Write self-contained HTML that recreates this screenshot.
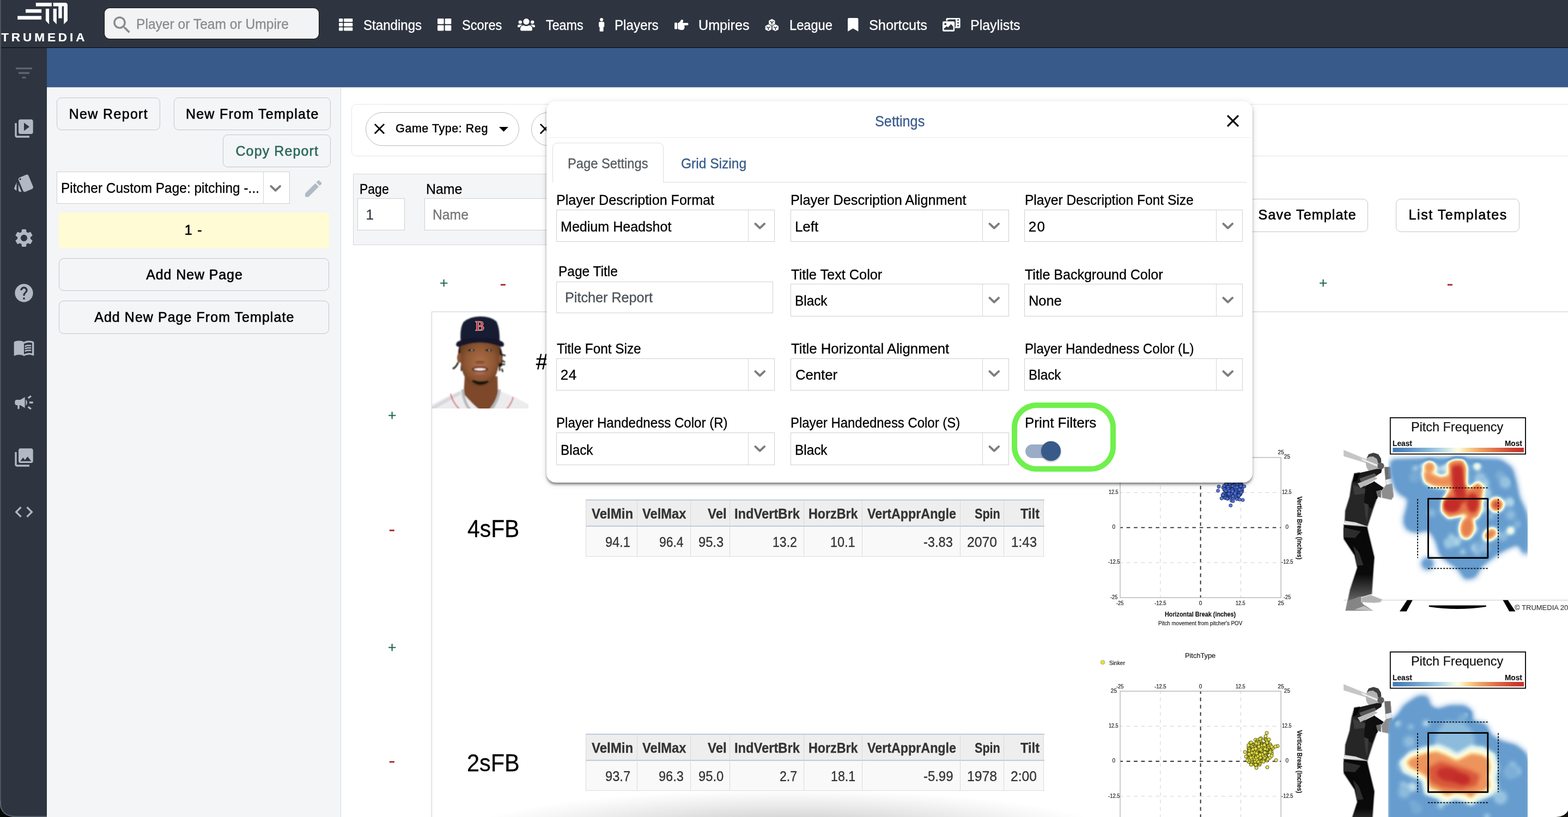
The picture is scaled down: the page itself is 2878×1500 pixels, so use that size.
<!DOCTYPE html>
<html lang="en"><head><meta charset="utf-8"><title>TruMedia - Custom Page Settings</title>
<style>
html,body{margin:0;padding:0;}
body{width:2878px;height:1500px;overflow:hidden;background:#fff;position:relative;font-family:"Liberation Sans",sans-serif;}
div,svg.a,span.t{position:absolute;}
#root{left:0;top:0;width:2878px;height:1500px;overflow:hidden;will-change:transform;width:2879px;height:1501px;}
span.t{white-space:nowrap;transform-origin:0 50%;display:block;-webkit-text-stroke:0.32px currentColor;}
svg{overflow:visible;}
</style></head>
<body>
<div id="root">
<div style="left:0px;top:0px;width:2878px;height:87px;background:#2e3440;"></div>
<div style="left:0px;top:87px;width:2878px;height:1.5px;background:#050608;"></div>
<div style="left:0px;top:88px;width:86px;height:1412px;background:#2e3440;"></div>
<div style="left:86px;top:88px;width:2792px;height:72px;background:#375a8a;"></div>
<div style="left:86px;top:160px;width:539px;height:1340px;background:#f4f5f7;"></div>
<div style="left:625px;top:160px;width:1.2px;height:1340px;background:#d6d9df;"></div>
<div style="left:86px;top:160px;width:2792px;height:1px;background:#c9ccd1;"></div>
<div style="left:0px;top:0px;width:1.6px;height:1500px;background:#4f535c;"></div>
<svg class="a" style="left:0;top:0" width="170" height="87" viewBox="0 0 170 87">
<g fill="#fff">
<rect x="65.8" y="5" width="29.1" height="6.6"/>
<rect x="47" y="16.9" width="29.1" height="6.5"/>
<rect x="32.2" y="29.3" width="43.9" height="6.6"/>
<polygon points="83.9,16.1 90.1,16.1 90.1,44.6 83.9,38"/>
<path d="M97.7 5 H119.5 Q124 5 124 9.5 V38 L117.2 44.6 V11.6 H113.7 V33.4 H107.3 V11.6 H97.7 Z"/>
<polygon points="97.7,16.1 103.9,16.1 103.9,44.6 97.7,38"/>
</g></svg>
<span class="t" style="left:2.17px;top:57.67px;font-size:22.6px;line-height:22.6px;color:#fff;font-weight:bold;letter-spacing:4.871px;-webkit-text-stroke-width:0.15px;">TRUMEDIA</span>
<div style="left:192px;top:14.5px;width:393px;height:56.5px;background:#f2f3f5;border-radius:9px;box-shadow:0 0 0 1px #111;"></div>
<svg class="a" style="left:202.8px;top:24.6px" width="41.8" height="41.8" viewBox="0 0 24 24"><path fill="#8a8a8a" d="M15.5 14h-.79l-.28-.27C15.410 12.590 16 11.110 16 9.500 16 5.910 13.090 3 9.500 3S3 5.910 3 9.500 5.910 16 9.500 16c1.610 0 3.090-.590 4.230-1.570l.27.280v.790l5 4.990L20.490 19l-4.990-5zm-6 0C7.010 14 5 11.990 5 9.500S7.010 5 9.500 5 14 7.010 14 9.500 11.990 14 9.500 14z"/></svg>
<span class="t" style="left:250.23px;top:30.99px;font-size:26px;line-height:26px;color:#8b8b8b;transform:scaleX(0.9463);">Player or Team or Umpire</span>
<span class="t" style="left:666.92px;top:33.19px;font-size:26px;line-height:26px;color:#fff;transform:scaleX(0.9267);-webkit-text-stroke-width:0.3px;">Standings</span>
<span class="t" style="left:847.74px;top:33.19px;font-size:26px;line-height:26px;color:#fff;transform:scaleX(0.9051);-webkit-text-stroke-width:0.3px;">Scores</span>
<span class="t" style="left:1001.73px;top:33.19px;font-size:26px;line-height:26px;color:#fff;transform:scaleX(0.8957);-webkit-text-stroke-width:0.3px;">Teams</span>
<span class="t" style="left:1128.27px;top:33.19px;font-size:26px;line-height:26px;color:#fff;transform:scaleX(0.9293);-webkit-text-stroke-width:0.3px;">Players</span>
<span class="t" style="left:1282.32px;top:33.19px;font-size:26px;line-height:26px;color:#fff;transform:scaleX(0.9660);-webkit-text-stroke-width:0.3px;">Umpires</span>
<span class="t" style="left:1449.31px;top:33.19px;font-size:26px;line-height:26px;color:#fff;transform:scaleX(0.9082);-webkit-text-stroke-width:0.3px;">League</span>
<span class="t" style="left:1595.06px;top:33.19px;font-size:26px;line-height:26px;color:#fff;transform:scaleX(0.9725);-webkit-text-stroke-width:0.3px;">Shortcuts</span>
<span class="t" style="left:1781.20px;top:33.19px;font-size:26px;line-height:26px;color:#fff;transform:scaleX(0.9607);-webkit-text-stroke-width:0.3px;">Playlists</span>
<svg class="a" style="left:622px;top:34.3px" width="25.3" height="22.5" viewBox="0 0 25.3 22.5"><g fill="#fff"><rect x="0" y="0.00" width="7.4" height="6.3" rx="1.3"/><rect x="9.2" y="0.00" width="16.1" height="6.3" rx="1.3"/><rect x="0" y="8.10" width="7.4" height="6.3" rx="1.3"/><rect x="9.2" y="8.10" width="16.1" height="6.3" rx="1.3"/><rect x="0" y="16.20" width="7.4" height="6.3" rx="1.3"/><rect x="9.2" y="16.20" width="16.1" height="6.3" rx="1.3"/></g></svg>
<svg class="a" style="left:802.9px;top:34.3px" width="25.3" height="22.5" viewBox="0 0 25.3 22.5"><g fill="#fff"><rect x="0.00" y="0.00" width="11.6" height="10.3" rx="1.4"/><rect x="0.00" y="12.20" width="11.6" height="10.3" rx="1.4"/><rect x="13.70" y="0.00" width="11.6" height="10.3" rx="1.4"/><rect x="13.70" y="12.20" width="11.6" height="10.3" rx="1.4"/></g></svg>
<svg class="a" style="left:949.6px;top:34.3px" width="32" height="22.5" viewBox="0 0 32 22.5"><g fill="#fff"><circle cx="16" cy="5.6" r="5.6"/><path d="M7.2 22.5 Q5 22.5 5 20 Q5 12.8 11 12.6 Q13.5 14 16 14 Q18.500 14 21 12.6 Q27 12.800 27 20 Q27 22.500 24.800 22.500 Z"/><circle cx="4.8" cy="6.6" r="3.2"/><circle cx="27.2" cy="6.6" r="3.200"/><path d="M0 14.2 Q0 11.200 3.200 11.200 H6.400 Q7.600 11.200 8.400 11.800 Q4.600 13.600 4 16 H1 Q0 16 0 15 Z"/><path d="M32 14.200 Q32 11.200 28.800 11.200 H25.600 Q24.400 11.200 23.600 11.800 Q27.400 13.600 28 16 H31 Q32 16 32 15 Z"/></g></svg>
<svg class="a" style="left:1098.6px;top:33.2px" width="10.2" height="24.8" viewBox="0 0 10.2 24.8"><g fill="#fff"><circle cx="5.1" cy="3.1" r="3.1"/><path d="M2.3 7 H7.900 Q10.200 7 10.200 9.300 V15.500 Q10.200 16.400 9.300 16.400 H8.600 V23.800 Q8.600 24.800 7.600 24.800 H2.600 Q1.600 24.800 1.600 23.800 V16.400 H0.900 Q0 16.400 0 15.500 V9.300 Q0 7 2.300 7 Z"/></g></svg>
<svg class="a" style="left:1237.6px;top:35.5px" width="25.6" height="19" viewBox="0 0 25.6 19"><g fill="#fff"><rect x="0" y="5.5" width="5" height="12" rx="1"/><path d="M6.2 6.400 Q9 5.600 11 2.400 Q12 0 13.800 0 Q16.200 0 16 2.800 Q15.800 4.600 15 6 H23.200 Q25.600 6 25.600 8.200 Q25.600 10.400 23.200 10.400 H17.600 Q19 11.400 18.400 13 Q19.200 14.400 18 15.600 Q18.200 17.600 16.400 18.400 Q15.400 19 13.600 19 H11.600 Q9.200 19 6.200 17 Z"/></g></svg>
<svg class="a" style="left:1403.8px;top:34.6px" width="25.6" height="22.2" viewBox="0 0 25.6 22.2"><polygon points="12.80,0.30 17.95,3.10 17.95,8.98 12.80,11.50 7.65,8.98 7.65,3.10" fill="#fff" stroke="#fff" stroke-width="1" stroke-linejoin="round"/><path d="M9.33 4.22 L12.80 6.18 L16.27 4.22 M12.80 6.18 V9.93" fill="none" stroke="#2e3440" stroke-width="1.500"/><polygon points="6.30,10.30 11.45,13.10 11.45,18.98 6.30,21.50 1.15,18.98 1.15,13.10" fill="#fff" stroke="#fff" stroke-width="1" stroke-linejoin="round"/><path d="M2.83 14.22 L6.30 16.18 L9.77 14.22 M6.30 16.18 V19.93" fill="none" stroke="#2e3440" stroke-width="1.500"/><polygon points="19.30,10.30 24.45,13.10 24.45,18.98 19.30,21.50 14.15,18.98 14.15,13.10" fill="#fff" stroke="#fff" stroke-width="1" stroke-linejoin="round"/><path d="M15.83 14.22 L19.30 16.18 L22.77 14.22 M19.30 16.18 V19.93" fill="none" stroke="#2e3440" stroke-width="1.500"/></svg>
<svg class="a" style="left:1555.9px;top:33.2px" width="19.4" height="24.8" viewBox="0 0 19.4 24.8"><path fill="#fff" d="M2.300 0 H17.100 Q19.400 0 19.400 2.300 V24.800 L9.700 19.200 L0 24.800 V2.300 Q0 0 2.300 0 Z"/></svg>
<svg class="a" style="left:1729.8px;top:33.2px" width="32.6" height="24.8" viewBox="0 0 32.6 24.8"><rect x="6.5" y="0" width="26.1" height="18.6" rx="2.200" fill="#fff"/><rect x="9" y="2.6" width="15" height="13.500" fill="#2e3440"/><rect x="27.300" y="2.400" width="2.600" height="2.600" fill="#2e3440"/><rect x="27.300" y="7.600" width="2.600" height="2.600" fill="#2e3440"/><rect x="27.300" y="12.800" width="2.600" height="2.600" fill="#2e3440"/><rect x="9.3" y="1.6" width="2.400" height="1.600" fill="#fff"/><rect x="-0.8" y="5.400" width="23.800" height="20.200" rx="3" fill="#2e3440"/><rect x="0" y="6.200" width="22.200" height="18.600" rx="2.200" fill="#fff"/><path d="M2.600 21.800 V19.500 L7.800 15.200 L10.200 17.200 L15.400 11.200 L19.600 16 V21.800 Z" fill="#2e3440"/><circle cx="5.200" cy="11.200" r="1.900" fill="#2e3440"/></svg>
<svg class="a" style="left:24px;top:114px" width="40" height="40" viewBox="0 0 24 24"><path fill="#5d6570" d="M10 18h4v-2h-4v2zM3 6v2h18V6H3zm3 7h12v-2H6v2z"/></svg>
<svg class="a" style="left:24px;top:215.5px" width="40" height="40" viewBox="0 0 24 24"><path fill="#b1bac4" d="M4 6H2v14c0 1.1.9 2 2 2h14v-2H4V6zm16-4H8c-1.1 0-2 .9-2 2v12c0 1.1.9 2 2 2h12c1.1 0 2-.9 2-2V4c0-1.1-.9-2-2-2zm-8 12.5v-9l6 4.5-6 4.5z"/></svg>
<svg class="a" style="left:24px;top:316.2px" width="40" height="40" viewBox="0 0 24 24"><path fill="#b1bac4" d="M2.53 19.65l1.34.56v-9.03l-2.43 5.86c-.41 1.02.08 2.19 1.09 2.61zm19.5-3.7L17.07 3.98c-.31-.75-1.04-1.21-1.81-1.23-.26 0-.53.04-.79.15L7.1 5.95c-.75.31-1.21 1.03-1.23 1.8-.01.27.04.54.15.8l4.96 11.97c.31.76 1.05 1.22 1.83 1.23.26 0 .52-.05.77-.15l7.36-3.05c1.02-.42 1.51-1.59 1.09-2.6zM7.88 8.75c-.55 0-1-.45-1-1s.45-1 1-1 1 .45 1 1-.45 1-1 1zm-2 11c0 1.1.9 2 2 2h1.45l-3.45-8.34v6.34z"/></svg>
<svg class="a" style="left:24px;top:416.9px" width="40" height="40" viewBox="0 0 24 24"><path fill="#b1bac4" d="M19.14 12.94c.04-.3.06-.61.06-.94 0-.32-.02-.64-.07-.94l2.030-1.580c.18-.14.23-.41.12-.61l-1.920-3.320c-.12-.22-.37-.29-.59-.22l-2.390.960c-.5-.38-1.030-.7-1.620-.94l-.36-2.540c-.04-.24-.24-.41-.48-.41h-3.840c-.24 0-.43.17-.47.41l-.36 2.540c-.59.24-1.130.57-1.620.94l-2.390-.960c-.22-.08-.47 0-.59.22L2.740 8.870c-.12.21-.08.47.12.61l2.030 1.580c-.05.3-.09.63-.09.94s.02.64.07.94l-2.030 1.580c-.18.14-.23.41-.12.61l1.920 3.320c.12.22.37.29.59.22l2.390-.960c.5.38 1.030.7 1.620.94l.36 2.540c.05.24.24.41.48.41h3.840c.24 0 .44-.17.47-.41l.36-2.540c.59-.24 1.130-.56 1.620-.94l2.390.960c.22.08.47 0 .59-.22l1.920-3.320c.12-.22.07-.47-.12-.61l-2.010-1.580zM12 15.600c-1.980 0-3.600-1.620-3.600-3.600s1.620-3.600 3.600-3.600 3.600 1.620 3.600 3.600-1.620 3.600-3.600 3.600z"/></svg>
<svg class="a" style="left:24px;top:517.6px" width="40" height="40" viewBox="0 0 24 24"><path fill="#b1bac4" d="M12 2C6.48 2 2 6.48 2 12s4.48 10 10 10 10-4.48 10-10S17.52 2 12 2zm1 17h-2v-2h2v2zm2.07-7.75l-.9.92C13.45 12.9 13 13.5 13 15h-2v-.5c0-1.1.45-2.1 1.17-2.83l1.24-1.26c.37-.36.59-.86.59-1.41 0-1.1-.9-2-2-2s-2 .9-2 2H8c0-2.21 1.79-4 4-4s4 1.79 4 4c0 .88-.36 1.68-.93 2.25z"/></svg>
<svg class="a" style="left:24px;top:618.3px" width="40" height="40" viewBox="0 0 24 24"><path fill="#b1bac4" d="M21 5c-1.11-.35-2.33-.5-3.5-.5-1.95 0-4.05.4-5.5 1.5-1.45-1.1-3.55-1.5-5.5-1.5S2.45 4.9 1 6v14.65c0 .25.25.5.5.5.1 0 .15-.05.25-.05C3.1 20.45 5.05 20 6.5 20c1.95 0 4.05.4 5.5 1.500 1.350-.850 3.800-1.500 5.500-1.500 1.650 0 3.350.300 4.750 1.050.100.050.150.050.250.050.250 0 .500-.250.500-.500V6c-.600-.450-1.250-.750-2-1zm0 13.500c-1.100-.350-2.300-.500-3.500-.500-1.700 0-4.150.650-5.500 1.500V8c1.350-.850 3.800-1.500 5.500-1.500 1.200 0 2.400.150 3.500.500v11.500z M17.5 10.500c.880 0 1.730.090 2.500.260V9.240c-.790-.150-1.640-.240-2.500-.240-1.700 0-3.240.290-4.500.830v1.660c1.130-.640 2.700-.990 4.500-.990zM13 12.490v1.660c1.130-.640 2.700-.990 4.500-.990.880 0 1.730.090 2.500.260V11.900c-.790-.150-1.640-.240-2.500-.240-1.700 0-3.240.300-4.500.830zM17.500 14.330c-1.700 0-3.240.290-4.500.830v1.660c1.130-.640 2.700-.990 4.500-.990.880 0 1.730.090 2.500.260v-1.520c-.790-.160-1.640-.240-2.500-.240z"/></svg>
<svg class="a" style="left:24px;top:719.0px" width="40" height="40" viewBox="0 0 24 24"><path fill="#b1bac4" d="M18 11v2h4v-2h-4zm-2 6.610c.96.71 2.210 1.650 3.200 2.390.4-.53.8-1.070 1.200-1.600-.990-.740-2.240-1.680-3.200-2.400-.4.540-.8 1.080-1.200 1.610zM20.400 5.600c-.4-.53-.8-1.070-1.200-1.600-.990.740-2.240 1.680-3.200 2.400.4.530.8 1.070 1.200 1.600.960-.720 2.210-1.650 3.200-2.400zM4 9c-1.100 0-2 .900-2 2v2c0 1.100.900 2 2 2h1v4h2v-4h1l5 3V6L8 9H4zm11.500 3c0-1.330-.580-2.530-1.500-3.350v6.690c.920-.810 1.500-2.010 1.500-3.340z"/></svg>
<svg class="a" style="left:24px;top:819.7px" width="40" height="40" viewBox="0 0 24 24"><path fill="#b1bac4" d="M22 16V4c0-1.100-.900-2-2-2H8c-1.100 0-2 .900-2 2v12c0 1.100.900 2 2 2h12c1.100 0 2-.900 2-2zm-11-4l2.030 2.710L16 11l4 5H8l3-4zM2 6v14c0 1.100.900 2 2 2h14v-2H4V6H2z"/></svg>
<svg class="a" style="left:24px;top:920.4px" width="40" height="40" viewBox="0 0 24 24"><path fill="#b1bac4" d="M9.4 16.6L4.8 12l4.600-4.600L8 6l-6 6 6 6 1.400-1.400zm5.200 0l4.600-4.600-4.600-4.600L16 6l6 6-6 6-1.400-1.400z"/></svg>
<div style="left:104px;top:179px;width:189.5px;height:59.5px;border:1.5px solid #c4c6ca;border-radius:9px;box-sizing:border-box;background:transparent;"></div><span class="t" style="left:126.70px;top:197.04px;font-size:25px;line-height:25px;color:#000;letter-spacing:1.339px;-webkit-text-stroke-width:0.6px;">New Report</span>
<div style="left:319px;top:179px;width:287.5px;height:59.5px;border:1.5px solid #c4c6ca;border-radius:9px;box-sizing:border-box;background:transparent;"></div><span class="t" style="left:340.90px;top:197.04px;font-size:25px;line-height:25px;color:#000;letter-spacing:1.261px;-webkit-text-stroke-width:0.6px;">New From Template</span>
<div style="left:409px;top:247px;width:197.5px;height:59.5px;border:1.5px solid #c4c6ca;border-radius:9px;box-sizing:border-box;background:transparent;"></div><span class="t" style="left:432.45px;top:265.04px;font-size:25px;line-height:25px;color:#2b6a5a;letter-spacing:1.121px;-webkit-text-stroke-width:0.6px;">Copy Report</span>
<div style="left:104px;top:314.5px;width:427.5px;height:59px;background:#fff;border:1px solid #cfcfcf;box-sizing:border-box;"></div>
<div style="left:483px;top:315.5px;width:1px;height:57px;background:#d4d4d4;"></div>
<span class="t" style="left:112.25px;top:331.99px;font-size:26px;line-height:26px;color:#000;transform:scaleX(0.9398);">Pitcher Custom Page: pitching -...</span>
<svg class="a" style="left:487.85px;top:326.85px" width="35.5" height="35.5" viewBox="0 0 20 20"><path fill="#7d7d7d" d="M4.516 7.548c0.436-0.446 1.043-0.481 1.576 0l3.908 3.747 3.908-3.747c0.533-0.481 1.141-0.446 1.574 0 0.436 0.445 0.408 1.197 0 1.615-0.406 0.418-4.695 4.502-4.695 4.502-0.217 0.223-0.502 0.335-0.787 0.335s-0.570-0.112-0.789-0.335c0 0-4.287-4.084-4.695-4.502s-0.436-1.170 0-1.615z"/></svg>
<svg class="a" style="left:554.5px;top:325.5px" width="40.5" height="40.5" viewBox="0 0 24 24"><path fill="#b1bac4" d="M3 17.25V21h3.750L17.810 9.940l-3.750-3.750L3 17.250zM20.710 7.040c.390-.390.390-1.020 0-1.410l-2.340-2.340c-.390-.390-1.020-.390-1.410 0l-1.830 1.830 3.750 3.750 1.830-1.830z"/></svg>
<div style="left:108px;top:390px;width:496px;height:66px;background:#fffbd5;"></div>
<span class="t" style="left:338.82px;top:410.24px;font-size:25px;line-height:25px;color:#000;letter-spacing:1.270px;-webkit-text-stroke-width:0.6px;">1 -</span>
<div style="left:108px;top:474px;width:495.5px;height:59.5px;border:1.5px solid #c4c6ca;border-radius:9px;box-sizing:border-box;background:transparent;"></div><span class="t" style="left:268.20px;top:491.54px;font-size:25px;line-height:25px;color:#000;letter-spacing:0.897px;-webkit-text-stroke-width:0.6px;">Add New Page</span>
<div style="left:108px;top:552px;width:495.5px;height:60.5px;border:1.5px solid #c4c6ca;border-radius:9px;box-sizing:border-box;background:transparent;"></div><span class="t" style="left:173.20px;top:569.84px;font-size:25px;line-height:25px;color:#000;letter-spacing:1.045px;-webkit-text-stroke-width:0.6px;">Add New Page From Template</span>
<div style="left:644.5px;top:191px;width:2300px;height:95.5px;border:1px solid #e4e5e7;border-radius:9px;box-sizing:border-box;"></div>
<div style="left:671px;top:206px;width:281.5px;height:62px;border:1.3px solid #b9b9b9;border-radius:31px;box-sizing:border-box;"></div>
<svg class="a" style="left:680.3px;top:220.3px" width="33" height="33" viewBox="0 0 24 24"><path fill="#000" d="M19 6.410L17.590 5 12 10.590 6.410 5 5 6.410 10.590 12 5 17.590 6.410 19 12 13.410 17.590 19 19 17.590 13.410 12z"/></svg>
<span class="t" style="left:726.12px;top:226.40px;font-size:21.5px;line-height:21.5px;color:#000;letter-spacing:0.551px;-webkit-text-stroke-width:0.5px;">Game Type: Reg</span>
<svg class="a" style="left:904px;top:216px" width="41" height="41" viewBox="0 0 24 24"><path fill="#000" d="M7 10l5 5 5-5z"/></svg>
<div style="left:975px;top:206px;width:281.5px;height:62px;border:1.3px solid #b9b9b9;border-radius:31px;box-sizing:border-box;"></div>
<svg class="a" style="left:984.3px;top:220.3px" width="33" height="33" viewBox="0 0 24 24"><path fill="#000" d="M19 6.410L17.590 5 12 10.590 6.410 5 5 6.410 10.590 12 5 17.590 6.410 19 12 13.410 17.590 19 19 17.590 13.410 12z"/></svg>
<div style="left:648px;top:319px;width:1500px;height:130.5px;background:#f4f5f7;border:1px solid #d3d6dc;box-sizing:border-box;"></div>
<span class="t" style="left:660.36px;top:333.99px;font-size:26px;line-height:26px;color:#000;transform:scaleX(0.8839);">Page</span>
<span class="t" style="left:782.21px;top:333.99px;font-size:26px;line-height:26px;color:#000;transform:scaleX(0.9585);">Name</span>
<div style="left:656px;top:364px;width:86.5px;height:59px;background:#fff;border:1px solid #cfcfcf;box-sizing:border-box;"></div>
<div style="left:779px;top:364px;width:400px;height:59px;background:#fff;border:1px solid #cfcfcf;box-sizing:border-box;"></div>
<span class="t" style="left:671.55px;top:380.99px;font-size:26px;line-height:26px;color:#3a3f45;">1</span>
<span class="t" style="left:794.22px;top:380.99px;font-size:26px;line-height:26px;color:#757575;transform:scaleX(0.9509);">Name</span>
<div style="left:2286px;top:365px;width:225px;height:60.5px;border:1.5px solid #c4c6ca;border-radius:9px;box-sizing:border-box;background:transparent;"></div><span class="t" style="left:2309.57px;top:382.34px;font-size:25px;line-height:25px;color:#000;letter-spacing:1.181px;-webkit-text-stroke-width:0.6px;">Save Template</span>
<div style="left:2562px;top:365px;width:226.5px;height:60.5px;border:1.5px solid #c4c6ca;border-radius:9px;box-sizing:border-box;background:transparent;"></div><span class="t" style="left:2585.60px;top:382.34px;font-size:25px;line-height:25px;color:#000;letter-spacing:1.561px;-webkit-text-stroke-width:0.6px;">List Templates</span>
<span class="t" style="left:807.39px;top:505.90px;font-size:26px;line-height:26px;color:#2b6a5a;transform-origin:7.61px 13.30px;transform:scale(1.0151,1.0047);-webkit-text-stroke-width:0.3px;">+</span>
<span class="t" style="left:2421.39px;top:505.90px;font-size:26px;line-height:26px;color:#2b6a5a;transform-origin:7.61px 13.30px;transform:scale(1.0151,1.0047);-webkit-text-stroke-width:0.3px;">+</span>
<span class="t" style="left:919.14px;top:508.08px;font-size:26px;line-height:26px;color:#a3202a;transform-origin:4.36px 15.12px;transform:scale(1.3501,1.1058);-webkit-text-stroke-width:0.3px;">-</span>
<span class="t" style="left:2657.14px;top:508.08px;font-size:26px;line-height:26px;color:#a3202a;transform-origin:4.36px 15.12px;transform:scale(1.3501,1.1058);-webkit-text-stroke-width:0.3px;">-</span>
<span class="t" style="left:711.89px;top:748.70px;font-size:26px;line-height:26px;color:#2b6a5a;transform-origin:7.61px 13.30px;transform:scale(1.0151,1.0047);-webkit-text-stroke-width:0.3px;">+</span>
<span class="t" style="left:711.89px;top:1174.70px;font-size:26px;line-height:26px;color:#2b6a5a;transform-origin:7.61px 13.30px;transform:scale(1.0151,1.0047);-webkit-text-stroke-width:0.3px;">+</span>
<span class="t" style="left:715.14px;top:959.38px;font-size:26px;line-height:26px;color:#a3202a;transform-origin:4.36px 15.12px;transform:scale(1.3501,1.1058);-webkit-text-stroke-width:0.3px;">-</span>
<span class="t" style="left:715.14px;top:1384.38px;font-size:26px;line-height:26px;color:#a3202a;transform-origin:4.36px 15.12px;transform:scale(1.3501,1.1058);-webkit-text-stroke-width:0.3px;">-</span>
<div style="left:792px;top:572px;width:2100px;height:1.3px;background:#c9ccd4;"></div>
<div style="left:791.5px;top:572px;width:1.3px;height:940px;background:#c9ccd4;"></div>
<svg class="a" style="left:792.7px;top:572.7px" width="177" height="177" viewBox="0 0 177 177"><defs><filter id="hb" x="-10%" y="-10%" width="120%" height="120%"><feGaussianBlur stdDeviation="1.3"/></filter><filter id="hb2" x="-10%" y="-10%" width="120%" height="120%"><feGaussianBlur stdDeviation="2.5"/></filter><clipPath id="hc"><rect x="0" y="0" width="177" height="177"/></clipPath><radialGradient id="skin" cx="50%" cy="45%" r="60%"><stop offset="0" stop-color="#ad7048"/><stop offset="0.6" stop-color="#8f5735"/><stop offset="1" stop-color="#633a20"/></radialGradient></defs><g clip-path="url(#hc)"><g filter="url(#hb)"><path d="M-4 180 L-4 172 Q20 158 48 146 Q60 141 66 141 L112 141 Q122 143 132 148 Q158 158 181 172 L181 180 Z" fill="#ececee"/><path d="M0 177 Q30 160 52 148" stroke="#d8d8dc" stroke-width="6" fill="none"/><path d="M34 150 Q38 166 50 178" stroke="#d23a3a" stroke-width="1.8" fill="none"/><path d="M149 156 Q146 168 137 178" stroke="#d23a3a" stroke-width="1.8" fill="none"/><path d="M60 118 L58 150 Q75 170 88 180 L104 180 Q116 166 121 150 L120 118 Z" fill="#7d4a2b"/><path d="M56 142 Q58 166 70 180" stroke="#b9b9b9" stroke-width="5" fill="none"/><path d="M124 142 Q122 162 108 180" stroke="#b9b9b9" stroke-width="5" fill="none"/><path d="M50 62 Q46 78 49 92 L55 92 L56 62 Z" fill="#1a1514"/><path d="M124 62 Q132 76 128 100 L122 100 L121 62 Z" fill="#1a1514"/><path d="M48 92 Q44 102 38 104" stroke="#1a1514" stroke-width="3" fill="none"/><path d="M54 98 L54 108" stroke="#1a1514" stroke-width="2.500" fill="none"/><path d="M128 78 L135 80 M127 88 L134 92 M126 96 L134 96 M124 100 L124 108 M128 104 L130 110" stroke="#1a1514" stroke-width="2.500" fill="none"/><path d="M52 60 Q50 95 58 115 Q68 136 88 137 Q108 136 117 116 Q126 95 124 60 Q88 50 52 60 Z" fill="url(#skin)"/><ellipse cx="50" cy="84" rx="4" ry="9" fill="#8a5232"/><ellipse cx="125" cy="86" rx="3" ry="8" fill="#8a5232"/><ellipse cx="72" cy="70" rx="6.500" ry="2.200" fill="#2a1a12"/><ellipse cx="104" cy="70" rx="6.500" ry="2.200" fill="#2a1a12"/><circle cx="73" cy="70" r="1" fill="#fff"/><circle cx="105" cy="70" r="1" fill="#fff"/><ellipse cx="88" cy="92" rx="9" ry="3" fill="#7a4526" opacity="0.7"/><ellipse cx="88" cy="105" rx="15" ry="5" fill="#6b2f28"/><ellipse cx="88" cy="105" rx="11" ry="2.200" fill="#f3ece6"/><ellipse cx="88" cy="112" rx="10" ry="3" fill="#b06a5a" opacity="0.8"/><path d="M74 126 Q88 138 103 127 Q90 131 74 126 Z" fill="#1d1411" stroke="#1d1411" stroke-width="3"/><path d="M53 58 Q50 30 58 18 Q70 8 88 8 Q108 8 118 17 Q125 30 124 58 Q88 46 53 58 Z" fill="#161a30"/><path d="M44 60 Q44 54 53 52 Q88 42 124 52 Q133 55 132 61 Q130 66 122 62 Q88 50 54 62 Q46 66 44 60 Z" fill="#14172b"/></g></g><text x="87.5" y="34" font-family="Liberation Serif, serif" font-weight="bold" font-size="25" text-anchor="middle" fill="#d5343a" stroke="#f3dede" stroke-width="0.7" filter="url(#hb0)">B</text></svg>
<span class="t" style="left:983.80px;top:643.64px;font-size:40px;line-height:40px;color:#000;">#</span>
<span class="t" style="left:857.88px;top:948.75px;font-size:44px;line-height:44px;color:#000;transform:scaleX(0.9282);">4sFB</span>
<span class="t" style="left:856.63px;top:1378.75px;font-size:44px;line-height:44px;color:#000;transform:scaleX(0.9406);">2sFB</span>
<div style="left:1075.5px;top:918px;width:840.0px;height:48px;background:#eeeeee;"></div>
<div style="left:1075.5px;top:966px;width:840.0px;height:55px;background:#f9f9f9;"></div>
<div style="left:1074.5px;top:917px;width:842.0px;height:2px;background:#bccbe0;"></div>
<div style="left:1074.5px;top:965px;width:842.0px;height:2px;background:#bccbe0;"></div>
<div style="left:1074.5px;top:1020.5px;width:842.0px;height:1.5px;background:#dcdcdc;"></div>
<div style="left:1075.0px;top:918px;width:1px;height:103px;background:#d9d9d9;"></div>
<div style="left:1168.5px;top:918px;width:1px;height:103px;background:#d9d9d9;"></div>
<div style="left:1267.0px;top:918px;width:1px;height:103px;background:#d9d9d9;"></div>
<div style="left:1339.0px;top:918px;width:1px;height:103px;background:#d9d9d9;"></div>
<div style="left:1474.5px;top:918px;width:1px;height:103px;background:#d9d9d9;"></div>
<div style="left:1581.5px;top:918px;width:1px;height:103px;background:#d9d9d9;"></div>
<div style="left:1761.5px;top:918px;width:1px;height:103px;background:#d9d9d9;"></div>
<div style="left:1841.5px;top:918px;width:1px;height:103px;background:#d9d9d9;"></div>
<div style="left:1915.0px;top:918px;width:1px;height:103px;background:#d9d9d9;"></div>
<span class="t" style="left:1086.08px;top:929.79px;font-size:26px;line-height:26px;color:#333;font-weight:bold;transform:scaleX(0.9249);">VelMin</span>
<span class="t" style="left:1178.58px;top:929.79px;font-size:26px;line-height:26px;color:#333;font-weight:bold;transform:scaleX(0.9109);">VelMax</span>
<span class="t" style="left:1298.58px;top:929.79px;font-size:26px;line-height:26px;color:#333;font-weight:bold;transform:scaleX(0.9244);">Vel</span>
<span class="t" style="left:1347.66px;top:929.79px;font-size:26px;line-height:26px;color:#333;font-weight:bold;transform:scaleX(0.9117);">IndVertBrk</span>
<span class="t" style="left:1483.94px;top:929.79px;font-size:26px;line-height:26px;color:#333;font-weight:bold;transform:scaleX(0.8953);">HorzBrk</span>
<span class="t" style="left:1591.58px;top:929.79px;font-size:26px;line-height:26px;color:#333;font-weight:bold;transform:scaleX(0.8955);">VertApprAngle</span>
<span class="t" style="left:1788.80px;top:929.79px;font-size:26px;line-height:26px;color:#333;font-weight:bold;transform:scaleX(0.8302);">Spin</span>
<span class="t" style="left:1872.71px;top:929.79px;font-size:26px;line-height:26px;color:#333;font-weight:bold;transform:scaleX(0.9099);">Tilt</span>
<span class="t" style="left:1111.14px;top:981.79px;font-size:26px;line-height:26px;color:#333;transform:scaleX(0.9029);">94.1</span>
<span class="t" style="left:1210.17px;top:981.79px;font-size:26px;line-height:26px;color:#333;transform:scaleX(0.8802);">96.4</span>
<span class="t" style="left:1281.88px;top:981.79px;font-size:26px;line-height:26px;color:#333;transform:scaleX(0.9108);">95.3</span>
<span class="t" style="left:1418.22px;top:981.79px;font-size:26px;line-height:26px;color:#333;transform:scaleX(0.8885);">13.2</span>
<span class="t" style="left:1524.44px;top:981.79px;font-size:26px;line-height:26px;color:#333;transform:scaleX(0.9019);">10.1</span>
<span class="t" style="left:1695.14px;top:981.79px;font-size:26px;line-height:26px;color:#333;transform:scaleX(0.9076);">-3.83</span>
<span class="t" style="left:1774.97px;top:981.79px;font-size:26px;line-height:26px;color:#333;transform:scaleX(0.9489);">2070</span>
<span class="t" style="left:1856.38px;top:981.79px;font-size:26px;line-height:26px;color:#333;transform:scaleX(0.9310);">1:43</span>
<div style="left:1075.5px;top:1348px;width:840.0px;height:48px;background:#eeeeee;"></div>
<div style="left:1075.5px;top:1396px;width:840.0px;height:55px;background:#f9f9f9;"></div>
<div style="left:1074.5px;top:1347px;width:842.0px;height:2px;background:#bccbe0;"></div>
<div style="left:1074.5px;top:1395px;width:842.0px;height:2px;background:#bccbe0;"></div>
<div style="left:1074.5px;top:1450.5px;width:842.0px;height:1.5px;background:#dcdcdc;"></div>
<div style="left:1075.0px;top:1348px;width:1px;height:103px;background:#d9d9d9;"></div>
<div style="left:1168.5px;top:1348px;width:1px;height:103px;background:#d9d9d9;"></div>
<div style="left:1267.0px;top:1348px;width:1px;height:103px;background:#d9d9d9;"></div>
<div style="left:1339.0px;top:1348px;width:1px;height:103px;background:#d9d9d9;"></div>
<div style="left:1474.5px;top:1348px;width:1px;height:103px;background:#d9d9d9;"></div>
<div style="left:1581.5px;top:1348px;width:1px;height:103px;background:#d9d9d9;"></div>
<div style="left:1761.5px;top:1348px;width:1px;height:103px;background:#d9d9d9;"></div>
<div style="left:1841.5px;top:1348px;width:1px;height:103px;background:#d9d9d9;"></div>
<div style="left:1915.0px;top:1348px;width:1px;height:103px;background:#d9d9d9;"></div>
<span class="t" style="left:1086.08px;top:1359.79px;font-size:26px;line-height:26px;color:#333;font-weight:bold;transform:scaleX(0.9249);">VelMin</span>
<span class="t" style="left:1178.58px;top:1359.79px;font-size:26px;line-height:26px;color:#333;font-weight:bold;transform:scaleX(0.9109);">VelMax</span>
<span class="t" style="left:1298.58px;top:1359.79px;font-size:26px;line-height:26px;color:#333;font-weight:bold;transform:scaleX(0.9244);">Vel</span>
<span class="t" style="left:1347.66px;top:1359.79px;font-size:26px;line-height:26px;color:#333;font-weight:bold;transform:scaleX(0.9117);">IndVertBrk</span>
<span class="t" style="left:1483.94px;top:1359.79px;font-size:26px;line-height:26px;color:#333;font-weight:bold;transform:scaleX(0.8953);">HorzBrk</span>
<span class="t" style="left:1591.58px;top:1359.79px;font-size:26px;line-height:26px;color:#333;font-weight:bold;transform:scaleX(0.8955);">VertApprAngle</span>
<span class="t" style="left:1788.80px;top:1359.79px;font-size:26px;line-height:26px;color:#333;font-weight:bold;transform:scaleX(0.8302);">Spin</span>
<span class="t" style="left:1872.71px;top:1359.79px;font-size:26px;line-height:26px;color:#333;font-weight:bold;transform:scaleX(0.9099);">Tilt</span>
<span class="t" style="left:1110.88px;top:1411.79px;font-size:26px;line-height:26px;color:#333;transform:scaleX(0.9105);">93.7</span>
<span class="t" style="left:1209.14px;top:1411.79px;font-size:26px;line-height:26px;color:#333;transform:scaleX(0.9056);">96.3</span>
<span class="t" style="left:1281.63px;top:1411.79px;font-size:26px;line-height:26px;color:#333;transform:scaleX(0.9135);">95.0</span>
<span class="t" style="left:1431.04px;top:1411.79px;font-size:26px;line-height:26px;color:#333;transform:scaleX(0.8882);">2.7</span>
<span class="t" style="left:1524.96px;top:1411.79px;font-size:26px;line-height:26px;color:#333;transform:scaleX(0.8914);">18.1</span>
<span class="t" style="left:1694.63px;top:1411.79px;font-size:26px;line-height:26px;color:#333;transform:scaleX(0.9185);">-5.99</span>
<span class="t" style="left:1774.84px;top:1411.79px;font-size:26px;line-height:26px;color:#333;transform:scaleX(0.9533);">1978</span>
<span class="t" style="left:1855.47px;top:1411.79px;font-size:26px;line-height:26px;color:#333;transform:scaleX(0.9470);">2:00</span>
<svg class="a" style="left:2015.9px;top:800px" width="375.2" height="337.3" viewBox="-40 -40 375.2 337.3"><line x1="73.8" y1="0" x2="73.8" y2="257.3" stroke="#cfcfcf" stroke-width="1" stroke-dasharray="6.7 6.7" stroke-dashoffset="1.7"/><line x1="0" y1="64.3" x2="295.2" y2="64.3" stroke="#cfcfcf" stroke-width="1" stroke-dasharray="6.7 6.7" stroke-dashoffset="1.7"/><line x1="221.4" y1="0" x2="221.4" y2="257.3" stroke="#cfcfcf" stroke-width="1" stroke-dasharray="6.7 6.7" stroke-dashoffset="1.7"/><line x1="0" y1="193.0" x2="295.2" y2="193.0" stroke="#cfcfcf" stroke-width="1" stroke-dasharray="6.7 6.7" stroke-dashoffset="1.7"/><line x1="147.6" y1="0" x2="147.6" y2="257.3" stroke="#2b2b2b" stroke-width="1.9" stroke-dasharray="6.7 6.7" stroke-dashoffset="1.7"/><line x1="0" y1="128.6" x2="295.2" y2="128.6" stroke="#2b2b2b" stroke-width="1.9" stroke-dasharray="6.7 6.7" stroke-dashoffset="1.7"/><rect x="0" y="0" width="295.2" height="257.3" fill="none" stroke="#adadad" stroke-width="1.25"/><circle cx="204.1" cy="63.9" r="3.05" fill="#4f73d8" fill-opacity="0.92" stroke="#0b1640" stroke-width="0.75"/><circle cx="206.5" cy="56.0" r="3.05" fill="#4f73d8" fill-opacity="0.92" stroke="#0b1640" stroke-width="0.75"/><circle cx="200.2" cy="57.0" r="3.05" fill="#4f73d8" fill-opacity="0.92" stroke="#0b1640" stroke-width="0.75"/><circle cx="216.0" cy="63.0" r="3.05" fill="#4f73d8" fill-opacity="0.92" stroke="#0b1640" stroke-width="0.75"/><circle cx="215.8" cy="61.4" r="3.05" fill="#4f73d8" fill-opacity="0.92" stroke="#0b1640" stroke-width="0.75"/><circle cx="210.5" cy="60.8" r="3.05" fill="#4f73d8" fill-opacity="0.92" stroke="#0b1640" stroke-width="0.75"/><circle cx="191.3" cy="67.1" r="3.05" fill="#4f73d8" fill-opacity="0.92" stroke="#0b1640" stroke-width="0.75"/><circle cx="210.7" cy="63.7" r="3.05" fill="#4f73d8" fill-opacity="0.92" stroke="#0b1640" stroke-width="0.75"/><circle cx="201.2" cy="54.6" r="3.05" fill="#4f73d8" fill-opacity="0.92" stroke="#0b1640" stroke-width="0.75"/><circle cx="210.3" cy="58.6" r="3.05" fill="#4f73d8" fill-opacity="0.92" stroke="#0b1640" stroke-width="0.75"/><circle cx="213.6" cy="52.9" r="3.05" fill="#4f73d8" fill-opacity="0.92" stroke="#0b1640" stroke-width="0.75"/><circle cx="209.2" cy="62.7" r="3.05" fill="#4f73d8" fill-opacity="0.92" stroke="#0b1640" stroke-width="0.75"/><circle cx="197.7" cy="75.3" r="3.05" fill="#4f73d8" fill-opacity="0.92" stroke="#0b1640" stroke-width="0.75"/><circle cx="209.3" cy="70.4" r="3.05" fill="#4f73d8" fill-opacity="0.92" stroke="#0b1640" stroke-width="0.75"/><circle cx="204.2" cy="52.0" r="3.05" fill="#4f73d8" fill-opacity="0.92" stroke="#0b1640" stroke-width="0.75"/><circle cx="204.9" cy="58.0" r="3.05" fill="#4f73d8" fill-opacity="0.92" stroke="#0b1640" stroke-width="0.75"/><circle cx="212.4" cy="61.4" r="3.05" fill="#4f73d8" fill-opacity="0.92" stroke="#0b1640" stroke-width="0.75"/><circle cx="206.2" cy="49.9" r="3.05" fill="#4f73d8" fill-opacity="0.92" stroke="#0b1640" stroke-width="0.75"/><circle cx="200.1" cy="70.6" r="3.05" fill="#4f73d8" fill-opacity="0.92" stroke="#0b1640" stroke-width="0.75"/><circle cx="200.1" cy="61.3" r="3.05" fill="#4f73d8" fill-opacity="0.92" stroke="#0b1640" stroke-width="0.75"/><circle cx="214.9" cy="44.8" r="3.05" fill="#4f73d8" fill-opacity="0.92" stroke="#0b1640" stroke-width="0.75"/><circle cx="204.7" cy="71.4" r="3.05" fill="#4f73d8" fill-opacity="0.92" stroke="#0b1640" stroke-width="0.75"/><circle cx="191.3" cy="55.9" r="3.05" fill="#4f73d8" fill-opacity="0.92" stroke="#0b1640" stroke-width="0.75"/><circle cx="208.7" cy="51.2" r="3.05" fill="#4f73d8" fill-opacity="0.92" stroke="#0b1640" stroke-width="0.75"/><circle cx="212.0" cy="58.4" r="3.05" fill="#4f73d8" fill-opacity="0.92" stroke="#0b1640" stroke-width="0.75"/><circle cx="193.1" cy="66.9" r="3.05" fill="#4f73d8" fill-opacity="0.92" stroke="#0b1640" stroke-width="0.75"/><circle cx="210.9" cy="68.0" r="3.05" fill="#4f73d8" fill-opacity="0.92" stroke="#0b1640" stroke-width="0.75"/><circle cx="218.9" cy="62.4" r="3.05" fill="#4f73d8" fill-opacity="0.92" stroke="#0b1640" stroke-width="0.75"/><circle cx="211.9" cy="46.7" r="3.05" fill="#4f73d8" fill-opacity="0.92" stroke="#0b1640" stroke-width="0.75"/><circle cx="214.4" cy="53.2" r="3.05" fill="#4f73d8" fill-opacity="0.92" stroke="#0b1640" stroke-width="0.75"/><circle cx="206.9" cy="47.0" r="3.05" fill="#4f73d8" fill-opacity="0.92" stroke="#0b1640" stroke-width="0.75"/><circle cx="200.7" cy="54.0" r="3.05" fill="#4f73d8" fill-opacity="0.92" stroke="#0b1640" stroke-width="0.75"/><circle cx="194.6" cy="61.3" r="3.05" fill="#4f73d8" fill-opacity="0.92" stroke="#0b1640" stroke-width="0.75"/><circle cx="218.4" cy="64.5" r="3.05" fill="#4f73d8" fill-opacity="0.92" stroke="#0b1640" stroke-width="0.75"/><circle cx="212.5" cy="52.0" r="3.05" fill="#4f73d8" fill-opacity="0.92" stroke="#0b1640" stroke-width="0.75"/><circle cx="195.6" cy="68.3" r="3.05" fill="#4f73d8" fill-opacity="0.92" stroke="#0b1640" stroke-width="0.75"/><circle cx="216.6" cy="60.5" r="3.05" fill="#4f73d8" fill-opacity="0.92" stroke="#0b1640" stroke-width="0.75"/><circle cx="208.6" cy="63.1" r="3.05" fill="#4f73d8" fill-opacity="0.92" stroke="#0b1640" stroke-width="0.75"/><circle cx="219.6" cy="64.9" r="3.05" fill="#4f73d8" fill-opacity="0.92" stroke="#0b1640" stroke-width="0.75"/><circle cx="210.6" cy="64.2" r="3.05" fill="#4f73d8" fill-opacity="0.92" stroke="#0b1640" stroke-width="0.75"/><circle cx="191.1" cy="71.2" r="3.05" fill="#4f73d8" fill-opacity="0.92" stroke="#0b1640" stroke-width="0.75"/><circle cx="214.4" cy="64.0" r="3.05" fill="#4f73d8" fill-opacity="0.92" stroke="#0b1640" stroke-width="0.75"/><circle cx="192.4" cy="53.0" r="3.05" fill="#4f73d8" fill-opacity="0.92" stroke="#0b1640" stroke-width="0.75"/><circle cx="219.3" cy="41.8" r="3.05" fill="#4f73d8" fill-opacity="0.92" stroke="#0b1640" stroke-width="0.75"/><circle cx="203.5" cy="68.7" r="3.05" fill="#4f73d8" fill-opacity="0.92" stroke="#0b1640" stroke-width="0.75"/><circle cx="192.4" cy="74.3" r="3.05" fill="#4f73d8" fill-opacity="0.92" stroke="#0b1640" stroke-width="0.75"/><circle cx="212.7" cy="57.6" r="3.05" fill="#4f73d8" fill-opacity="0.92" stroke="#0b1640" stroke-width="0.75"/><circle cx="208.7" cy="65.2" r="3.05" fill="#4f73d8" fill-opacity="0.92" stroke="#0b1640" stroke-width="0.75"/><circle cx="205.8" cy="69.9" r="3.05" fill="#4f73d8" fill-opacity="0.92" stroke="#0b1640" stroke-width="0.75"/><circle cx="203.0" cy="55.1" r="3.05" fill="#4f73d8" fill-opacity="0.92" stroke="#0b1640" stroke-width="0.75"/><circle cx="216.4" cy="59.3" r="3.05" fill="#4f73d8" fill-opacity="0.92" stroke="#0b1640" stroke-width="0.75"/><circle cx="197.7" cy="68.0" r="3.05" fill="#4f73d8" fill-opacity="0.92" stroke="#0b1640" stroke-width="0.75"/><circle cx="221.2" cy="54.8" r="3.05" fill="#4f73d8" fill-opacity="0.92" stroke="#0b1640" stroke-width="0.75"/><circle cx="196.2" cy="57.7" r="3.05" fill="#4f73d8" fill-opacity="0.92" stroke="#0b1640" stroke-width="0.75"/><circle cx="207.1" cy="56.2" r="3.05" fill="#4f73d8" fill-opacity="0.92" stroke="#0b1640" stroke-width="0.75"/><circle cx="222.1" cy="49.2" r="3.05" fill="#4f73d8" fill-opacity="0.92" stroke="#0b1640" stroke-width="0.75"/><circle cx="221.5" cy="47.0" r="3.05" fill="#4f73d8" fill-opacity="0.92" stroke="#0b1640" stroke-width="0.75"/><circle cx="199.3" cy="65.0" r="3.05" fill="#4f73d8" fill-opacity="0.92" stroke="#0b1640" stroke-width="0.75"/><circle cx="215.0" cy="67.2" r="3.05" fill="#4f73d8" fill-opacity="0.92" stroke="#0b1640" stroke-width="0.75"/><circle cx="210.2" cy="60.4" r="3.05" fill="#4f73d8" fill-opacity="0.92" stroke="#0b1640" stroke-width="0.75"/><circle cx="207.5" cy="64.5" r="3.05" fill="#4f73d8" fill-opacity="0.92" stroke="#0b1640" stroke-width="0.75"/><circle cx="205.4" cy="61.6" r="3.05" fill="#4f73d8" fill-opacity="0.92" stroke="#0b1640" stroke-width="0.75"/><circle cx="212.5" cy="59.0" r="3.05" fill="#4f73d8" fill-opacity="0.92" stroke="#0b1640" stroke-width="0.75"/><circle cx="212.7" cy="64.4" r="3.05" fill="#4f73d8" fill-opacity="0.92" stroke="#0b1640" stroke-width="0.75"/><circle cx="223.9" cy="62.1" r="3.05" fill="#4f73d8" fill-opacity="0.92" stroke="#0b1640" stroke-width="0.75"/><circle cx="204.9" cy="55.5" r="3.05" fill="#4f73d8" fill-opacity="0.92" stroke="#0b1640" stroke-width="0.75"/><circle cx="205.2" cy="67.8" r="3.05" fill="#4f73d8" fill-opacity="0.92" stroke="#0b1640" stroke-width="0.75"/><circle cx="203.8" cy="62.7" r="3.05" fill="#4f73d8" fill-opacity="0.92" stroke="#0b1640" stroke-width="0.75"/><circle cx="197.4" cy="61.3" r="3.05" fill="#4f73d8" fill-opacity="0.92" stroke="#0b1640" stroke-width="0.75"/><circle cx="210.4" cy="61.3" r="3.05" fill="#4f73d8" fill-opacity="0.92" stroke="#0b1640" stroke-width="0.75"/><circle cx="202.3" cy="65.2" r="3.05" fill="#4f73d8" fill-opacity="0.92" stroke="#0b1640" stroke-width="0.75"/><circle cx="211.3" cy="54.0" r="3.05" fill="#4f73d8" fill-opacity="0.92" stroke="#0b1640" stroke-width="0.75"/><circle cx="203.1" cy="58.1" r="3.05" fill="#4f73d8" fill-opacity="0.92" stroke="#0b1640" stroke-width="0.75"/><circle cx="205.8" cy="58.4" r="3.05" fill="#4f73d8" fill-opacity="0.92" stroke="#0b1640" stroke-width="0.75"/><circle cx="219.1" cy="47.9" r="3.05" fill="#4f73d8" fill-opacity="0.92" stroke="#0b1640" stroke-width="0.75"/><circle cx="204.6" cy="68.1" r="3.05" fill="#4f73d8" fill-opacity="0.92" stroke="#0b1640" stroke-width="0.75"/><circle cx="211.1" cy="73.2" r="3.05" fill="#4f73d8" fill-opacity="0.92" stroke="#0b1640" stroke-width="0.75"/><circle cx="194.0" cy="55.6" r="3.05" fill="#4f73d8" fill-opacity="0.92" stroke="#0b1640" stroke-width="0.75"/><circle cx="203.1" cy="64.9" r="3.05" fill="#4f73d8" fill-opacity="0.92" stroke="#0b1640" stroke-width="0.75"/><circle cx="220.5" cy="45.2" r="3.05" fill="#4f73d8" fill-opacity="0.92" stroke="#0b1640" stroke-width="0.75"/><circle cx="217.1" cy="44.8" r="3.05" fill="#4f73d8" fill-opacity="0.92" stroke="#0b1640" stroke-width="0.75"/><circle cx="206.1" cy="70.3" r="3.05" fill="#4f73d8" fill-opacity="0.92" stroke="#0b1640" stroke-width="0.75"/><circle cx="205.9" cy="60.8" r="3.05" fill="#4f73d8" fill-opacity="0.92" stroke="#0b1640" stroke-width="0.75"/><circle cx="214.0" cy="60.3" r="3.05" fill="#4f73d8" fill-opacity="0.92" stroke="#0b1640" stroke-width="0.75"/><circle cx="203.0" cy="73.6" r="3.05" fill="#4f73d8" fill-opacity="0.92" stroke="#0b1640" stroke-width="0.75"/><circle cx="217.2" cy="56.2" r="3.05" fill="#4f73d8" fill-opacity="0.92" stroke="#0b1640" stroke-width="0.75"/><circle cx="216.0" cy="56.5" r="3.05" fill="#4f73d8" fill-opacity="0.92" stroke="#0b1640" stroke-width="0.75"/><circle cx="207.0" cy="65.7" r="3.05" fill="#4f73d8" fill-opacity="0.92" stroke="#0b1640" stroke-width="0.75"/><circle cx="207.9" cy="65.1" r="3.05" fill="#4f73d8" fill-opacity="0.92" stroke="#0b1640" stroke-width="0.75"/><circle cx="198.4" cy="44.7" r="3.05" fill="#4f73d8" fill-opacity="0.92" stroke="#0b1640" stroke-width="0.75"/><circle cx="215.2" cy="49.8" r="3.05" fill="#4f73d8" fill-opacity="0.92" stroke="#0b1640" stroke-width="0.75"/><circle cx="202.5" cy="45.0" r="3.05" fill="#4f73d8" fill-opacity="0.92" stroke="#0b1640" stroke-width="0.75"/><circle cx="216.5" cy="66.1" r="3.05" fill="#4f73d8" fill-opacity="0.92" stroke="#0b1640" stroke-width="0.75"/><circle cx="222.5" cy="50.1" r="3.05" fill="#4f73d8" fill-opacity="0.92" stroke="#0b1640" stroke-width="0.75"/><circle cx="210.5" cy="48.2" r="3.05" fill="#4f73d8" fill-opacity="0.92" stroke="#0b1640" stroke-width="0.75"/><circle cx="210.1" cy="74.1" r="3.05" fill="#4f73d8" fill-opacity="0.92" stroke="#0b1640" stroke-width="0.75"/><circle cx="196.1" cy="73.8" r="3.05" fill="#4f73d8" fill-opacity="0.92" stroke="#0b1640" stroke-width="0.75"/><circle cx="216.4" cy="57.3" r="3.05" fill="#4f73d8" fill-opacity="0.92" stroke="#0b1640" stroke-width="0.75"/><circle cx="208.3" cy="53.3" r="3.05" fill="#4f73d8" fill-opacity="0.92" stroke="#0b1640" stroke-width="0.75"/><circle cx="210.0" cy="62.9" r="3.05" fill="#4f73d8" fill-opacity="0.92" stroke="#0b1640" stroke-width="0.75"/><circle cx="222.9" cy="49.3" r="3.05" fill="#4f73d8" fill-opacity="0.92" stroke="#0b1640" stroke-width="0.75"/><circle cx="213.5" cy="73.1" r="3.05" fill="#4f73d8" fill-opacity="0.92" stroke="#0b1640" stroke-width="0.75"/><circle cx="220.4" cy="57.3" r="3.05" fill="#4f73d8" fill-opacity="0.92" stroke="#0b1640" stroke-width="0.75"/><circle cx="198.7" cy="68.7" r="3.05" fill="#4f73d8" fill-opacity="0.92" stroke="#0b1640" stroke-width="0.75"/><circle cx="208.3" cy="60.2" r="3.05" fill="#4f73d8" fill-opacity="0.92" stroke="#0b1640" stroke-width="0.75"/><circle cx="220.4" cy="56.5" r="3.05" fill="#4f73d8" fill-opacity="0.92" stroke="#0b1640" stroke-width="0.75"/><circle cx="189.0" cy="55.3" r="3.05" fill="#4f73d8" fill-opacity="0.92" stroke="#0b1640" stroke-width="0.75"/><circle cx="189.8" cy="66.8" r="3.05" fill="#4f73d8" fill-opacity="0.92" stroke="#0b1640" stroke-width="0.75"/><circle cx="211.8" cy="53.2" r="3.05" fill="#4f73d8" fill-opacity="0.92" stroke="#0b1640" stroke-width="0.75"/><circle cx="205.4" cy="66.9" r="3.05" fill="#4f73d8" fill-opacity="0.92" stroke="#0b1640" stroke-width="0.75"/><circle cx="205.0" cy="71.6" r="3.05" fill="#4f73d8" fill-opacity="0.92" stroke="#0b1640" stroke-width="0.75"/><circle cx="204.5" cy="68.9" r="3.05" fill="#4f73d8" fill-opacity="0.92" stroke="#0b1640" stroke-width="0.75"/><circle cx="216.3" cy="74.3" r="3.05" fill="#4f73d8" fill-opacity="0.92" stroke="#0b1640" stroke-width="0.75"/><circle cx="199.7" cy="67.4" r="3.05" fill="#4f73d8" fill-opacity="0.92" stroke="#0b1640" stroke-width="0.75"/><circle cx="194.4" cy="48.7" r="3.05" fill="#4f73d8" fill-opacity="0.92" stroke="#0b1640" stroke-width="0.75"/><circle cx="188.2" cy="69.2" r="3.05" fill="#4f73d8" fill-opacity="0.92" stroke="#0b1640" stroke-width="0.75"/><circle cx="197.2" cy="58.9" r="3.05" fill="#4f73d8" fill-opacity="0.92" stroke="#0b1640" stroke-width="0.75"/><circle cx="206.0" cy="58.7" r="3.05" fill="#4f73d8" fill-opacity="0.92" stroke="#0b1640" stroke-width="0.75"/><circle cx="202.0" cy="61.2" r="3.05" fill="#4f73d8" fill-opacity="0.92" stroke="#0b1640" stroke-width="0.75"/><circle cx="222.7" cy="59.4" r="3.05" fill="#4f73d8" fill-opacity="0.92" stroke="#0b1640" stroke-width="0.75"/><circle cx="209.6" cy="68.5" r="3.05" fill="#4f73d8" fill-opacity="0.92" stroke="#0b1640" stroke-width="0.75"/><circle cx="209.1" cy="47.0" r="3.05" fill="#4f73d8" fill-opacity="0.92" stroke="#0b1640" stroke-width="0.75"/><circle cx="200.2" cy="69.2" r="3.05" fill="#4f73d8" fill-opacity="0.92" stroke="#0b1640" stroke-width="0.75"/><circle cx="195.1" cy="53.3" r="3.05" fill="#4f73d8" fill-opacity="0.92" stroke="#0b1640" stroke-width="0.75"/><circle cx="214.2" cy="66.5" r="3.05" fill="#4f73d8" fill-opacity="0.92" stroke="#0b1640" stroke-width="0.75"/><circle cx="205.7" cy="66.6" r="3.05" fill="#4f73d8" fill-opacity="0.92" stroke="#0b1640" stroke-width="0.75"/><circle cx="212.0" cy="47.8" r="3.05" fill="#4f73d8" fill-opacity="0.92" stroke="#0b1640" stroke-width="0.75"/><circle cx="195.9" cy="52.9" r="3.05" fill="#4f73d8" fill-opacity="0.92" stroke="#0b1640" stroke-width="0.75"/><circle cx="216.9" cy="53.6" r="3.05" fill="#4f73d8" fill-opacity="0.92" stroke="#0b1640" stroke-width="0.75"/><circle cx="201.9" cy="51.7" r="3.05" fill="#4f73d8" fill-opacity="0.92" stroke="#0b1640" stroke-width="0.75"/><circle cx="194.9" cy="57.9" r="3.05" fill="#4f73d8" fill-opacity="0.92" stroke="#0b1640" stroke-width="0.75"/><circle cx="196.7" cy="62.5" r="3.05" fill="#4f73d8" fill-opacity="0.92" stroke="#0b1640" stroke-width="0.75"/><circle cx="207.0" cy="40.5" r="3.05" fill="#4f73d8" fill-opacity="0.92" stroke="#0b1640" stroke-width="0.75"/><circle cx="214.4" cy="56.4" r="3.05" fill="#4f73d8" fill-opacity="0.92" stroke="#0b1640" stroke-width="0.75"/><circle cx="211.2" cy="54.6" r="3.05" fill="#4f73d8" fill-opacity="0.92" stroke="#0b1640" stroke-width="0.75"/><circle cx="212.4" cy="66.1" r="3.05" fill="#4f73d8" fill-opacity="0.92" stroke="#0b1640" stroke-width="0.75"/><circle cx="212.4" cy="62.1" r="3.05" fill="#4f73d8" fill-opacity="0.92" stroke="#0b1640" stroke-width="0.75"/><circle cx="217.3" cy="65.3" r="3.05" fill="#4f73d8" fill-opacity="0.92" stroke="#0b1640" stroke-width="0.75"/><circle cx="216.6" cy="39.2" r="3.05" fill="#4f73d8" fill-opacity="0.92" stroke="#0b1640" stroke-width="0.75"/><circle cx="211.9" cy="71.4" r="3.05" fill="#4f73d8" fill-opacity="0.92" stroke="#0b1640" stroke-width="0.75"/><circle cx="206.3" cy="54.5" r="3.05" fill="#4f73d8" fill-opacity="0.92" stroke="#0b1640" stroke-width="0.75"/><circle cx="198.0" cy="65.6" r="3.05" fill="#4f73d8" fill-opacity="0.92" stroke="#0b1640" stroke-width="0.75"/><circle cx="223.9" cy="57.9" r="3.05" fill="#4f73d8" fill-opacity="0.92" stroke="#0b1640" stroke-width="0.75"/><circle cx="210.1" cy="67.6" r="3.05" fill="#4f73d8" fill-opacity="0.92" stroke="#0b1640" stroke-width="0.75"/><circle cx="200.1" cy="58.2" r="3.05" fill="#4f73d8" fill-opacity="0.92" stroke="#0b1640" stroke-width="0.75"/><circle cx="208.0" cy="66.8" r="3.05" fill="#4f73d8" fill-opacity="0.92" stroke="#0b1640" stroke-width="0.75"/><circle cx="207.8" cy="57.1" r="3.05" fill="#4f73d8" fill-opacity="0.92" stroke="#0b1640" stroke-width="0.75"/><circle cx="199.9" cy="55.6" r="3.05" fill="#4f73d8" fill-opacity="0.92" stroke="#0b1640" stroke-width="0.75"/><circle cx="214.9" cy="60.0" r="3.05" fill="#4f73d8" fill-opacity="0.92" stroke="#0b1640" stroke-width="0.75"/><circle cx="202.5" cy="51.0" r="3.05" fill="#4f73d8" fill-opacity="0.92" stroke="#0b1640" stroke-width="0.75"/><circle cx="211.7" cy="63.6" r="3.05" fill="#4f73d8" fill-opacity="0.92" stroke="#0b1640" stroke-width="0.75"/><circle cx="220.8" cy="63.1" r="3.05" fill="#4f73d8" fill-opacity="0.92" stroke="#0b1640" stroke-width="0.75"/><circle cx="205.7" cy="64.0" r="3.05" fill="#4f73d8" fill-opacity="0.92" stroke="#0b1640" stroke-width="0.75"/><circle cx="188.5" cy="68.8" r="3.05" fill="#4f73d8" fill-opacity="0.92" stroke="#0b1640" stroke-width="0.75"/><circle cx="212.1" cy="52.3" r="3.05" fill="#4f73d8" fill-opacity="0.92" stroke="#0b1640" stroke-width="0.75"/><circle cx="214.3" cy="76.2" r="3.05" fill="#4f73d8" fill-opacity="0.92" stroke="#0b1640" stroke-width="0.75"/><circle cx="197.3" cy="52.7" r="3.05" fill="#4f73d8" fill-opacity="0.92" stroke="#0b1640" stroke-width="0.75"/><circle cx="209.6" cy="60.7" r="3.05" fill="#4f73d8" fill-opacity="0.92" stroke="#0b1640" stroke-width="0.75"/><circle cx="206.6" cy="49.7" r="3.05" fill="#4f73d8" fill-opacity="0.92" stroke="#0b1640" stroke-width="0.75"/><circle cx="200.8" cy="46.2" r="3.05" fill="#4f73d8" fill-opacity="0.92" stroke="#0b1640" stroke-width="0.75"/><circle cx="219.6" cy="68.4" r="3.05" fill="#4f73d8" fill-opacity="0.92" stroke="#0b1640" stroke-width="0.75"/><circle cx="221.1" cy="66.7" r="3.05" fill="#4f73d8" fill-opacity="0.92" stroke="#0b1640" stroke-width="0.75"/><circle cx="199.5" cy="61.5" r="3.05" fill="#4f73d8" fill-opacity="0.92" stroke="#0b1640" stroke-width="0.75"/><circle cx="191.1" cy="51.9" r="3.05" fill="#4f73d8" fill-opacity="0.92" stroke="#0b1640" stroke-width="0.75"/><circle cx="205.8" cy="64.0" r="3.05" fill="#4f73d8" fill-opacity="0.92" stroke="#0b1640" stroke-width="0.75"/><circle cx="201.7" cy="57.8" r="3.05" fill="#4f73d8" fill-opacity="0.92" stroke="#0b1640" stroke-width="0.75"/><circle cx="210.6" cy="62.6" r="3.05" fill="#4f73d8" fill-opacity="0.92" stroke="#0b1640" stroke-width="0.75"/><circle cx="212.5" cy="61.0" r="3.05" fill="#4f73d8" fill-opacity="0.92" stroke="#0b1640" stroke-width="0.75"/><circle cx="202.9" cy="66.5" r="3.05" fill="#4f73d8" fill-opacity="0.92" stroke="#0b1640" stroke-width="0.75"/><circle cx="210.1" cy="51.2" r="3.05" fill="#4f73d8" fill-opacity="0.92" stroke="#0b1640" stroke-width="0.75"/><circle cx="202.3" cy="59.0" r="3.05" fill="#4f73d8" fill-opacity="0.92" stroke="#0b1640" stroke-width="0.75"/><circle cx="206.3" cy="60.5" r="3.05" fill="#4f73d8" fill-opacity="0.92" stroke="#0b1640" stroke-width="0.75"/><circle cx="207.2" cy="60.7" r="3.05" fill="#4f73d8" fill-opacity="0.92" stroke="#0b1640" stroke-width="0.75"/><circle cx="209.6" cy="47.0" r="3.05" fill="#4f73d8" fill-opacity="0.92" stroke="#0b1640" stroke-width="0.75"/><circle cx="208.5" cy="69.0" r="3.05" fill="#4f73d8" fill-opacity="0.92" stroke="#0b1640" stroke-width="0.75"/><circle cx="211.8" cy="57.2" r="3.05" fill="#4f73d8" fill-opacity="0.92" stroke="#0b1640" stroke-width="0.75"/><circle cx="213.8" cy="49.8" r="3.05" fill="#4f73d8" fill-opacity="0.92" stroke="#0b1640" stroke-width="0.75"/><circle cx="191.3" cy="59.6" r="3.05" fill="#4f73d8" fill-opacity="0.92" stroke="#0b1640" stroke-width="0.75"/><circle cx="197.8" cy="66.0" r="3.05" fill="#4f73d8" fill-opacity="0.92" stroke="#0b1640" stroke-width="0.75"/><circle cx="194.8" cy="74.0" r="3.05" fill="#4f73d8" fill-opacity="0.92" stroke="#0b1640" stroke-width="0.75"/><circle cx="207.8" cy="46.0" r="3.05" fill="#4f73d8" fill-opacity="0.92" stroke="#0b1640" stroke-width="0.75"/><circle cx="199.8" cy="63.9" r="3.05" fill="#4f73d8" fill-opacity="0.92" stroke="#0b1640" stroke-width="0.75"/><circle cx="211.4" cy="60.7" r="3.05" fill="#4f73d8" fill-opacity="0.92" stroke="#0b1640" stroke-width="0.75"/><circle cx="218.4" cy="65.7" r="3.05" fill="#4f73d8" fill-opacity="0.92" stroke="#0b1640" stroke-width="0.75"/><circle cx="205.9" cy="64.7" r="3.05" fill="#4f73d8" fill-opacity="0.92" stroke="#0b1640" stroke-width="0.75"/><circle cx="219.2" cy="68.2" r="3.05" fill="#4f73d8" fill-opacity="0.92" stroke="#0b1640" stroke-width="0.75"/><circle cx="219.0" cy="48.7" r="3.05" fill="#4f73d8" fill-opacity="0.92" stroke="#0b1640" stroke-width="0.75"/><circle cx="204.5" cy="65.9" r="3.05" fill="#4f73d8" fill-opacity="0.92" stroke="#0b1640" stroke-width="0.75"/><circle cx="202.4" cy="69.2" r="3.05" fill="#4f73d8" fill-opacity="0.92" stroke="#0b1640" stroke-width="0.75"/><circle cx="210.4" cy="67.6" r="3.05" fill="#4f73d8" fill-opacity="0.92" stroke="#0b1640" stroke-width="0.75"/><circle cx="218.7" cy="57.0" r="3.05" fill="#4f73d8" fill-opacity="0.92" stroke="#0b1640" stroke-width="0.75"/><circle cx="202.5" cy="67.3" r="3.05" fill="#4f73d8" fill-opacity="0.92" stroke="#0b1640" stroke-width="0.75"/><circle cx="215.9" cy="59.1" r="3.05" fill="#4f73d8" fill-opacity="0.92" stroke="#0b1640" stroke-width="0.75"/><circle cx="197.2" cy="60.8" r="3.05" fill="#4f73d8" fill-opacity="0.92" stroke="#0b1640" stroke-width="0.75"/><circle cx="207.8" cy="69.7" r="3.05" fill="#4f73d8" fill-opacity="0.92" stroke="#0b1640" stroke-width="0.75"/><circle cx="214.2" cy="59.2" r="3.05" fill="#4f73d8" fill-opacity="0.92" stroke="#0b1640" stroke-width="0.75"/><circle cx="213.5" cy="64.1" r="3.05" fill="#4f73d8" fill-opacity="0.92" stroke="#0b1640" stroke-width="0.75"/><circle cx="209.2" cy="59.5" r="3.05" fill="#4f73d8" fill-opacity="0.92" stroke="#0b1640" stroke-width="0.75"/><circle cx="203.8" cy="65.5" r="3.05" fill="#4f73d8" fill-opacity="0.92" stroke="#0b1640" stroke-width="0.75"/><circle cx="200.2" cy="53.0" r="3.05" fill="#4f73d8" fill-opacity="0.92" stroke="#0b1640" stroke-width="0.75"/><circle cx="211.3" cy="45.1" r="3.05" fill="#4f73d8" fill-opacity="0.92" stroke="#0b1640" stroke-width="0.75"/><circle cx="208.9" cy="39.9" r="3.05" fill="#4f73d8" fill-opacity="0.92" stroke="#0b1640" stroke-width="0.75"/><circle cx="200.4" cy="64.4" r="3.05" fill="#4f73d8" fill-opacity="0.92" stroke="#0b1640" stroke-width="0.75"/><circle cx="212.6" cy="58.5" r="3.05" fill="#4f73d8" fill-opacity="0.92" stroke="#0b1640" stroke-width="0.75"/><circle cx="209.2" cy="45.5" r="3.05" fill="#4f73d8" fill-opacity="0.92" stroke="#0b1640" stroke-width="0.75"/><circle cx="221.8" cy="63.9" r="3.05" fill="#4f73d8" fill-opacity="0.92" stroke="#0b1640" stroke-width="0.75"/><circle cx="219.1" cy="50.6" r="3.05" fill="#4f73d8" fill-opacity="0.92" stroke="#0b1640" stroke-width="0.75"/><circle cx="210.6" cy="41.7" r="3.05" fill="#4f73d8" fill-opacity="0.92" stroke="#0b1640" stroke-width="0.75"/><circle cx="211.9" cy="67.9" r="3.05" fill="#4f73d8" fill-opacity="0.92" stroke="#0b1640" stroke-width="0.75"/><circle cx="191.6" cy="58.5" r="3.05" fill="#4f73d8" fill-opacity="0.92" stroke="#0b1640" stroke-width="0.75"/><circle cx="217.4" cy="42.3" r="3.05" fill="#4f73d8" fill-opacity="0.92" stroke="#0b1640" stroke-width="0.75"/><circle cx="194.7" cy="48.9" r="3.05" fill="#4f73d8" fill-opacity="0.92" stroke="#0b1640" stroke-width="0.75"/><circle cx="205.8" cy="45.7" r="3.05" fill="#4f73d8" fill-opacity="0.92" stroke="#0b1640" stroke-width="0.75"/><circle cx="207.2" cy="61.4" r="3.05" fill="#4f73d8" fill-opacity="0.92" stroke="#0b1640" stroke-width="0.75"/><circle cx="211.2" cy="65.7" r="3.05" fill="#4f73d8" fill-opacity="0.92" stroke="#0b1640" stroke-width="0.75"/><circle cx="217.5" cy="70.1" r="3.05" fill="#4f73d8" fill-opacity="0.92" stroke="#0b1640" stroke-width="0.75"/><circle cx="197.7" cy="54.2" r="3.05" fill="#4f73d8" fill-opacity="0.92" stroke="#0b1640" stroke-width="0.75"/><circle cx="201.3" cy="48.8" r="3.05" fill="#4f73d8" fill-opacity="0.92" stroke="#0b1640" stroke-width="0.75"/><circle cx="206.9" cy="59.1" r="3.05" fill="#4f73d8" fill-opacity="0.92" stroke="#0b1640" stroke-width="0.75"/><circle cx="215.7" cy="43.9" r="3.05" fill="#4f73d8" fill-opacity="0.92" stroke="#0b1640" stroke-width="0.75"/><circle cx="197.1" cy="58.8" r="3.05" fill="#4f73d8" fill-opacity="0.92" stroke="#0b1640" stroke-width="0.75"/><circle cx="206.7" cy="56.0" r="3.05" fill="#4f73d8" fill-opacity="0.92" stroke="#0b1640" stroke-width="0.75"/><circle cx="209.0" cy="51.8" r="3.05" fill="#4f73d8" fill-opacity="0.92" stroke="#0b1640" stroke-width="0.75"/><circle cx="212.7" cy="62.4" r="3.05" fill="#4f73d8" fill-opacity="0.92" stroke="#0b1640" stroke-width="0.75"/><circle cx="208.5" cy="52.6" r="3.05" fill="#4f73d8" fill-opacity="0.92" stroke="#0b1640" stroke-width="0.75"/><circle cx="199.2" cy="59.4" r="3.05" fill="#4f73d8" fill-opacity="0.92" stroke="#0b1640" stroke-width="0.75"/><circle cx="194.3" cy="60.9" r="3.05" fill="#4f73d8" fill-opacity="0.92" stroke="#0b1640" stroke-width="0.75"/><circle cx="212.3" cy="45.9" r="3.05" fill="#4f73d8" fill-opacity="0.92" stroke="#0b1640" stroke-width="0.75"/><circle cx="206.3" cy="56.0" r="3.05" fill="#4f73d8" fill-opacity="0.92" stroke="#0b1640" stroke-width="0.75"/><circle cx="210.0" cy="64.8" r="3.05" fill="#4f73d8" fill-opacity="0.92" stroke="#0b1640" stroke-width="0.75"/><circle cx="209.4" cy="50.9" r="3.05" fill="#4f73d8" fill-opacity="0.92" stroke="#0b1640" stroke-width="0.75"/><circle cx="206.5" cy="58.4" r="3.05" fill="#4f73d8" fill-opacity="0.92" stroke="#0b1640" stroke-width="0.75"/><circle cx="213.1" cy="61.8" r="3.05" fill="#4f73d8" fill-opacity="0.92" stroke="#0b1640" stroke-width="0.75"/><circle cx="204.8" cy="46.1" r="3.05" fill="#4f73d8" fill-opacity="0.92" stroke="#0b1640" stroke-width="0.75"/><circle cx="206.3" cy="52.0" r="3.05" fill="#4f73d8" fill-opacity="0.92" stroke="#0b1640" stroke-width="0.75"/><circle cx="198.4" cy="57.9" r="3.05" fill="#4f73d8" fill-opacity="0.92" stroke="#0b1640" stroke-width="0.75"/><circle cx="203.2" cy="60.0" r="3.05" fill="#4f73d8" fill-opacity="0.92" stroke="#0b1640" stroke-width="0.75"/><circle cx="213.1" cy="55.1" r="3.05" fill="#4f73d8" fill-opacity="0.92" stroke="#0b1640" stroke-width="0.75"/><circle cx="216.7" cy="60.2" r="3.05" fill="#4f73d8" fill-opacity="0.92" stroke="#0b1640" stroke-width="0.75"/><circle cx="200.6" cy="61.3" r="3.05" fill="#4f73d8" fill-opacity="0.92" stroke="#0b1640" stroke-width="0.75"/><circle cx="207.1" cy="71.2" r="3.05" fill="#4f73d8" fill-opacity="0.92" stroke="#0b1640" stroke-width="0.75"/><circle cx="211.7" cy="68.0" r="3.05" fill="#4f73d8" fill-opacity="0.92" stroke="#0b1640" stroke-width="0.75"/><circle cx="212.3" cy="57.5" r="3.05" fill="#4f73d8" fill-opacity="0.92" stroke="#0b1640" stroke-width="0.75"/><circle cx="214.6" cy="48.8" r="3.05" fill="#4f73d8" fill-opacity="0.92" stroke="#0b1640" stroke-width="0.75"/><circle cx="220.2" cy="49.3" r="3.05" fill="#4f73d8" fill-opacity="0.92" stroke="#0b1640" stroke-width="0.75"/><circle cx="204.4" cy="79.1" r="3.05" fill="#4f73d8" fill-opacity="0.92" stroke="#0b1640" stroke-width="0.75"/><circle cx="205.7" cy="59.2" r="3.05" fill="#4f73d8" fill-opacity="0.92" stroke="#0b1640" stroke-width="0.75"/><circle cx="217.4" cy="59.2" r="3.05" fill="#4f73d8" fill-opacity="0.92" stroke="#0b1640" stroke-width="0.75"/><circle cx="200.1" cy="61.5" r="3.05" fill="#4f73d8" fill-opacity="0.92" stroke="#0b1640" stroke-width="0.75"/><circle cx="210.8" cy="65.7" r="3.05" fill="#4f73d8" fill-opacity="0.92" stroke="#0b1640" stroke-width="0.75"/><circle cx="196.7" cy="75.6" r="3.05" fill="#4f73d8" fill-opacity="0.92" stroke="#0b1640" stroke-width="0.75"/><circle cx="221.7" cy="59.2" r="3.05" fill="#4f73d8" fill-opacity="0.92" stroke="#0b1640" stroke-width="0.75"/><circle cx="211.0" cy="54.9" r="3.05" fill="#4f73d8" fill-opacity="0.92" stroke="#0b1640" stroke-width="0.75"/><circle cx="221.4" cy="52.3" r="3.05" fill="#4f73d8" fill-opacity="0.92" stroke="#0b1640" stroke-width="0.75"/><circle cx="214.5" cy="54.4" r="3.05" fill="#4f73d8" fill-opacity="0.92" stroke="#0b1640" stroke-width="0.75"/><circle cx="199.9" cy="65.8" r="3.05" fill="#4f73d8" fill-opacity="0.92" stroke="#0b1640" stroke-width="0.75"/><circle cx="219.0" cy="58.9" r="3.05" fill="#4f73d8" fill-opacity="0.92" stroke="#0b1640" stroke-width="0.75"/><circle cx="199.8" cy="66.7" r="3.05" fill="#4f73d8" fill-opacity="0.92" stroke="#0b1640" stroke-width="0.75"/><circle cx="206.4" cy="62.0" r="3.05" fill="#4f73d8" fill-opacity="0.92" stroke="#0b1640" stroke-width="0.75"/><circle cx="217.7" cy="69.8" r="3.05" fill="#4f73d8" fill-opacity="0.92" stroke="#0b1640" stroke-width="0.75"/><circle cx="186.1" cy="75.0" r="3.05" fill="#4f73d8" fill-opacity="0.92" stroke="#0b1640" stroke-width="0.75"/><circle cx="202.8" cy="88.0" r="3.05" fill="#4f73d8" fill-opacity="0.92" stroke="#0b1640" stroke-width="0.75"/><circle cx="179.6" cy="61.0" r="3.05" fill="#4f73d8" fill-opacity="0.92" stroke="#0b1640" stroke-width="0.75"/><circle cx="227.8" cy="53.0" r="3.05" fill="#4f73d8" fill-opacity="0.92" stroke="#0b1640" stroke-width="0.75"/><circle cx="181.1" cy="53.5" r="3.05" fill="#4f73d8" fill-opacity="0.92" stroke="#0b1640" stroke-width="0.75"/><circle cx="207.1" cy="80.0" r="3.05" fill="#4f73d8" fill-opacity="0.92" stroke="#0b1640" stroke-width="0.75"/><circle cx="219.1" cy="77.0" r="3.05" fill="#4f73d8" fill-opacity="0.92" stroke="#0b1640" stroke-width="0.75"/><circle cx="225.1" cy="78.0" r="3.05" fill="#4f73d8" fill-opacity="0.92" stroke="#0b1640" stroke-width="0.75"/></svg>
<span class="t" style="left:2049.24px;top:1102.54px;font-size:10px;line-height:10px;color:#1c1c1c;transform:scaleX(0.9192);-webkit-text-stroke-width:0.2px;">-25</span>
<span class="t" style="left:2049.24px;top:826.24px;font-size:10px;line-height:10px;color:#1c1c1c;transform:scaleX(0.9192);-webkit-text-stroke-width:0.2px;">-25</span>
<span class="t" style="left:2118.93px;top:1102.54px;font-size:10px;line-height:10px;color:#1c1c1c;transform:scaleX(0.9429);-webkit-text-stroke-width:0.2px;">-12.5</span>
<span class="t" style="left:2118.93px;top:826.24px;font-size:10px;line-height:10px;color:#1c1c1c;transform:scaleX(0.9429);-webkit-text-stroke-width:0.2px;">-12.5</span>
<span class="t" style="left:2200.70px;top:1102.54px;font-size:10px;line-height:10px;color:#1c1c1c;-webkit-text-stroke-width:0.2px;">0</span>
<span class="t" style="left:2200.70px;top:826.24px;font-size:10px;line-height:10px;color:#1c1c1c;-webkit-text-stroke-width:0.2px;">0</span>
<span class="t" style="left:2268.37px;top:1102.54px;font-size:10px;line-height:10px;color:#1c1c1c;transform:scaleX(0.9014);-webkit-text-stroke-width:0.2px;">12.5</span>
<span class="t" style="left:2268.37px;top:826.24px;font-size:10px;line-height:10px;color:#1c1c1c;transform:scaleX(0.9014);-webkit-text-stroke-width:0.2px;">12.5</span>
<span class="t" style="left:2345.40px;top:1102.54px;font-size:10px;line-height:10px;color:#1c1c1c;letter-spacing:0.199px;-webkit-text-stroke-width:0.2px;">25</span>
<span class="t" style="left:2345.40px;top:826.24px;font-size:10px;line-height:10px;color:#1c1c1c;letter-spacing:0.199px;-webkit-text-stroke-width:0.2px;">25</span>
<span class="t" style="left:2038.70px;top:834.43px;font-size:10px;line-height:10px;color:#1c1c1c;letter-spacing:0.199px;-webkit-text-stroke-width:0.2px;">25</span>
<span class="t" style="left:2356.70px;top:834.43px;font-size:10px;line-height:10px;color:#1c1c1c;letter-spacing:0.199px;-webkit-text-stroke-width:0.2px;">25</span>
<span class="t" style="left:2035.47px;top:898.76px;font-size:10px;line-height:10px;color:#1c1c1c;transform:scaleX(0.9014);-webkit-text-stroke-width:0.2px;">12.5</span>
<span class="t" style="left:2353.47px;top:898.76px;font-size:10px;line-height:10px;color:#1c1c1c;transform:scaleX(0.9014);-webkit-text-stroke-width:0.2px;">12.5</span>
<span class="t" style="left:2041.60px;top:963.08px;font-size:10px;line-height:10px;color:#1c1c1c;-webkit-text-stroke-width:0.2px;">0</span>
<span class="t" style="left:2359.60px;top:963.08px;font-size:10px;line-height:10px;color:#1c1c1c;-webkit-text-stroke-width:0.2px;">0</span>
<span class="t" style="left:2033.63px;top:1027.41px;font-size:10px;line-height:10px;color:#1c1c1c;transform:scaleX(0.9429);-webkit-text-stroke-width:0.2px;">-12.5</span>
<span class="t" style="left:2351.63px;top:1027.41px;font-size:10px;line-height:10px;color:#1c1c1c;transform:scaleX(0.9429);-webkit-text-stroke-width:0.2px;">-12.5</span>
<span class="t" style="left:2037.74px;top:1091.74px;font-size:10px;line-height:10px;color:#1c1c1c;transform:scaleX(0.9192);-webkit-text-stroke-width:0.2px;">-25</span>
<span class="t" style="left:2355.74px;top:1091.74px;font-size:10px;line-height:10px;color:#1c1c1c;transform:scaleX(0.9192);-webkit-text-stroke-width:0.2px;">-25</span>
<span class="t" style="left:2138.30px;top:1122.14px;font-size:12px;line-height:12px;color:#111;font-weight:bold;transform:scaleX(0.8999);-webkit-text-stroke-width:0.15px;">Horizontal Break (inches)</span>
<span class="t" style="left:2126.07px;top:1140.47px;font-size:10.2px;line-height:10.2px;color:#1c1c1c;transform:scaleX(0.9572);-webkit-text-stroke-width:0.2px;">Pitch movement from pitcher&#x27;s POV</span>
<span class="t" style="left:2380.6px;top:968.6px;font-size:12px;line-height:12px;font-weight:bold;color:#111;-webkit-text-stroke-width:0.15px;transform-origin:0 0;transform:rotate(90deg) translate(-57.5px,-10.2px) scaleX(0.8977);">Vertical Break (inches)</span>
<svg class="a" style="left:2015.9px;top:1229.3px" width="375.2" height="337.3" viewBox="-40 -40 375.2 337.3"><line x1="73.8" y1="0" x2="73.8" y2="257.3" stroke="#cfcfcf" stroke-width="1" stroke-dasharray="6.7 6.7" stroke-dashoffset="1.7"/><line x1="0" y1="64.3" x2="295.2" y2="64.3" stroke="#cfcfcf" stroke-width="1" stroke-dasharray="6.7 6.7" stroke-dashoffset="1.7"/><line x1="221.4" y1="0" x2="221.4" y2="257.3" stroke="#cfcfcf" stroke-width="1" stroke-dasharray="6.7 6.7" stroke-dashoffset="1.7"/><line x1="0" y1="193.0" x2="295.2" y2="193.0" stroke="#cfcfcf" stroke-width="1" stroke-dasharray="6.7 6.7" stroke-dashoffset="1.7"/><line x1="147.6" y1="0" x2="147.6" y2="257.3" stroke="#2b2b2b" stroke-width="1.9" stroke-dasharray="6.7 6.7" stroke-dashoffset="1.7"/><line x1="0" y1="128.7" x2="295.2" y2="128.7" stroke="#2b2b2b" stroke-width="1.9" stroke-dasharray="6.7 6.7" stroke-dashoffset="1.7"/><rect x="0" y="0" width="295.2" height="257.3" fill="none" stroke="#adadad" stroke-width="1.25"/><circle cx="240.1" cy="115.9" r="3.05" fill="#e4e044" fill-opacity="0.92" stroke="#2e2d08" stroke-width="0.75"/><circle cx="266.8" cy="106.0" r="3.05" fill="#e4e044" fill-opacity="0.92" stroke="#2e2d08" stroke-width="0.75"/><circle cx="239.8" cy="111.0" r="3.05" fill="#e4e044" fill-opacity="0.92" stroke="#2e2d08" stroke-width="0.75"/><circle cx="257.8" cy="124.0" r="3.05" fill="#e4e044" fill-opacity="0.92" stroke="#2e2d08" stroke-width="0.75"/><circle cx="243.6" cy="97.2" r="3.05" fill="#e4e044" fill-opacity="0.92" stroke="#2e2d08" stroke-width="0.75"/><circle cx="261.6" cy="117.0" r="3.05" fill="#e4e044" fill-opacity="0.92" stroke="#2e2d08" stroke-width="0.75"/><circle cx="269.8" cy="122.7" r="3.05" fill="#e4e044" fill-opacity="0.92" stroke="#2e2d08" stroke-width="0.75"/><circle cx="254.0" cy="108.6" r="3.05" fill="#e4e044" fill-opacity="0.92" stroke="#2e2d08" stroke-width="0.75"/><circle cx="248.1" cy="99.0" r="3.05" fill="#e4e044" fill-opacity="0.92" stroke="#2e2d08" stroke-width="0.75"/><circle cx="255.4" cy="113.3" r="3.05" fill="#e4e044" fill-opacity="0.92" stroke="#2e2d08" stroke-width="0.75"/><circle cx="250.9" cy="111.0" r="3.05" fill="#e4e044" fill-opacity="0.92" stroke="#2e2d08" stroke-width="0.75"/><circle cx="256.3" cy="119.5" r="3.05" fill="#e4e044" fill-opacity="0.92" stroke="#2e2d08" stroke-width="0.75"/><circle cx="266.5" cy="114.0" r="3.05" fill="#e4e044" fill-opacity="0.92" stroke="#2e2d08" stroke-width="0.75"/><circle cx="233.2" cy="119.6" r="3.05" fill="#e4e044" fill-opacity="0.92" stroke="#2e2d08" stroke-width="0.75"/><circle cx="239.0" cy="109.8" r="3.05" fill="#e4e044" fill-opacity="0.92" stroke="#2e2d08" stroke-width="0.75"/><circle cx="238.1" cy="111.7" r="3.05" fill="#e4e044" fill-opacity="0.92" stroke="#2e2d08" stroke-width="0.75"/><circle cx="245.5" cy="114.1" r="3.05" fill="#e4e044" fill-opacity="0.92" stroke="#2e2d08" stroke-width="0.75"/><circle cx="266.7" cy="96.9" r="3.05" fill="#e4e044" fill-opacity="0.92" stroke="#2e2d08" stroke-width="0.75"/><circle cx="250.0" cy="119.1" r="3.05" fill="#e4e044" fill-opacity="0.92" stroke="#2e2d08" stroke-width="0.75"/><circle cx="252.8" cy="115.8" r="3.05" fill="#e4e044" fill-opacity="0.92" stroke="#2e2d08" stroke-width="0.75"/><circle cx="257.8" cy="100.4" r="3.05" fill="#e4e044" fill-opacity="0.92" stroke="#2e2d08" stroke-width="0.75"/><circle cx="262.5" cy="102.6" r="3.05" fill="#e4e044" fill-opacity="0.92" stroke="#2e2d08" stroke-width="0.75"/><circle cx="276.6" cy="106.0" r="3.05" fill="#e4e044" fill-opacity="0.92" stroke="#2e2d08" stroke-width="0.75"/><circle cx="262.3" cy="111.7" r="3.05" fill="#e4e044" fill-opacity="0.92" stroke="#2e2d08" stroke-width="0.75"/><circle cx="266.5" cy="105.0" r="3.05" fill="#e4e044" fill-opacity="0.92" stroke="#2e2d08" stroke-width="0.75"/><circle cx="266.0" cy="110.3" r="3.05" fill="#e4e044" fill-opacity="0.92" stroke="#2e2d08" stroke-width="0.75"/><circle cx="267.5" cy="118.7" r="3.05" fill="#e4e044" fill-opacity="0.92" stroke="#2e2d08" stroke-width="0.75"/><circle cx="257.7" cy="103.0" r="3.05" fill="#e4e044" fill-opacity="0.92" stroke="#2e2d08" stroke-width="0.75"/><circle cx="262.3" cy="116.9" r="3.05" fill="#e4e044" fill-opacity="0.92" stroke="#2e2d08" stroke-width="0.75"/><circle cx="273.7" cy="107.5" r="3.05" fill="#e4e044" fill-opacity="0.92" stroke="#2e2d08" stroke-width="0.75"/><circle cx="259.8" cy="117.4" r="3.05" fill="#e4e044" fill-opacity="0.92" stroke="#2e2d08" stroke-width="0.75"/><circle cx="257.4" cy="114.0" r="3.05" fill="#e4e044" fill-opacity="0.92" stroke="#2e2d08" stroke-width="0.75"/><circle cx="257.8" cy="105.0" r="3.05" fill="#e4e044" fill-opacity="0.92" stroke="#2e2d08" stroke-width="0.75"/><circle cx="244.0" cy="107.3" r="3.05" fill="#e4e044" fill-opacity="0.92" stroke="#2e2d08" stroke-width="0.75"/><circle cx="258.2" cy="128.6" r="3.05" fill="#e4e044" fill-opacity="0.92" stroke="#2e2d08" stroke-width="0.75"/><circle cx="263.4" cy="123.5" r="3.05" fill="#e4e044" fill-opacity="0.92" stroke="#2e2d08" stroke-width="0.75"/><circle cx="261.9" cy="119.5" r="3.05" fill="#e4e044" fill-opacity="0.92" stroke="#2e2d08" stroke-width="0.75"/><circle cx="255.1" cy="120.3" r="3.05" fill="#e4e044" fill-opacity="0.92" stroke="#2e2d08" stroke-width="0.75"/><circle cx="275.1" cy="108.0" r="3.05" fill="#e4e044" fill-opacity="0.92" stroke="#2e2d08" stroke-width="0.75"/><circle cx="242.9" cy="133.7" r="3.05" fill="#e4e044" fill-opacity="0.92" stroke="#2e2d08" stroke-width="0.75"/><circle cx="255.4" cy="122.6" r="3.05" fill="#e4e044" fill-opacity="0.92" stroke="#2e2d08" stroke-width="0.75"/><circle cx="266.7" cy="99.0" r="3.05" fill="#e4e044" fill-opacity="0.92" stroke="#2e2d08" stroke-width="0.75"/><circle cx="255.1" cy="120.1" r="3.05" fill="#e4e044" fill-opacity="0.92" stroke="#2e2d08" stroke-width="0.75"/><circle cx="257.8" cy="101.8" r="3.05" fill="#e4e044" fill-opacity="0.92" stroke="#2e2d08" stroke-width="0.75"/><circle cx="252.6" cy="115.9" r="3.05" fill="#e4e044" fill-opacity="0.92" stroke="#2e2d08" stroke-width="0.75"/><circle cx="265.7" cy="119.6" r="3.05" fill="#e4e044" fill-opacity="0.92" stroke="#2e2d08" stroke-width="0.75"/><circle cx="252.6" cy="126.9" r="3.05" fill="#e4e044" fill-opacity="0.92" stroke="#2e2d08" stroke-width="0.75"/><circle cx="244.5" cy="120.6" r="3.05" fill="#e4e044" fill-opacity="0.92" stroke="#2e2d08" stroke-width="0.75"/><circle cx="267.6" cy="108.4" r="3.05" fill="#e4e044" fill-opacity="0.92" stroke="#2e2d08" stroke-width="0.75"/><circle cx="236.4" cy="101.5" r="3.05" fill="#e4e044" fill-opacity="0.92" stroke="#2e2d08" stroke-width="0.75"/><circle cx="256.2" cy="117.6" r="3.05" fill="#e4e044" fill-opacity="0.92" stroke="#2e2d08" stroke-width="0.75"/><circle cx="273.9" cy="100.5" r="3.05" fill="#e4e044" fill-opacity="0.92" stroke="#2e2d08" stroke-width="0.75"/><circle cx="253.3" cy="119.0" r="3.05" fill="#e4e044" fill-opacity="0.92" stroke="#2e2d08" stroke-width="0.75"/><circle cx="267.7" cy="101.4" r="3.05" fill="#e4e044" fill-opacity="0.92" stroke="#2e2d08" stroke-width="0.75"/><circle cx="249.5" cy="114.2" r="3.05" fill="#e4e044" fill-opacity="0.92" stroke="#2e2d08" stroke-width="0.75"/><circle cx="252.8" cy="129.1" r="3.05" fill="#e4e044" fill-opacity="0.92" stroke="#2e2d08" stroke-width="0.75"/><circle cx="250.0" cy="132.5" r="3.05" fill="#e4e044" fill-opacity="0.92" stroke="#2e2d08" stroke-width="0.75"/><circle cx="247.9" cy="106.4" r="3.05" fill="#e4e044" fill-opacity="0.92" stroke="#2e2d08" stroke-width="0.75"/><circle cx="259.8" cy="127.7" r="3.05" fill="#e4e044" fill-opacity="0.92" stroke="#2e2d08" stroke-width="0.75"/><circle cx="261.3" cy="115.1" r="3.05" fill="#e4e044" fill-opacity="0.92" stroke="#2e2d08" stroke-width="0.75"/><circle cx="235.6" cy="103.7" r="3.05" fill="#e4e044" fill-opacity="0.92" stroke="#2e2d08" stroke-width="0.75"/><circle cx="248.8" cy="105.7" r="3.05" fill="#e4e044" fill-opacity="0.92" stroke="#2e2d08" stroke-width="0.75"/><circle cx="261.8" cy="107.9" r="3.05" fill="#e4e044" fill-opacity="0.92" stroke="#2e2d08" stroke-width="0.75"/><circle cx="263.3" cy="112.6" r="3.05" fill="#e4e044" fill-opacity="0.92" stroke="#2e2d08" stroke-width="0.75"/><circle cx="250.6" cy="113.0" r="3.05" fill="#e4e044" fill-opacity="0.92" stroke="#2e2d08" stroke-width="0.75"/><circle cx="257.7" cy="121.3" r="3.05" fill="#e4e044" fill-opacity="0.92" stroke="#2e2d08" stroke-width="0.75"/><circle cx="249.7" cy="109.1" r="3.05" fill="#e4e044" fill-opacity="0.92" stroke="#2e2d08" stroke-width="0.75"/><circle cx="236.1" cy="129.7" r="3.05" fill="#e4e044" fill-opacity="0.92" stroke="#2e2d08" stroke-width="0.75"/><circle cx="271.2" cy="109.7" r="3.05" fill="#e4e044" fill-opacity="0.92" stroke="#2e2d08" stroke-width="0.75"/><circle cx="251.7" cy="97.9" r="3.05" fill="#e4e044" fill-opacity="0.92" stroke="#2e2d08" stroke-width="0.75"/><circle cx="256.1" cy="114.0" r="3.05" fill="#e4e044" fill-opacity="0.92" stroke="#2e2d08" stroke-width="0.75"/><circle cx="278.5" cy="114.5" r="3.05" fill="#e4e044" fill-opacity="0.92" stroke="#2e2d08" stroke-width="0.75"/><circle cx="270.0" cy="113.8" r="3.05" fill="#e4e044" fill-opacity="0.92" stroke="#2e2d08" stroke-width="0.75"/><circle cx="236.2" cy="113.7" r="3.05" fill="#e4e044" fill-opacity="0.92" stroke="#2e2d08" stroke-width="0.75"/><circle cx="266.0" cy="118.1" r="3.05" fill="#e4e044" fill-opacity="0.92" stroke="#2e2d08" stroke-width="0.75"/><circle cx="256.9" cy="87.7" r="3.05" fill="#e4e044" fill-opacity="0.92" stroke="#2e2d08" stroke-width="0.75"/><circle cx="256.3" cy="94.3" r="3.05" fill="#e4e044" fill-opacity="0.92" stroke="#2e2d08" stroke-width="0.75"/><circle cx="265.6" cy="87.7" r="3.05" fill="#e4e044" fill-opacity="0.92" stroke="#2e2d08" stroke-width="0.75"/><circle cx="242.0" cy="125.4" r="3.05" fill="#e4e044" fill-opacity="0.92" stroke="#2e2d08" stroke-width="0.75"/><circle cx="275.4" cy="98.5" r="3.05" fill="#e4e044" fill-opacity="0.92" stroke="#2e2d08" stroke-width="0.75"/><circle cx="235.7" cy="121.5" r="3.05" fill="#e4e044" fill-opacity="0.92" stroke="#2e2d08" stroke-width="0.75"/><circle cx="266.1" cy="100.7" r="3.05" fill="#e4e044" fill-opacity="0.92" stroke="#2e2d08" stroke-width="0.75"/><circle cx="248.2" cy="103.9" r="3.05" fill="#e4e044" fill-opacity="0.92" stroke="#2e2d08" stroke-width="0.75"/><circle cx="242.6" cy="104.1" r="3.05" fill="#e4e044" fill-opacity="0.92" stroke="#2e2d08" stroke-width="0.75"/><circle cx="267.2" cy="119.4" r="3.05" fill="#e4e044" fill-opacity="0.92" stroke="#2e2d08" stroke-width="0.75"/><circle cx="277.8" cy="110.7" r="3.05" fill="#e4e044" fill-opacity="0.92" stroke="#2e2d08" stroke-width="0.75"/><circle cx="255.0" cy="100.7" r="3.05" fill="#e4e044" fill-opacity="0.92" stroke="#2e2d08" stroke-width="0.75"/><circle cx="255.8" cy="97.0" r="3.05" fill="#e4e044" fill-opacity="0.92" stroke="#2e2d08" stroke-width="0.75"/><circle cx="233.3" cy="119.5" r="3.05" fill="#e4e044" fill-opacity="0.92" stroke="#2e2d08" stroke-width="0.75"/><circle cx="269.1" cy="121.1" r="3.05" fill="#e4e044" fill-opacity="0.92" stroke="#2e2d08" stroke-width="0.75"/><circle cx="269.0" cy="114.5" r="3.05" fill="#e4e044" fill-opacity="0.92" stroke="#2e2d08" stroke-width="0.75"/><circle cx="246.4" cy="112.7" r="3.05" fill="#e4e044" fill-opacity="0.92" stroke="#2e2d08" stroke-width="0.75"/><circle cx="252.6" cy="99.3" r="3.05" fill="#e4e044" fill-opacity="0.92" stroke="#2e2d08" stroke-width="0.75"/><circle cx="238.6" cy="95.1" r="3.05" fill="#e4e044" fill-opacity="0.92" stroke="#2e2d08" stroke-width="0.75"/><circle cx="254.2" cy="113.4" r="3.05" fill="#e4e044" fill-opacity="0.92" stroke="#2e2d08" stroke-width="0.75"/><circle cx="246.4" cy="127.7" r="3.05" fill="#e4e044" fill-opacity="0.92" stroke="#2e2d08" stroke-width="0.75"/><circle cx="255.4" cy="118.2" r="3.05" fill="#e4e044" fill-opacity="0.92" stroke="#2e2d08" stroke-width="0.75"/><circle cx="269.9" cy="102.5" r="3.05" fill="#e4e044" fill-opacity="0.92" stroke="#2e2d08" stroke-width="0.75"/><circle cx="231.0" cy="120.1" r="3.05" fill="#e4e044" fill-opacity="0.92" stroke="#2e2d08" stroke-width="0.75"/><circle cx="244.3" cy="126.4" r="3.05" fill="#e4e044" fill-opacity="0.92" stroke="#2e2d08" stroke-width="0.75"/><circle cx="256.4" cy="123.0" r="3.05" fill="#e4e044" fill-opacity="0.92" stroke="#2e2d08" stroke-width="0.75"/><circle cx="267.3" cy="88.4" r="3.05" fill="#e4e044" fill-opacity="0.92" stroke="#2e2d08" stroke-width="0.75"/><circle cx="264.0" cy="104.2" r="3.05" fill="#e4e044" fill-opacity="0.92" stroke="#2e2d08" stroke-width="0.75"/><circle cx="247.0" cy="106.8" r="3.05" fill="#e4e044" fill-opacity="0.92" stroke="#2e2d08" stroke-width="0.75"/><circle cx="261.4" cy="121.6" r="3.05" fill="#e4e044" fill-opacity="0.92" stroke="#2e2d08" stroke-width="0.75"/><circle cx="269.2" cy="93.1" r="3.05" fill="#e4e044" fill-opacity="0.92" stroke="#2e2d08" stroke-width="0.75"/><circle cx="252.3" cy="118.4" r="3.05" fill="#e4e044" fill-opacity="0.92" stroke="#2e2d08" stroke-width="0.75"/><circle cx="245.6" cy="114.4" r="3.05" fill="#e4e044" fill-opacity="0.92" stroke="#2e2d08" stroke-width="0.75"/><circle cx="255.2" cy="123.0" r="3.05" fill="#e4e044" fill-opacity="0.92" stroke="#2e2d08" stroke-width="0.75"/><circle cx="247.1" cy="102.4" r="3.05" fill="#e4e044" fill-opacity="0.92" stroke="#2e2d08" stroke-width="0.75"/><circle cx="242.5" cy="131.3" r="3.05" fill="#e4e044" fill-opacity="0.92" stroke="#2e2d08" stroke-width="0.75"/><circle cx="267.1" cy="110.3" r="3.05" fill="#e4e044" fill-opacity="0.92" stroke="#2e2d08" stroke-width="0.75"/><circle cx="256.9" cy="113.0" r="3.05" fill="#e4e044" fill-opacity="0.92" stroke="#2e2d08" stroke-width="0.75"/><circle cx="257.3" cy="109.4" r="3.05" fill="#e4e044" fill-opacity="0.92" stroke="#2e2d08" stroke-width="0.75"/><circle cx="253.4" cy="97.6" r="3.05" fill="#e4e044" fill-opacity="0.92" stroke="#2e2d08" stroke-width="0.75"/><circle cx="244.1" cy="130.2" r="3.05" fill="#e4e044" fill-opacity="0.92" stroke="#2e2d08" stroke-width="0.75"/><circle cx="260.5" cy="112.4" r="3.05" fill="#e4e044" fill-opacity="0.92" stroke="#2e2d08" stroke-width="0.75"/><circle cx="252.1" cy="112.4" r="3.05" fill="#e4e044" fill-opacity="0.92" stroke="#2e2d08" stroke-width="0.75"/><circle cx="259.8" cy="104.5" r="3.05" fill="#e4e044" fill-opacity="0.92" stroke="#2e2d08" stroke-width="0.75"/><circle cx="256.3" cy="114.4" r="3.05" fill="#e4e044" fill-opacity="0.92" stroke="#2e2d08" stroke-width="0.75"/><circle cx="247.8" cy="102.9" r="3.05" fill="#e4e044" fill-opacity="0.92" stroke="#2e2d08" stroke-width="0.75"/><circle cx="245.5" cy="99.8" r="3.05" fill="#e4e044" fill-opacity="0.92" stroke="#2e2d08" stroke-width="0.75"/><circle cx="252.8" cy="104.9" r="3.05" fill="#e4e044" fill-opacity="0.92" stroke="#2e2d08" stroke-width="0.75"/><circle cx="247.5" cy="112.8" r="3.05" fill="#e4e044" fill-opacity="0.92" stroke="#2e2d08" stroke-width="0.75"/><circle cx="267.1" cy="112.6" r="3.05" fill="#e4e044" fill-opacity="0.92" stroke="#2e2d08" stroke-width="0.75"/><circle cx="254.3" cy="104.8" r="3.05" fill="#e4e044" fill-opacity="0.92" stroke="#2e2d08" stroke-width="0.75"/><circle cx="251.3" cy="121.9" r="3.05" fill="#e4e044" fill-opacity="0.92" stroke="#2e2d08" stroke-width="0.75"/><circle cx="252.5" cy="98.9" r="3.05" fill="#e4e044" fill-opacity="0.92" stroke="#2e2d08" stroke-width="0.75"/><circle cx="242.7" cy="99.3" r="3.05" fill="#e4e044" fill-opacity="0.92" stroke="#2e2d08" stroke-width="0.75"/><circle cx="236.8" cy="124.0" r="3.05" fill="#e4e044" fill-opacity="0.92" stroke="#2e2d08" stroke-width="0.75"/><circle cx="259.1" cy="109.0" r="3.05" fill="#e4e044" fill-opacity="0.92" stroke="#2e2d08" stroke-width="0.75"/><circle cx="272.3" cy="104.3" r="3.05" fill="#e4e044" fill-opacity="0.92" stroke="#2e2d08" stroke-width="0.75"/><circle cx="261.4" cy="120.7" r="3.05" fill="#e4e044" fill-opacity="0.92" stroke="#2e2d08" stroke-width="0.75"/><circle cx="240.4" cy="94.3" r="3.05" fill="#e4e044" fill-opacity="0.92" stroke="#2e2d08" stroke-width="0.75"/><circle cx="242.4" cy="121.9" r="3.05" fill="#e4e044" fill-opacity="0.92" stroke="#2e2d08" stroke-width="0.75"/><circle cx="271.6" cy="98.0" r="3.05" fill="#e4e044" fill-opacity="0.92" stroke="#2e2d08" stroke-width="0.75"/><circle cx="267.1" cy="107.4" r="3.05" fill="#e4e044" fill-opacity="0.92" stroke="#2e2d08" stroke-width="0.75"/><circle cx="251.3" cy="105.5" r="3.05" fill="#e4e044" fill-opacity="0.92" stroke="#2e2d08" stroke-width="0.75"/><circle cx="254.6" cy="91.3" r="3.05" fill="#e4e044" fill-opacity="0.92" stroke="#2e2d08" stroke-width="0.75"/><circle cx="245.9" cy="97.9" r="3.05" fill="#e4e044" fill-opacity="0.92" stroke="#2e2d08" stroke-width="0.75"/><circle cx="255.9" cy="135.1" r="3.05" fill="#e4e044" fill-opacity="0.92" stroke="#2e2d08" stroke-width="0.75"/><circle cx="236.1" cy="107.1" r="3.05" fill="#e4e044" fill-opacity="0.92" stroke="#2e2d08" stroke-width="0.75"/><circle cx="240.1" cy="133.9" r="3.05" fill="#e4e044" fill-opacity="0.92" stroke="#2e2d08" stroke-width="0.75"/><circle cx="262.5" cy="103.5" r="3.05" fill="#e4e044" fill-opacity="0.92" stroke="#2e2d08" stroke-width="0.75"/><circle cx="264.0" cy="117.7" r="3.05" fill="#e4e044" fill-opacity="0.92" stroke="#2e2d08" stroke-width="0.75"/><circle cx="237.5" cy="105.7" r="3.05" fill="#e4e044" fill-opacity="0.92" stroke="#2e2d08" stroke-width="0.75"/><circle cx="251.9" cy="111.9" r="3.05" fill="#e4e044" fill-opacity="0.92" stroke="#2e2d08" stroke-width="0.75"/><circle cx="256.8" cy="107.9" r="3.05" fill="#e4e044" fill-opacity="0.92" stroke="#2e2d08" stroke-width="0.75"/><circle cx="257.9" cy="105.1" r="3.05" fill="#e4e044" fill-opacity="0.92" stroke="#2e2d08" stroke-width="0.75"/><circle cx="241.5" cy="128.7" r="3.05" fill="#e4e044" fill-opacity="0.92" stroke="#2e2d08" stroke-width="0.75"/><circle cx="257.8" cy="116.6" r="3.05" fill="#e4e044" fill-opacity="0.92" stroke="#2e2d08" stroke-width="0.75"/><circle cx="237.1" cy="109.8" r="3.05" fill="#e4e044" fill-opacity="0.92" stroke="#2e2d08" stroke-width="0.75"/><circle cx="266.4" cy="97.2" r="3.05" fill="#e4e044" fill-opacity="0.92" stroke="#2e2d08" stroke-width="0.75"/><circle cx="267.7" cy="107.3" r="3.05" fill="#e4e044" fill-opacity="0.92" stroke="#2e2d08" stroke-width="0.75"/><circle cx="259.4" cy="110.2" r="3.05" fill="#e4e044" fill-opacity="0.92" stroke="#2e2d08" stroke-width="0.75"/><circle cx="254.6" cy="125.2" r="3.05" fill="#e4e044" fill-opacity="0.92" stroke="#2e2d08" stroke-width="0.75"/><circle cx="247.0" cy="129.2" r="3.05" fill="#e4e044" fill-opacity="0.92" stroke="#2e2d08" stroke-width="0.75"/><circle cx="247.7" cy="101.3" r="3.05" fill="#e4e044" fill-opacity="0.92" stroke="#2e2d08" stroke-width="0.75"/><circle cx="264.7" cy="99.8" r="3.05" fill="#e4e044" fill-opacity="0.92" stroke="#2e2d08" stroke-width="0.75"/><circle cx="248.6" cy="121.9" r="3.05" fill="#e4e044" fill-opacity="0.92" stroke="#2e2d08" stroke-width="0.75"/><circle cx="271.7" cy="91.8" r="3.05" fill="#e4e044" fill-opacity="0.92" stroke="#2e2d08" stroke-width="0.75"/><circle cx="256.5" cy="132.8" r="3.05" fill="#e4e044" fill-opacity="0.92" stroke="#2e2d08" stroke-width="0.75"/><circle cx="268.5" cy="109.0" r="3.05" fill="#e4e044" fill-opacity="0.92" stroke="#2e2d08" stroke-width="0.75"/><circle cx="248.5" cy="108.4" r="3.05" fill="#e4e044" fill-opacity="0.92" stroke="#2e2d08" stroke-width="0.75"/><circle cx="242.2" cy="108.7" r="3.05" fill="#e4e044" fill-opacity="0.92" stroke="#2e2d08" stroke-width="0.75"/><circle cx="252.8" cy="110.1" r="3.05" fill="#e4e044" fill-opacity="0.92" stroke="#2e2d08" stroke-width="0.75"/><circle cx="268.3" cy="109.1" r="3.05" fill="#e4e044" fill-opacity="0.92" stroke="#2e2d08" stroke-width="0.75"/><circle cx="236.2" cy="123.5" r="3.05" fill="#e4e044" fill-opacity="0.92" stroke="#2e2d08" stroke-width="0.75"/><circle cx="243.5" cy="106.7" r="3.05" fill="#e4e044" fill-opacity="0.92" stroke="#2e2d08" stroke-width="0.75"/><circle cx="253.8" cy="107.8" r="3.05" fill="#e4e044" fill-opacity="0.92" stroke="#2e2d08" stroke-width="0.75"/><circle cx="243.9" cy="108.9" r="3.05" fill="#e4e044" fill-opacity="0.92" stroke="#2e2d08" stroke-width="0.75"/><circle cx="280.3" cy="104.9" r="3.05" fill="#e4e044" fill-opacity="0.92" stroke="#2e2d08" stroke-width="0.75"/><circle cx="250.8" cy="124.3" r="3.05" fill="#e4e044" fill-opacity="0.92" stroke="#2e2d08" stroke-width="0.75"/><circle cx="261.4" cy="120.2" r="3.05" fill="#e4e044" fill-opacity="0.92" stroke="#2e2d08" stroke-width="0.75"/><circle cx="268.2" cy="89.7" r="3.05" fill="#e4e044" fill-opacity="0.92" stroke="#2e2d08" stroke-width="0.75"/><circle cx="244.7" cy="113.1" r="3.05" fill="#e4e044" fill-opacity="0.92" stroke="#2e2d08" stroke-width="0.75"/><circle cx="257.6" cy="126.2" r="3.05" fill="#e4e044" fill-opacity="0.92" stroke="#2e2d08" stroke-width="0.75"/><circle cx="260.3" cy="109.0" r="3.05" fill="#e4e044" fill-opacity="0.92" stroke="#2e2d08" stroke-width="0.75"/><circle cx="255.5" cy="109.3" r="3.05" fill="#e4e044" fill-opacity="0.92" stroke="#2e2d08" stroke-width="0.75"/><circle cx="256.0" cy="119.3" r="3.05" fill="#e4e044" fill-opacity="0.92" stroke="#2e2d08" stroke-width="0.75"/><circle cx="252.4" cy="102.6" r="3.05" fill="#e4e044" fill-opacity="0.92" stroke="#2e2d08" stroke-width="0.75"/><circle cx="242.8" cy="124.0" r="3.05" fill="#e4e044" fill-opacity="0.92" stroke="#2e2d08" stroke-width="0.75"/><circle cx="267.0" cy="122.8" r="3.05" fill="#e4e044" fill-opacity="0.92" stroke="#2e2d08" stroke-width="0.75"/><circle cx="262.5" cy="121.0" r="3.05" fill="#e4e044" fill-opacity="0.92" stroke="#2e2d08" stroke-width="0.75"/><circle cx="253.2" cy="119.1" r="3.05" fill="#e4e044" fill-opacity="0.92" stroke="#2e2d08" stroke-width="0.75"/><circle cx="243.2" cy="109.4" r="3.05" fill="#e4e044" fill-opacity="0.92" stroke="#2e2d08" stroke-width="0.75"/><circle cx="244.9" cy="119.8" r="3.05" fill="#e4e044" fill-opacity="0.92" stroke="#2e2d08" stroke-width="0.75"/><circle cx="248.3" cy="110.5" r="3.05" fill="#e4e044" fill-opacity="0.92" stroke="#2e2d08" stroke-width="0.75"/><circle cx="256.4" cy="126.9" r="3.05" fill="#e4e044" fill-opacity="0.92" stroke="#2e2d08" stroke-width="0.75"/><circle cx="247.6" cy="101.2" r="3.05" fill="#e4e044" fill-opacity="0.92" stroke="#2e2d08" stroke-width="0.75"/><circle cx="266.0" cy="99.3" r="3.05" fill="#e4e044" fill-opacity="0.92" stroke="#2e2d08" stroke-width="0.75"/><circle cx="260.8" cy="105.3" r="3.05" fill="#e4e044" fill-opacity="0.92" stroke="#2e2d08" stroke-width="0.75"/><circle cx="257.1" cy="91.3" r="3.05" fill="#e4e044" fill-opacity="0.92" stroke="#2e2d08" stroke-width="0.75"/><circle cx="263.6" cy="106.1" r="3.05" fill="#e4e044" fill-opacity="0.92" stroke="#2e2d08" stroke-width="0.75"/><circle cx="240.4" cy="135.0" r="3.05" fill="#e4e044" fill-opacity="0.92" stroke="#2e2d08" stroke-width="0.75"/><circle cx="259.9" cy="107.8" r="3.05" fill="#e4e044" fill-opacity="0.92" stroke="#2e2d08" stroke-width="0.75"/><circle cx="252.6" cy="129.7" r="3.05" fill="#e4e044" fill-opacity="0.92" stroke="#2e2d08" stroke-width="0.75"/><circle cx="253.4" cy="116.8" r="3.05" fill="#e4e044" fill-opacity="0.92" stroke="#2e2d08" stroke-width="0.75"/><circle cx="262.2" cy="101.5" r="3.05" fill="#e4e044" fill-opacity="0.92" stroke="#2e2d08" stroke-width="0.75"/><circle cx="257.0" cy="106.1" r="3.05" fill="#e4e044" fill-opacity="0.92" stroke="#2e2d08" stroke-width="0.75"/><circle cx="238.9" cy="121.5" r="3.05" fill="#e4e044" fill-opacity="0.92" stroke="#2e2d08" stroke-width="0.75"/><circle cx="261.9" cy="112.5" r="3.05" fill="#e4e044" fill-opacity="0.92" stroke="#2e2d08" stroke-width="0.75"/><circle cx="248.4" cy="89.2" r="3.05" fill="#e4e044" fill-opacity="0.92" stroke="#2e2d08" stroke-width="0.75"/><circle cx="260.2" cy="110.6" r="3.05" fill="#e4e044" fill-opacity="0.92" stroke="#2e2d08" stroke-width="0.75"/><circle cx="235.9" cy="111.0" r="3.05" fill="#e4e044" fill-opacity="0.92" stroke="#2e2d08" stroke-width="0.75"/><circle cx="237.6" cy="111.4" r="3.05" fill="#e4e044" fill-opacity="0.92" stroke="#2e2d08" stroke-width="0.75"/><circle cx="255.5" cy="115.7" r="3.05" fill="#e4e044" fill-opacity="0.92" stroke="#2e2d08" stroke-width="0.75"/><circle cx="256.7" cy="113.6" r="3.05" fill="#e4e044" fill-opacity="0.92" stroke="#2e2d08" stroke-width="0.75"/><circle cx="242.6" cy="107.4" r="3.05" fill="#e4e044" fill-opacity="0.92" stroke="#2e2d08" stroke-width="0.75"/><circle cx="249.3" cy="109.1" r="3.05" fill="#e4e044" fill-opacity="0.92" stroke="#2e2d08" stroke-width="0.75"/><circle cx="256.4" cy="118.6" r="3.05" fill="#e4e044" fill-opacity="0.92" stroke="#2e2d08" stroke-width="0.75"/><circle cx="259.5" cy="109.5" r="3.05" fill="#e4e044" fill-opacity="0.92" stroke="#2e2d08" stroke-width="0.75"/><circle cx="235.3" cy="116.2" r="3.05" fill="#e4e044" fill-opacity="0.92" stroke="#2e2d08" stroke-width="0.75"/><circle cx="246.8" cy="122.8" r="3.05" fill="#e4e044" fill-opacity="0.92" stroke="#2e2d08" stroke-width="0.75"/><circle cx="243.0" cy="110.6" r="3.05" fill="#e4e044" fill-opacity="0.92" stroke="#2e2d08" stroke-width="0.75"/><circle cx="253.3" cy="110.6" r="3.05" fill="#e4e044" fill-opacity="0.92" stroke="#2e2d08" stroke-width="0.75"/><circle cx="251.7" cy="91.1" r="3.05" fill="#e4e044" fill-opacity="0.92" stroke="#2e2d08" stroke-width="0.75"/><circle cx="257.8" cy="122.9" r="3.05" fill="#e4e044" fill-opacity="0.92" stroke="#2e2d08" stroke-width="0.75"/><circle cx="255.9" cy="100.3" r="3.05" fill="#e4e044" fill-opacity="0.92" stroke="#2e2d08" stroke-width="0.75"/><circle cx="255.7" cy="118.0" r="3.05" fill="#e4e044" fill-opacity="0.92" stroke="#2e2d08" stroke-width="0.75"/><circle cx="252.7" cy="111.5" r="3.05" fill="#e4e044" fill-opacity="0.92" stroke="#2e2d08" stroke-width="0.75"/><circle cx="272.6" cy="99.2" r="3.05" fill="#e4e044" fill-opacity="0.92" stroke="#2e2d08" stroke-width="0.75"/><circle cx="252.2" cy="90.4" r="3.05" fill="#e4e044" fill-opacity="0.92" stroke="#2e2d08" stroke-width="0.75"/><circle cx="248.2" cy="103.4" r="3.05" fill="#e4e044" fill-opacity="0.92" stroke="#2e2d08" stroke-width="0.75"/><circle cx="245.2" cy="103.9" r="3.05" fill="#e4e044" fill-opacity="0.92" stroke="#2e2d08" stroke-width="0.75"/><circle cx="275.1" cy="109.5" r="3.05" fill="#e4e044" fill-opacity="0.92" stroke="#2e2d08" stroke-width="0.75"/><circle cx="248.9" cy="136.3" r="3.05" fill="#e4e044" fill-opacity="0.92" stroke="#2e2d08" stroke-width="0.75"/><circle cx="257.4" cy="92.3" r="3.05" fill="#e4e044" fill-opacity="0.92" stroke="#2e2d08" stroke-width="0.75"/><circle cx="261.0" cy="101.2" r="3.05" fill="#e4e044" fill-opacity="0.92" stroke="#2e2d08" stroke-width="0.75"/><circle cx="275.4" cy="97.7" r="3.05" fill="#e4e044" fill-opacity="0.92" stroke="#2e2d08" stroke-width="0.75"/><circle cx="251.3" cy="93.7" r="3.05" fill="#e4e044" fill-opacity="0.92" stroke="#2e2d08" stroke-width="0.75"/><circle cx="257.7" cy="100.3" r="3.05" fill="#e4e044" fill-opacity="0.92" stroke="#2e2d08" stroke-width="0.75"/><circle cx="254.6" cy="107.5" r="3.05" fill="#e4e044" fill-opacity="0.92" stroke="#2e2d08" stroke-width="0.75"/><circle cx="245.8" cy="122.3" r="3.05" fill="#e4e044" fill-opacity="0.92" stroke="#2e2d08" stroke-width="0.75"/><circle cx="265.0" cy="112.4" r="3.05" fill="#e4e044" fill-opacity="0.92" stroke="#2e2d08" stroke-width="0.75"/><circle cx="246.7" cy="99.7" r="3.05" fill="#e4e044" fill-opacity="0.92" stroke="#2e2d08" stroke-width="0.75"/><circle cx="251.1" cy="102.9" r="3.05" fill="#e4e044" fill-opacity="0.92" stroke="#2e2d08" stroke-width="0.75"/><circle cx="249.0" cy="99.4" r="3.05" fill="#e4e044" fill-opacity="0.92" stroke="#2e2d08" stroke-width="0.75"/><circle cx="244.1" cy="109.4" r="3.05" fill="#e4e044" fill-opacity="0.92" stroke="#2e2d08" stroke-width="0.75"/><circle cx="270.7" cy="111.7" r="3.05" fill="#e4e044" fill-opacity="0.92" stroke="#2e2d08" stroke-width="0.75"/><circle cx="252.1" cy="93.6" r="3.05" fill="#e4e044" fill-opacity="0.92" stroke="#2e2d08" stroke-width="0.75"/><circle cx="257.0" cy="111.4" r="3.05" fill="#e4e044" fill-opacity="0.92" stroke="#2e2d08" stroke-width="0.75"/><circle cx="243.0" cy="99.5" r="3.05" fill="#e4e044" fill-opacity="0.92" stroke="#2e2d08" stroke-width="0.75"/><circle cx="252.1" cy="123.0" r="3.05" fill="#e4e044" fill-opacity="0.92" stroke="#2e2d08" stroke-width="0.75"/><circle cx="261.2" cy="114.0" r="3.05" fill="#e4e044" fill-opacity="0.92" stroke="#2e2d08" stroke-width="0.75"/><circle cx="250.3" cy="115.3" r="3.05" fill="#e4e044" fill-opacity="0.92" stroke="#2e2d08" stroke-width="0.75"/><circle cx="250.1" cy="136.0" r="3.05" fill="#e4e044" fill-opacity="0.92" stroke="#2e2d08" stroke-width="0.75"/><circle cx="242.7" cy="107.6" r="3.05" fill="#e4e044" fill-opacity="0.92" stroke="#2e2d08" stroke-width="0.75"/><circle cx="269.3" cy="108.7" r="3.05" fill="#e4e044" fill-opacity="0.92" stroke="#2e2d08" stroke-width="0.75"/><circle cx="270.6" cy="111.2" r="3.05" fill="#e4e044" fill-opacity="0.92" stroke="#2e2d08" stroke-width="0.75"/><circle cx="257.0" cy="107.5" r="3.05" fill="#e4e044" fill-opacity="0.92" stroke="#2e2d08" stroke-width="0.75"/><circle cx="241.1" cy="100.8" r="3.05" fill="#e4e044" fill-opacity="0.92" stroke="#2e2d08" stroke-width="0.75"/><circle cx="278.1" cy="118.9" r="3.05" fill="#e4e044" fill-opacity="0.92" stroke="#2e2d08" stroke-width="0.75"/><circle cx="259.5" cy="122.4" r="3.05" fill="#e4e044" fill-opacity="0.92" stroke="#2e2d08" stroke-width="0.75"/><circle cx="258.9" cy="123.1" r="3.05" fill="#e4e044" fill-opacity="0.92" stroke="#2e2d08" stroke-width="0.75"/><circle cx="252.1" cy="109.2" r="3.05" fill="#e4e044" fill-opacity="0.92" stroke="#2e2d08" stroke-width="0.75"/><circle cx="266.3" cy="107.8" r="3.05" fill="#e4e044" fill-opacity="0.92" stroke="#2e2d08" stroke-width="0.75"/><circle cx="240.1" cy="109.2" r="3.05" fill="#e4e044" fill-opacity="0.92" stroke="#2e2d08" stroke-width="0.75"/><circle cx="247.3" cy="118.6" r="3.05" fill="#e4e044" fill-opacity="0.92" stroke="#2e2d08" stroke-width="0.75"/><circle cx="248.7" cy="99.8" r="3.05" fill="#e4e044" fill-opacity="0.92" stroke="#2e2d08" stroke-width="0.75"/><circle cx="247.8" cy="129.1" r="3.05" fill="#e4e044" fill-opacity="0.92" stroke="#2e2d08" stroke-width="0.75"/><circle cx="253.7" cy="113.5" r="3.05" fill="#e4e044" fill-opacity="0.92" stroke="#2e2d08" stroke-width="0.75"/><circle cx="254.1" cy="115.0" r="3.05" fill="#e4e044" fill-opacity="0.92" stroke="#2e2d08" stroke-width="0.75"/><circle cx="262.2" cy="127.3" r="3.05" fill="#e4e044" fill-opacity="0.92" stroke="#2e2d08" stroke-width="0.75"/><circle cx="233.5" cy="126.9" r="3.05" fill="#e4e044" fill-opacity="0.92" stroke="#2e2d08" stroke-width="0.75"/><circle cx="255.2" cy="108.1" r="3.05" fill="#e4e044" fill-opacity="0.92" stroke="#2e2d08" stroke-width="0.75"/><circle cx="274.4" cy="122.5" r="3.05" fill="#e4e044" fill-opacity="0.92" stroke="#2e2d08" stroke-width="0.75"/><circle cx="242.1" cy="117.2" r="3.05" fill="#e4e044" fill-opacity="0.92" stroke="#2e2d08" stroke-width="0.75"/><circle cx="263.1" cy="110.3" r="3.05" fill="#e4e044" fill-opacity="0.92" stroke="#2e2d08" stroke-width="0.75"/><circle cx="254.7" cy="99.3" r="3.05" fill="#e4e044" fill-opacity="0.92" stroke="#2e2d08" stroke-width="0.75"/><circle cx="275.5" cy="109.0" r="3.05" fill="#e4e044" fill-opacity="0.92" stroke="#2e2d08" stroke-width="0.75"/><circle cx="250.8" cy="108.3" r="3.05" fill="#e4e044" fill-opacity="0.92" stroke="#2e2d08" stroke-width="0.75"/><circle cx="247.4" cy="103.0" r="3.05" fill="#e4e044" fill-opacity="0.92" stroke="#2e2d08" stroke-width="0.75"/><circle cx="255.0" cy="115.2" r="3.05" fill="#e4e044" fill-opacity="0.92" stroke="#2e2d08" stroke-width="0.75"/><circle cx="249.1" cy="110.7" r="3.05" fill="#e4e044" fill-opacity="0.92" stroke="#2e2d08" stroke-width="0.75"/><circle cx="238.0" cy="117.5" r="3.05" fill="#e4e044" fill-opacity="0.92" stroke="#2e2d08" stroke-width="0.75"/><circle cx="245.8" cy="114.1" r="3.05" fill="#e4e044" fill-opacity="0.92" stroke="#2e2d08" stroke-width="0.75"/><circle cx="245.5" cy="105.9" r="3.05" fill="#e4e044" fill-opacity="0.92" stroke="#2e2d08" stroke-width="0.75"/><circle cx="259.4" cy="98.1" r="3.05" fill="#e4e044" fill-opacity="0.92" stroke="#2e2d08" stroke-width="0.75"/><circle cx="255.3" cy="103.5" r="3.05" fill="#e4e044" fill-opacity="0.92" stroke="#2e2d08" stroke-width="0.75"/><circle cx="269.7" cy="127.2" r="3.05" fill="#e4e044" fill-opacity="0.92" stroke="#2e2d08" stroke-width="0.75"/><circle cx="260.7" cy="96.4" r="3.05" fill="#e4e044" fill-opacity="0.92" stroke="#2e2d08" stroke-width="0.75"/><circle cx="247.7" cy="118.6" r="3.05" fill="#e4e044" fill-opacity="0.92" stroke="#2e2d08" stroke-width="0.75"/><circle cx="251.2" cy="98.4" r="3.05" fill="#e4e044" fill-opacity="0.92" stroke="#2e2d08" stroke-width="0.75"/><circle cx="242.8" cy="103.1" r="3.05" fill="#e4e044" fill-opacity="0.92" stroke="#2e2d08" stroke-width="0.75"/><circle cx="256.1" cy="104.4" r="3.05" fill="#e4e044" fill-opacity="0.92" stroke="#2e2d08" stroke-width="0.75"/><circle cx="276.5" cy="100.1" r="3.05" fill="#e4e044" fill-opacity="0.92" stroke="#2e2d08" stroke-width="0.75"/><circle cx="258.3" cy="112.7" r="3.05" fill="#e4e044" fill-opacity="0.92" stroke="#2e2d08" stroke-width="0.75"/><circle cx="251.0" cy="123.4" r="3.05" fill="#e4e044" fill-opacity="0.92" stroke="#2e2d08" stroke-width="0.75"/><circle cx="251.5" cy="108.1" r="3.05" fill="#e4e044" fill-opacity="0.92" stroke="#2e2d08" stroke-width="0.75"/><circle cx="250.6" cy="110.6" r="3.05" fill="#e4e044" fill-opacity="0.92" stroke="#2e2d08" stroke-width="0.75"/><circle cx="267.4" cy="120.4" r="3.05" fill="#e4e044" fill-opacity="0.92" stroke="#2e2d08" stroke-width="0.75"/><circle cx="240.5" cy="106.8" r="3.05" fill="#e4e044" fill-opacity="0.92" stroke="#2e2d08" stroke-width="0.75"/><circle cx="244.0" cy="120.8" r="3.05" fill="#e4e044" fill-opacity="0.92" stroke="#2e2d08" stroke-width="0.75"/><circle cx="255.3" cy="121.7" r="3.05" fill="#e4e044" fill-opacity="0.92" stroke="#2e2d08" stroke-width="0.75"/><circle cx="257.7" cy="90.3" r="3.05" fill="#e4e044" fill-opacity="0.92" stroke="#2e2d08" stroke-width="0.75"/><circle cx="259.2" cy="114.2" r="3.05" fill="#e4e044" fill-opacity="0.92" stroke="#2e2d08" stroke-width="0.75"/><circle cx="262.9" cy="97.1" r="3.05" fill="#e4e044" fill-opacity="0.92" stroke="#2e2d08" stroke-width="0.75"/><circle cx="256.9" cy="104.0" r="3.05" fill="#e4e044" fill-opacity="0.92" stroke="#2e2d08" stroke-width="0.75"/><circle cx="246.2" cy="115.7" r="3.05" fill="#e4e044" fill-opacity="0.92" stroke="#2e2d08" stroke-width="0.75"/><circle cx="260.3" cy="101.7" r="3.05" fill="#e4e044" fill-opacity="0.92" stroke="#2e2d08" stroke-width="0.75"/><circle cx="245.9" cy="124.3" r="3.05" fill="#e4e044" fill-opacity="0.92" stroke="#2e2d08" stroke-width="0.75"/><circle cx="258.5" cy="86.5" r="3.05" fill="#e4e044" fill-opacity="0.92" stroke="#2e2d08" stroke-width="0.75"/><circle cx="244.1" cy="116.4" r="3.05" fill="#e4e044" fill-opacity="0.92" stroke="#2e2d08" stroke-width="0.75"/><circle cx="271.0" cy="124.8" r="3.05" fill="#e4e044" fill-opacity="0.92" stroke="#2e2d08" stroke-width="0.75"/><circle cx="258.3" cy="113.9" r="3.05" fill="#e4e044" fill-opacity="0.92" stroke="#2e2d08" stroke-width="0.75"/><circle cx="243.6" cy="106.6" r="3.05" fill="#e4e044" fill-opacity="0.92" stroke="#2e2d08" stroke-width="0.75"/><circle cx="252.4" cy="103.0" r="3.05" fill="#e4e044" fill-opacity="0.92" stroke="#2e2d08" stroke-width="0.75"/><circle cx="256.1" cy="107.3" r="3.05" fill="#e4e044" fill-opacity="0.92" stroke="#2e2d08" stroke-width="0.75"/><circle cx="255.5" cy="127.8" r="3.05" fill="#e4e044" fill-opacity="0.92" stroke="#2e2d08" stroke-width="0.75"/><circle cx="262.1" cy="116.4" r="3.05" fill="#e4e044" fill-opacity="0.92" stroke="#2e2d08" stroke-width="0.75"/><circle cx="254.9" cy="94.7" r="3.05" fill="#e4e044" fill-opacity="0.92" stroke="#2e2d08" stroke-width="0.75"/><circle cx="252.2" cy="117.8" r="3.05" fill="#e4e044" fill-opacity="0.92" stroke="#2e2d08" stroke-width="0.75"/><circle cx="240.8" cy="125.7" r="3.05" fill="#e4e044" fill-opacity="0.92" stroke="#2e2d08" stroke-width="0.75"/><circle cx="250.1" cy="115.9" r="3.05" fill="#e4e044" fill-opacity="0.92" stroke="#2e2d08" stroke-width="0.75"/><circle cx="253.4" cy="97.6" r="3.05" fill="#e4e044" fill-opacity="0.92" stroke="#2e2d08" stroke-width="0.75"/><circle cx="266.0" cy="105.5" r="3.05" fill="#e4e044" fill-opacity="0.92" stroke="#2e2d08" stroke-width="0.75"/><circle cx="259.3" cy="102.7" r="3.05" fill="#e4e044" fill-opacity="0.92" stroke="#2e2d08" stroke-width="0.75"/><circle cx="248.1" cy="122.0" r="3.05" fill="#e4e044" fill-opacity="0.92" stroke="#2e2d08" stroke-width="0.75"/><circle cx="278.1" cy="102.2" r="3.05" fill="#e4e044" fill-opacity="0.92" stroke="#2e2d08" stroke-width="0.75"/><circle cx="252.8" cy="122.3" r="3.05" fill="#e4e044" fill-opacity="0.92" stroke="#2e2d08" stroke-width="0.75"/><circle cx="246.1" cy="119.7" r="3.05" fill="#e4e044" fill-opacity="0.92" stroke="#2e2d08" stroke-width="0.75"/><circle cx="244.6" cy="118.5" r="3.05" fill="#e4e044" fill-opacity="0.92" stroke="#2e2d08" stroke-width="0.75"/><circle cx="257.1" cy="125.3" r="3.05" fill="#e4e044" fill-opacity="0.92" stroke="#2e2d08" stroke-width="0.75"/><circle cx="261.1" cy="98.3" r="3.05" fill="#e4e044" fill-opacity="0.92" stroke="#2e2d08" stroke-width="0.75"/><circle cx="264.2" cy="99.4" r="3.05" fill="#e4e044" fill-opacity="0.92" stroke="#2e2d08" stroke-width="0.75"/><circle cx="260.0" cy="128.6" r="3.05" fill="#e4e044" fill-opacity="0.92" stroke="#2e2d08" stroke-width="0.75"/><circle cx="262.4" cy="105.5" r="3.05" fill="#e4e044" fill-opacity="0.92" stroke="#2e2d08" stroke-width="0.75"/><circle cx="267.6" cy="113.6" r="3.05" fill="#e4e044" fill-opacity="0.92" stroke="#2e2d08" stroke-width="0.75"/><circle cx="241.4" cy="107.7" r="3.05" fill="#e4e044" fill-opacity="0.92" stroke="#2e2d08" stroke-width="0.75"/><circle cx="271.1" cy="108.3" r="3.05" fill="#e4e044" fill-opacity="0.92" stroke="#2e2d08" stroke-width="0.75"/><circle cx="256.6" cy="107.9" r="3.05" fill="#e4e044" fill-opacity="0.92" stroke="#2e2d08" stroke-width="0.75"/><circle cx="236.7" cy="106.0" r="3.05" fill="#e4e044" fill-opacity="0.92" stroke="#2e2d08" stroke-width="0.75"/><circle cx="258.2" cy="114.0" r="3.05" fill="#e4e044" fill-opacity="0.92" stroke="#2e2d08" stroke-width="0.75"/><circle cx="256.9" cy="87.8" r="3.05" fill="#e4e044" fill-opacity="0.92" stroke="#2e2d08" stroke-width="0.75"/><circle cx="266.8" cy="119.8" r="3.05" fill="#e4e044" fill-opacity="0.92" stroke="#2e2d08" stroke-width="0.75"/><circle cx="263.5" cy="126.3" r="3.05" fill="#e4e044" fill-opacity="0.92" stroke="#2e2d08" stroke-width="0.75"/><circle cx="250.8" cy="104.9" r="3.05" fill="#e4e044" fill-opacity="0.92" stroke="#2e2d08" stroke-width="0.75"/><circle cx="254.8" cy="130.4" r="3.05" fill="#e4e044" fill-opacity="0.92" stroke="#2e2d08" stroke-width="0.75"/><circle cx="236.2" cy="109.1" r="3.05" fill="#e4e044" fill-opacity="0.92" stroke="#2e2d08" stroke-width="0.75"/><circle cx="245.5" cy="118.0" r="3.05" fill="#e4e044" fill-opacity="0.92" stroke="#2e2d08" stroke-width="0.75"/><circle cx="271.6" cy="108.4" r="3.05" fill="#e4e044" fill-opacity="0.92" stroke="#2e2d08" stroke-width="0.75"/><circle cx="240.6" cy="112.3" r="3.05" fill="#e4e044" fill-opacity="0.92" stroke="#2e2d08" stroke-width="0.75"/><circle cx="254.5" cy="94.4" r="3.05" fill="#e4e044" fill-opacity="0.92" stroke="#2e2d08" stroke-width="0.75"/><circle cx="265.6" cy="105.8" r="3.05" fill="#e4e044" fill-opacity="0.92" stroke="#2e2d08" stroke-width="0.75"/><circle cx="264.9" cy="97.0" r="3.05" fill="#e4e044" fill-opacity="0.92" stroke="#2e2d08" stroke-width="0.75"/><circle cx="269.8" cy="95.6" r="3.05" fill="#e4e044" fill-opacity="0.92" stroke="#2e2d08" stroke-width="0.75"/><circle cx="270.0" cy="91.4" r="3.05" fill="#e4e044" fill-opacity="0.92" stroke="#2e2d08" stroke-width="0.75"/><circle cx="270.8" cy="107.5" r="3.05" fill="#e4e044" fill-opacity="0.92" stroke="#2e2d08" stroke-width="0.75"/><circle cx="237.6" cy="109.1" r="3.05" fill="#e4e044" fill-opacity="0.92" stroke="#2e2d08" stroke-width="0.75"/><circle cx="260.4" cy="100.6" r="3.05" fill="#e4e044" fill-opacity="0.92" stroke="#2e2d08" stroke-width="0.75"/><circle cx="248.5" cy="114.7" r="3.05" fill="#e4e044" fill-opacity="0.92" stroke="#2e2d08" stroke-width="0.75"/><circle cx="248.9" cy="116.5" r="3.05" fill="#e4e044" fill-opacity="0.92" stroke="#2e2d08" stroke-width="0.75"/><circle cx="255.9" cy="123.0" r="3.05" fill="#e4e044" fill-opacity="0.92" stroke="#2e2d08" stroke-width="0.75"/><circle cx="262.9" cy="115.2" r="3.05" fill="#e4e044" fill-opacity="0.92" stroke="#2e2d08" stroke-width="0.75"/><circle cx="264.8" cy="122.4" r="3.05" fill="#e4e044" fill-opacity="0.92" stroke="#2e2d08" stroke-width="0.75"/><circle cx="257.0" cy="104.7" r="3.05" fill="#e4e044" fill-opacity="0.92" stroke="#2e2d08" stroke-width="0.75"/><circle cx="265.2" cy="116.4" r="3.05" fill="#e4e044" fill-opacity="0.92" stroke="#2e2d08" stroke-width="0.75"/><circle cx="235.6" cy="99.3" r="3.05" fill="#e4e044" fill-opacity="0.92" stroke="#2e2d08" stroke-width="0.75"/><circle cx="259.6" cy="112.9" r="3.05" fill="#e4e044" fill-opacity="0.92" stroke="#2e2d08" stroke-width="0.75"/><circle cx="256.5" cy="118.9" r="3.05" fill="#e4e044" fill-opacity="0.92" stroke="#2e2d08" stroke-width="0.75"/><circle cx="253.1" cy="129.4" r="3.05" fill="#e4e044" fill-opacity="0.92" stroke="#2e2d08" stroke-width="0.75"/><circle cx="248.8" cy="107.2" r="3.05" fill="#e4e044" fill-opacity="0.92" stroke="#2e2d08" stroke-width="0.75"/><circle cx="256.7" cy="120.1" r="3.05" fill="#e4e044" fill-opacity="0.92" stroke="#2e2d08" stroke-width="0.75"/><circle cx="260.4" cy="128.4" r="3.05" fill="#e4e044" fill-opacity="0.92" stroke="#2e2d08" stroke-width="0.75"/><circle cx="246.9" cy="124.8" r="3.05" fill="#e4e044" fill-opacity="0.92" stroke="#2e2d08" stroke-width="0.75"/><circle cx="261.9" cy="100.0" r="3.05" fill="#e4e044" fill-opacity="0.92" stroke="#2e2d08" stroke-width="0.75"/><circle cx="248.9" cy="135.1" r="3.05" fill="#e4e044" fill-opacity="0.92" stroke="#2e2d08" stroke-width="0.75"/><circle cx="264.3" cy="106.4" r="3.05" fill="#e4e044" fill-opacity="0.92" stroke="#2e2d08" stroke-width="0.75"/><circle cx="246.6" cy="112.6" r="3.05" fill="#e4e044" fill-opacity="0.92" stroke="#2e2d08" stroke-width="0.75"/><circle cx="260.0" cy="101.2" r="3.05" fill="#e4e044" fill-opacity="0.92" stroke="#2e2d08" stroke-width="0.75"/><circle cx="241.7" cy="109.4" r="3.05" fill="#e4e044" fill-opacity="0.92" stroke="#2e2d08" stroke-width="0.75"/><circle cx="251.3" cy="104.8" r="3.05" fill="#e4e044" fill-opacity="0.92" stroke="#2e2d08" stroke-width="0.75"/><circle cx="267.1" cy="112.6" r="3.05" fill="#e4e044" fill-opacity="0.92" stroke="#2e2d08" stroke-width="0.75"/><circle cx="238.2" cy="126.1" r="3.05" fill="#e4e044" fill-opacity="0.92" stroke="#2e2d08" stroke-width="0.75"/><circle cx="253.8" cy="96.8" r="3.05" fill="#e4e044" fill-opacity="0.92" stroke="#2e2d08" stroke-width="0.75"/><circle cx="257.2" cy="117.2" r="3.05" fill="#e4e044" fill-opacity="0.92" stroke="#2e2d08" stroke-width="0.75"/><circle cx="249.4" cy="119.5" r="3.05" fill="#e4e044" fill-opacity="0.92" stroke="#2e2d08" stroke-width="0.75"/><circle cx="265.6" cy="101.8" r="3.05" fill="#e4e044" fill-opacity="0.92" stroke="#2e2d08" stroke-width="0.75"/><circle cx="250.7" cy="125.5" r="3.05" fill="#e4e044" fill-opacity="0.92" stroke="#2e2d08" stroke-width="0.75"/><circle cx="263.0" cy="127.3" r="3.05" fill="#e4e044" fill-opacity="0.92" stroke="#2e2d08" stroke-width="0.75"/><circle cx="275.4" cy="111.9" r="3.05" fill="#e4e044" fill-opacity="0.92" stroke="#2e2d08" stroke-width="0.75"/><circle cx="269.5" cy="94.6" r="3.05" fill="#e4e044" fill-opacity="0.92" stroke="#2e2d08" stroke-width="0.75"/><circle cx="261.5" cy="116.1" r="3.05" fill="#e4e044" fill-opacity="0.92" stroke="#2e2d08" stroke-width="0.75"/><circle cx="254.4" cy="106.7" r="3.05" fill="#e4e044" fill-opacity="0.92" stroke="#2e2d08" stroke-width="0.75"/><circle cx="241.8" cy="113.3" r="3.05" fill="#e4e044" fill-opacity="0.92" stroke="#2e2d08" stroke-width="0.75"/><circle cx="269.6" cy="107.6" r="3.05" fill="#e4e044" fill-opacity="0.92" stroke="#2e2d08" stroke-width="0.75"/><circle cx="261.9" cy="104.3" r="3.05" fill="#e4e044" fill-opacity="0.92" stroke="#2e2d08" stroke-width="0.75"/><circle cx="259.5" cy="100.4" r="3.05" fill="#e4e044" fill-opacity="0.92" stroke="#2e2d08" stroke-width="0.75"/><circle cx="259.3" cy="109.3" r="3.05" fill="#e4e044" fill-opacity="0.92" stroke="#2e2d08" stroke-width="0.75"/><circle cx="259.3" cy="104.9" r="3.05" fill="#e4e044" fill-opacity="0.92" stroke="#2e2d08" stroke-width="0.75"/><circle cx="242.1" cy="108.0" r="3.05" fill="#e4e044" fill-opacity="0.92" stroke="#2e2d08" stroke-width="0.75"/><circle cx="263.1" cy="129.4" r="3.05" fill="#e4e044" fill-opacity="0.92" stroke="#2e2d08" stroke-width="0.75"/><circle cx="249.4" cy="120.7" r="3.05" fill="#e4e044" fill-opacity="0.92" stroke="#2e2d08" stroke-width="0.75"/><circle cx="262.3" cy="116.1" r="3.05" fill="#e4e044" fill-opacity="0.92" stroke="#2e2d08" stroke-width="0.75"/><circle cx="236.6" cy="115.3" r="3.05" fill="#e4e044" fill-opacity="0.92" stroke="#2e2d08" stroke-width="0.75"/><circle cx="241.4" cy="124.9" r="3.05" fill="#e4e044" fill-opacity="0.92" stroke="#2e2d08" stroke-width="0.75"/><circle cx="262.2" cy="118.6" r="3.05" fill="#e4e044" fill-opacity="0.92" stroke="#2e2d08" stroke-width="0.75"/><circle cx="265.0" cy="97.4" r="3.05" fill="#e4e044" fill-opacity="0.92" stroke="#2e2d08" stroke-width="0.75"/><circle cx="265.3" cy="112.5" r="3.05" fill="#e4e044" fill-opacity="0.92" stroke="#2e2d08" stroke-width="0.75"/><circle cx="254.0" cy="103.7" r="3.05" fill="#e4e044" fill-opacity="0.92" stroke="#2e2d08" stroke-width="0.75"/><circle cx="244.1" cy="106.8" r="3.05" fill="#e4e044" fill-opacity="0.92" stroke="#2e2d08" stroke-width="0.75"/><circle cx="258.2" cy="104.4" r="3.05" fill="#e4e044" fill-opacity="0.92" stroke="#2e2d08" stroke-width="0.75"/><circle cx="248.8" cy="105.5" r="3.05" fill="#e4e044" fill-opacity="0.92" stroke="#2e2d08" stroke-width="0.75"/><circle cx="242.9" cy="121.5" r="3.05" fill="#e4e044" fill-opacity="0.92" stroke="#2e2d08" stroke-width="0.75"/><circle cx="249.8" cy="121.4" r="3.05" fill="#e4e044" fill-opacity="0.92" stroke="#2e2d08" stroke-width="0.75"/><circle cx="239.8" cy="122.1" r="3.05" fill="#e4e044" fill-opacity="0.92" stroke="#2e2d08" stroke-width="0.75"/><circle cx="253.0" cy="119.2" r="3.05" fill="#e4e044" fill-opacity="0.92" stroke="#2e2d08" stroke-width="0.75"/><circle cx="255.2" cy="101.8" r="3.05" fill="#e4e044" fill-opacity="0.92" stroke="#2e2d08" stroke-width="0.75"/><circle cx="269.0" cy="106.8" r="3.05" fill="#e4e044" fill-opacity="0.92" stroke="#2e2d08" stroke-width="0.75"/><circle cx="254.7" cy="101.8" r="3.05" fill="#e4e044" fill-opacity="0.92" stroke="#2e2d08" stroke-width="0.75"/><circle cx="257.7" cy="107.3" r="3.05" fill="#e4e044" fill-opacity="0.92" stroke="#2e2d08" stroke-width="0.75"/><circle cx="257.1" cy="115.6" r="3.05" fill="#e4e044" fill-opacity="0.92" stroke="#2e2d08" stroke-width="0.75"/><circle cx="249.7" cy="95.9" r="3.05" fill="#e4e044" fill-opacity="0.92" stroke="#2e2d08" stroke-width="0.75"/><circle cx="257.6" cy="122.0" r="3.05" fill="#e4e044" fill-opacity="0.92" stroke="#2e2d08" stroke-width="0.75"/><circle cx="264.7" cy="98.9" r="3.05" fill="#e4e044" fill-opacity="0.92" stroke="#2e2d08" stroke-width="0.75"/><circle cx="260.6" cy="116.0" r="3.05" fill="#e4e044" fill-opacity="0.92" stroke="#2e2d08" stroke-width="0.75"/><circle cx="256.9" cy="116.5" r="3.05" fill="#e4e044" fill-opacity="0.92" stroke="#2e2d08" stroke-width="0.75"/><circle cx="250.5" cy="114.1" r="3.05" fill="#e4e044" fill-opacity="0.92" stroke="#2e2d08" stroke-width="0.75"/><circle cx="266.0" cy="106.0" r="3.05" fill="#e4e044" fill-opacity="0.92" stroke="#2e2d08" stroke-width="0.75"/><circle cx="269.1" cy="76.7" r="3.05" fill="#e4e044" fill-opacity="0.92" stroke="#2e2d08" stroke-width="0.75"/><circle cx="267.1" cy="82.7" r="3.05" fill="#e4e044" fill-opacity="0.92" stroke="#2e2d08" stroke-width="0.75"/><circle cx="273.1" cy="88.7" r="3.05" fill="#e4e044" fill-opacity="0.92" stroke="#2e2d08" stroke-width="0.75"/><circle cx="289.1" cy="100.7" r="3.05" fill="#e4e044" fill-opacity="0.92" stroke="#2e2d08" stroke-width="0.75"/><circle cx="285.1" cy="101.7" r="3.05" fill="#e4e044" fill-opacity="0.92" stroke="#2e2d08" stroke-width="0.75"/><circle cx="286.1" cy="126.7" r="3.05" fill="#e4e044" fill-opacity="0.92" stroke="#2e2d08" stroke-width="0.75"/><circle cx="250.1" cy="140.7" r="3.05" fill="#e4e044" fill-opacity="0.92" stroke="#2e2d08" stroke-width="0.75"/><circle cx="270.1" cy="139.7" r="3.05" fill="#e4e044" fill-opacity="0.92" stroke="#2e2d08" stroke-width="0.75"/><circle cx="229.1" cy="111.7" r="3.05" fill="#e4e044" fill-opacity="0.92" stroke="#2e2d08" stroke-width="0.75"/></svg>
<span class="t" style="left:2049.24px;top:1531.84px;font-size:10px;line-height:10px;color:#1c1c1c;transform:scaleX(0.9192);-webkit-text-stroke-width:0.2px;">-25</span>
<span class="t" style="left:2049.24px;top:1255.54px;font-size:10px;line-height:10px;color:#1c1c1c;transform:scaleX(0.9192);-webkit-text-stroke-width:0.2px;">-25</span>
<span class="t" style="left:2118.93px;top:1531.84px;font-size:10px;line-height:10px;color:#1c1c1c;transform:scaleX(0.9429);-webkit-text-stroke-width:0.2px;">-12.5</span>
<span class="t" style="left:2118.93px;top:1255.54px;font-size:10px;line-height:10px;color:#1c1c1c;transform:scaleX(0.9429);-webkit-text-stroke-width:0.2px;">-12.5</span>
<span class="t" style="left:2200.70px;top:1531.84px;font-size:10px;line-height:10px;color:#1c1c1c;-webkit-text-stroke-width:0.2px;">0</span>
<span class="t" style="left:2200.70px;top:1255.54px;font-size:10px;line-height:10px;color:#1c1c1c;-webkit-text-stroke-width:0.2px;">0</span>
<span class="t" style="left:2268.37px;top:1531.84px;font-size:10px;line-height:10px;color:#1c1c1c;transform:scaleX(0.9014);-webkit-text-stroke-width:0.2px;">12.5</span>
<span class="t" style="left:2268.37px;top:1255.54px;font-size:10px;line-height:10px;color:#1c1c1c;transform:scaleX(0.9014);-webkit-text-stroke-width:0.2px;">12.5</span>
<span class="t" style="left:2345.40px;top:1531.84px;font-size:10px;line-height:10px;color:#1c1c1c;letter-spacing:0.199px;-webkit-text-stroke-width:0.2px;">25</span>
<span class="t" style="left:2345.40px;top:1255.54px;font-size:10px;line-height:10px;color:#1c1c1c;letter-spacing:0.199px;-webkit-text-stroke-width:0.2px;">25</span>
<span class="t" style="left:2038.70px;top:1263.74px;font-size:10px;line-height:10px;color:#1c1c1c;letter-spacing:0.199px;-webkit-text-stroke-width:0.2px;">25</span>
<span class="t" style="left:2356.70px;top:1263.74px;font-size:10px;line-height:10px;color:#1c1c1c;letter-spacing:0.199px;-webkit-text-stroke-width:0.2px;">25</span>
<span class="t" style="left:2035.47px;top:1328.06px;font-size:10px;line-height:10px;color:#1c1c1c;transform:scaleX(0.9014);-webkit-text-stroke-width:0.2px;">12.5</span>
<span class="t" style="left:2353.47px;top:1328.06px;font-size:10px;line-height:10px;color:#1c1c1c;transform:scaleX(0.9014);-webkit-text-stroke-width:0.2px;">12.5</span>
<span class="t" style="left:2041.60px;top:1392.39px;font-size:10px;line-height:10px;color:#1c1c1c;-webkit-text-stroke-width:0.2px;">0</span>
<span class="t" style="left:2359.60px;top:1392.39px;font-size:10px;line-height:10px;color:#1c1c1c;-webkit-text-stroke-width:0.2px;">0</span>
<span class="t" style="left:2033.63px;top:1456.71px;font-size:10px;line-height:10px;color:#1c1c1c;transform:scaleX(0.9429);-webkit-text-stroke-width:0.2px;">-12.5</span>
<span class="t" style="left:2351.63px;top:1456.71px;font-size:10px;line-height:10px;color:#1c1c1c;transform:scaleX(0.9429);-webkit-text-stroke-width:0.2px;">-12.5</span>
<span class="t" style="left:2037.74px;top:1521.04px;font-size:10px;line-height:10px;color:#1c1c1c;transform:scaleX(0.9192);-webkit-text-stroke-width:0.2px;">-25</span>
<span class="t" style="left:2355.74px;top:1521.04px;font-size:10px;line-height:10px;color:#1c1c1c;transform:scaleX(0.9192);-webkit-text-stroke-width:0.2px;">-25</span>
<span class="t" style="left:2138.30px;top:1551.44px;font-size:12px;line-height:12px;color:#111;font-weight:bold;transform:scaleX(0.8999);-webkit-text-stroke-width:0.15px;">Horizontal Break (inches)</span>
<span class="t" style="left:2126.07px;top:1569.77px;font-size:10.2px;line-height:10.2px;color:#1c1c1c;transform:scaleX(0.9572);-webkit-text-stroke-width:0.2px;">Pitch movement from pitcher&#x27;s POV</span>
<span class="t" style="left:2380.6px;top:1397.9px;font-size:12px;line-height:12px;font-weight:bold;color:#111;-webkit-text-stroke-width:0.15px;transform-origin:0 0;transform:rotate(90deg) translate(-57.5px,-10.2px) scaleX(0.8977);">Vertical Break (inches)</span>
<span class="t" style="left:2175.23px;top:1197.20px;font-size:13px;line-height:13px;color:#222;transform:scaleX(0.9828);-webkit-text-stroke-width:0.2px;">PitchType</span>
<svg class="a" style="left:2018.6px;top:1211.2px" width="10" height="10" viewBox="0 0 10 10"><circle cx="5" cy="5" r="3.800" fill="#e4e044" stroke="#8a8a3a" stroke-width="0.600"/></svg>
<span class="t" style="left:2035.84px;top:1212.11px;font-size:10.5px;line-height:10.5px;color:#222;transform:scaleX(0.9729);-webkit-text-stroke-width:0.2px;">Sinker</span>
<svg class="a" style="left:0;top:0" width="0" height="0"><defs><filter id="heat" x="0" y="0" width="100%" height="100%" filterUnits="objectBoundingBox" color-interpolation-filters="sRGB"><feGaussianBlur stdDeviation="3.8"/><feColorMatrix type="matrix" values="0.3 0.7 0 0 0  0.3 0.7 0 0 0  0.3 0.7 0 0 0  0.3 0.7 0 0 0"/><feComponentTransfer><feFuncR type="table" tableValues="0.435 0.435 0.431 0.424 0.412 0.400 0.400 0.486 0.639 0.839 0.988 0.984 0.969 0.945 0.918 0.886 0.851 0.816 0.788 0.776 0.765"/><feFuncG type="table" tableValues="0.639 0.639 0.635 0.627 0.620 0.612 0.612 0.682 0.800 0.918 0.988 0.886 0.761 0.635 0.533 0.443 0.353 0.271 0.216 0.188 0.173"/><feFuncB type="table" tableValues="0.827 0.827 0.824 0.820 0.816 0.812 0.808 0.843 0.894 0.918 0.878 0.659 0.522 0.404 0.329 0.278 0.239 0.204 0.180 0.169 0.161"/><feFuncA type="table" tableValues="0.00 0.22 0.50 0.78 0.95 1.00 1.00 1.00 1.00 1.00 1.00 1.00 1.00 1.00 1.00 1.00 1.00 1.00 1.00 1.00 1.00"/></feComponentTransfer></filter><filter id="preblur" x="-20%" y="-20%" width="140%" height="140%" color-interpolation-filters="sRGB"><feGaussianBlur stdDeviation="5"/></filter><linearGradient id="lg" x1="0" x2="1" y1="0" y2="0"><stop offset="0" stop-color="#4277b5"/><stop offset="0.12" stop-color="#5c8fc4"/><stop offset="0.25" stop-color="#83b2d5"/><stop offset="0.37" stop-color="#b4d7e7"/><stop offset="0.47" stop-color="#f1f8e6"/><stop offset="0.5" stop-color="#fdfce0"/><stop offset="0.57" stop-color="#f9d797"/><stop offset="0.66" stop-color="#f1a465"/><stop offset="0.8" stop-color="#de6a45"/><stop offset="0.92" stop-color="#cd3e31"/><stop offset="1" stop-color="#c7302c"/></linearGradient><linearGradient id="pg" x1="0" x2="0" y1="0" y2="1"><stop offset="0" stop-color="#080808"/><stop offset="0.58" stop-color="#0a0a0a"/><stop offset="0.8" stop-color="#4a4a4a"/><stop offset="1" stop-color="#8a8a8a"/></linearGradient><clipPath id="hclip"><rect x="82" y="70" width="256" height="290"/></clipPath></defs></svg>
<svg class="a" style="left:2466px;top:766px" width="412" height="360" viewBox="0 0 412 360"><line x1="0" y1="335.9" x2="412" y2="335.9" stroke="#d2d2d2" stroke-width="1.2"/><polygon points="116.75,335.7 126.75,335.7 115.5,356.5 103,356.5" fill="#000"/><polygon points="292.5,335.7 301.75,335.7 315.5,356.5 304.25,356.5" fill="#000"/><path d="M156.75 345.6 L261.75 345.6 L261.75 348 Q209 356 156.75 348 Z" fill="#000"/><g><polygon points="0.1,60.1 0.1,71.5 29.3,80.4 62.7,91.1 67.5,86.4 37.7,75.6" fill="#c6c6c6" /><polygon points="31.7,75.3 66.3,88.7 62.7,91.1 35.3,79.2" fill="#efefef" /><ellipse cx="55.0" cy="84.0" rx="14.1" ry="17.9" fill="#b2b2b2"/><polygon points="42.4,75.6 46.0,67.9 55.0,65.3 63.9,67.9 68.7,75.6 69.3,82.2 66.3,85.8 63.3,84.0 61.5,76.8 54.4,72.1 47.2,72.6" fill="#3e3e3e" /><polygon points="31.7,75.3 66.3,88.7 62.7,91.1 35.3,79.2" fill="#efefef" /><polygon points="19.8,103.0 29.3,101.3 40.1,126.3 56.7,117.9 62.7,145.4 54.4,169.2 44.2,200.8 22.2,194.2 1.9,193.0 2.9,171.6 10.9,145.4 14.4,121.5" fill="#262626" stroke="#a0a0a0" stroke-width="1.6" stroke-linejoin="round"/><polygon points="40.1,126.3 56.7,117.9 59.7,151.3 52.0,169.2 37.7,157.3" fill="#101010" /><polygon points="17.4,123.9 40.1,132.2 38.9,140.6 19.8,142.4" fill="#3c3c3c" /><polygon points="37.7,157.3 46.0,160.8 43.6,193.0 40.1,181.1" fill="#3a3a3a" /><polygon points="21.0,103.6 31.7,101.8 61.5,94.7 70.5,95.3 69.3,101.8 56.7,109.6 25.8,121.5 16.2,119.7" fill="#1a1a1a" /><polygon points="25.8,121.5 56.7,109.6 62.7,112.6 31.1,130.1" fill="#b9b9b9" /><polygon points="29.3,112.6 56.7,103.0 61.5,107.8 31.7,118.5" fill="#575757" /><polygon points="16.8,119.7 19.8,103.6 30.5,102.4 24.6,116.7" fill="#050505" /><polygon points="56.2,117.7 77.6,132.2 76.4,137.6 67.5,133.4 62.1,148.9 59.1,151.3 49.6,133.4" fill="#0e0e0e" /><polygon points="59.7,135.8 68.7,133.4 68.9,148.0 62.1,145.4" fill="#6a6a6a" /><polygon points="75.2,91.7 85.9,91.5 89.2,121.5 91.9,145.4 87.7,151.5 71.0,148.0 69.6,135.8 78.4,123.9 76.8,114.4" fill="#8d8d8d" stroke="#b5b5b5" stroke-width="1.2" stroke-linejoin="round"/><polygon points="75.2,91.7 85.9,91.5 87.1,113.2 77.6,115.0" fill="#6d6d6d" /><polygon points="77.0,115.0 88.9,112.0 89.9,121.5 78.8,124.1" fill="#ebebeb" /><circle cx="68.4" cy="89.6" r="6.2" fill="#5c5c5c"/><polygon points="1.9,190.0 22.2,193.0 43.6,201.1 42.4,205.2 21.6,197.3 1.3,194.5" fill="#dcdcdc" /><polygon points="0.1,197.0 43.6,200.6 46.0,211.9 57.0,257.2 55.8,271.5 52.2,324.0 49.6,325.4 37.7,329.0 25.8,331.3 5.5,352.8 4.1,354.9 11.7,316.8 24.8,276.3 19.8,253.6 0.1,223.8" fill="url(#pg)" stroke="#a0a0a0" stroke-width="1.6" stroke-linejoin="round"/><polygon points="0.1,202.4 31.7,209.5 21.2,221.7 0.1,220.3" fill="#2c2c2c" /><polygon points="17.4,235.8 28.1,247.7 36.5,271.5 24.6,272.7 22.2,253.6" fill="#2e2e2e" /><polygon points="7.9,337.1 25.8,331.1 32.0,329.0 35.5,343.0 54.4,355.2 4.1,355.2" fill="#858585" /><polygon points="19.8,353.2 37.7,346.4 54.4,355.2" fill="#c0c0c0" /><polygon points="32.9,331.1 49.6,326.3 71.3,334.7 67.7,339.5 56.7,340.9 32.9,339.5" fill="#b3b3b3" stroke="#dadada" stroke-width="1.2" stroke-linejoin="round"/></g><g clip-path="url(#hclip)"><g filter="url(#heat)"><rect x="40" y="30" width="340" height="360" fill="#000"/><g filter="url(#preblur)"><polygon points="87.0,78.9 148.5,77.0 222.9,76.1 288.1,78.9 308.6,93.8 316.0,119.9 321.6,147.8 334.7,175.7 338.4,198.1 338.4,250.2 330.9,250.2 321.6,231.6 306.7,237.2 288.1,246.5 269.5,259.5 250.9,274.4 241.6,293.0 222.9,296.7 211.8,278.1 193.2,265.1 178.3,253.9 170.8,227.8 161.5,211.1 152.2,205.5 135.4,211.1 116.8,205.5 111.2,186.9 116.8,168.3 120.5,147.8 105.7,142.2 94.5,127.3 87.0,101.2" fill="#f00" stroke="#f00" stroke-width="1.5" stroke-linejoin="round"/><circle cx="154.1" cy="268.8" r="10.8" fill="#f00"/><circle cx="230.4" cy="283.7" r="11.5" fill="#f00"/><circle cx="128.0" cy="192.5" r="16.8" fill="#f00"/><circle cx="109.4" cy="125.4" r="14.9" fill="#f00"/></g><circle cx="243.6" cy="239.8" r="10.0" fill="rgb(255,49,0)"/><circle cx="287.4" cy="106.7" r="8.9" fill="rgb(255,18,0)"/><circle cx="257.4" cy="121.3" r="10.8" fill="rgb(255,39,0)"/><circle cx="177.8" cy="112.7" r="6.1" fill="rgb(255,15,0)"/><circle cx="257.4" cy="150.7" r="7.1" fill="rgb(255,44,0)"/><circle cx="207.9" cy="145.8" r="8.1" fill="rgb(255,40,0)"/><circle cx="285.0" cy="156.9" r="8.7" fill="rgb(255,13,0)"/><circle cx="218.9" cy="247.2" r="5.9" fill="rgb(255,41,0)"/><circle cx="319.3" cy="196.4" r="7.1" fill="rgb(255,25,0)"/><circle cx="131.6" cy="93.4" r="6.1" fill="rgb(255,39,0)"/><circle cx="201.6" cy="169.2" r="5.5" fill="rgb(255,48,0)"/><circle cx="245.5" cy="250.0" r="5.8" fill="rgb(255,29,0)"/><circle cx="270.4" cy="181.8" r="6.9" fill="rgb(255,28,0)"/><circle cx="172.1" cy="95.8" r="6.8" fill="rgb(255,43,0)"/><circle cx="305.1" cy="155.8" r="9.9" fill="rgb(255,42,0)"/><circle cx="261.6" cy="222.6" r="9.7" fill="rgb(255,27,0)"/><circle cx="264.1" cy="138.1" r="8.1" fill="rgb(255,42,0)"/><circle cx="260.7" cy="140.9" r="10.8" fill="rgb(255,38,0)"/><circle cx="292.3" cy="218.9" r="10.0" fill="rgb(255,26,0)"/><circle cx="248.9" cy="238.9" r="10.1" fill="rgb(255,26,0)"/><circle cx="220.1" cy="112.8" r="10.2" fill="rgb(255,49,0)"/><circle cx="207.0" cy="228.7" r="9.5" fill="rgb(255,41,0)"/><circle cx="254.3" cy="168.9" r="8.9" fill="rgb(255,42,0)"/><circle cx="247.1" cy="235.0" r="5.4" fill="rgb(255,19,0)"/><circle cx="197.9" cy="219.5" r="6.5" fill="rgb(255,39,0)"/><circle cx="143.9" cy="88.0" r="6.0" fill="rgb(255,25,0)"/><circle cx="157.8" cy="91.9" r="9.3" fill="rgb(255,64,0)" stroke="rgb(255,64,0)" stroke-width="9.0"/><polygon points="146.6,101.2 161.5,104.0 178.3,110.5 195.0,106.8 204.3,125.4 185.7,128.2 163.4,125.4 150.3,118.0" fill="rgb(255,64,0)" stroke="rgb(255,64,0)" stroke-linejoin="round" stroke-width="9.0"/><polygon points="193.2,84.5 204.3,78.9 219.2,79.8 224.8,93.8 222.9,119.9 228.5,134.8 247.2,119.9 255.5,129.2 252.7,147.8 250.9,168.3 245.3,183.2 232.3,185.0 222.9,175.7 211.8,179.4 193.2,183.2 182.0,172.0 183.8,153.4 193.2,138.5 200.6,125.4 195.0,106.8" fill="rgb(255,64,0)" stroke="rgb(255,64,0)" stroke-linejoin="round" stroke-width="9.0"/><ellipse cx="226.7" cy="202.7" rx="11.5" ry="18.6" fill="rgb(255,64,0)" stroke="rgb(255,64,0)" transform="rotate(8 226.7 202.7)" stroke-width="9.0"/><circle cx="280.7" cy="160.8" r="10.8" fill="rgb(255,64,0)" stroke="rgb(255,64,0)" stroke-width="9.0"/><ellipse cx="269.5" cy="214.8" rx="11.5" ry="7.8" fill="rgb(255,64,0)" stroke="rgb(255,64,0)" transform="rotate(-35 269.5 214.8)" stroke-width="9.0"/><circle cx="280.7" cy="160.8" r="4.7" fill="rgb(255,64,0)" stroke="rgb(255,64,0)" stroke-width="9.0"/><circle cx="193.2" cy="231.6" r="10.2" fill="rgb(255,33,0)" stroke="rgb(255,33,0)" stroke-width="1.5"/><circle cx="297.4" cy="119.9" r="11.2" fill="rgb(255,31,0)" stroke="rgb(255,31,0)" stroke-width="1.5"/><circle cx="161.5" cy="175.7" r="7.4" fill="rgb(255,26,0)" stroke="rgb(255,26,0)" stroke-width="1.5"/><circle cx="260.2" cy="240.9" r="8.4" fill="rgb(255,26,0)" stroke="rgb(255,26,0)" stroke-width="1.5"/><circle cx="129.9" cy="110.5" r="9.3" fill="rgb(255,15,0)" stroke="rgb(255,15,0)" stroke-width="1.5"/><circle cx="250.9" cy="112.4" r="11.2" fill="rgb(255,31,0)" stroke="rgb(255,31,0)" stroke-width="1.5"/><circle cx="306.7" cy="179.4" r="9.3" fill="rgb(255,26,0)" stroke="rgb(255,26,0)" stroke-width="1.5"/><circle cx="245.3" cy="90.1" r="7.1" fill="rgb(255,76,0)" stroke="rgb(255,76,0)" stroke-width="1.5"/><circle cx="306.7" cy="208.3" r="7.4" fill="rgb(255,76,0)" stroke="rgb(255,76,0)" stroke-width="1.5"/><circle cx="237.8" cy="205.5" r="8.4" fill="rgb(255,56,0)" stroke="rgb(255,56,0)" stroke-width="1.5"/><circle cx="185.7" cy="93.8" r="7.4" fill="rgb(255,51,0)" stroke="rgb(255,51,0)" stroke-width="1.5"/><circle cx="157.8" cy="91.9" r="9.3" fill="rgb(255,138,0)" stroke="rgb(255,138,0)" stroke-width="1.5"/><polygon points="146.6,101.2 161.5,104.0 178.3,110.5 195.0,106.8 204.3,125.4 185.7,128.2 163.4,125.4 150.3,118.0" fill="rgb(255,140,0)" stroke="rgb(255,140,0)" stroke-linejoin="round" stroke-width="1.5"/><polygon points="193.2,84.5 204.3,78.9 219.2,79.8 224.8,93.8 222.9,119.9 228.5,134.8 247.2,119.9 255.5,129.2 252.7,147.8 250.9,168.3 245.3,183.2 232.3,185.0 222.9,175.7 211.8,179.4 193.2,183.2 182.0,172.0 183.8,153.4 193.2,138.5 200.6,125.4 195.0,106.8" fill="rgb(255,158,0)" stroke="rgb(255,158,0)" stroke-linejoin="round" stroke-width="1.5"/><ellipse cx="226.7" cy="202.7" rx="11.5" ry="18.6" fill="rgb(255,153,0)" stroke="rgb(255,153,0)" transform="rotate(8 226.7 202.7)" stroke-width="1.5"/><circle cx="280.7" cy="160.8" r="10.8" fill="rgb(255,158,0)" stroke="rgb(255,158,0)" stroke-width="1.5"/><ellipse cx="269.5" cy="214.8" rx="11.5" ry="7.8" fill="rgb(255,148,0)" stroke="rgb(255,148,0)" transform="rotate(-35 269.5 214.8)" stroke-width="1.5"/><polygon points="200.6,91.9 215.5,90.1 219.2,119.9 221.1,138.5 208.1,145.9 202.5,125.4" fill="rgb(255,255,0)" stroke="rgb(255,255,0)" stroke-linejoin="round" stroke-width="1.5"/><ellipse cx="198.7" cy="160.8" rx="14.5" ry="11.5" fill="rgb(255,255,0)" stroke="rgb(255,255,0)" transform="rotate(0 198.7 160.8)" stroke-width="1.5"/><ellipse cx="236.9" cy="157.1" rx="8.9" ry="15.8" fill="rgb(255,242,0)" stroke="rgb(255,242,0)" transform="rotate(0 236.9 157.1)" stroke-width="1.5"/><circle cx="215.5" cy="147.8" r="9.3" fill="rgb(255,230,0)" stroke="rgb(255,230,0)" stroke-width="1.5"/><circle cx="280.7" cy="160.8" r="4.7" fill="rgb(255,204,0)" stroke="rgb(255,204,0)" stroke-width="1.5"/></g></g><rect x="155.4" y="149.6" width="109.4" height="108.600" fill="none" stroke="#000" stroke-width="2.900" stroke-linejoin="round"/><line x1="155" y1="129.7" x2="265" y2="129.7" stroke="#000" stroke-width="1.7" stroke-dasharray="3.3 2.3"/><line x1="155" y1="277.7" x2="265" y2="277.7" stroke="#000" stroke-width="1.7" stroke-dasharray="3.3 2.3"/><line x1="136" y1="150" x2="136" y2="258.500" stroke="#000" stroke-width="1.7" stroke-dasharray="3.3 2.3"/><line x1="284" y1="150" x2="284" y2="258.500" stroke="#000" stroke-width="1.7" stroke-dasharray="3.3 2.3"/><rect x="85.8" y="1" width="248.2" height="66.6" fill="#fff" stroke="#000" stroke-width="1.800"/><rect x="90.4" y="56" width="240.600" height="8.200" fill="url(#lg)"/></svg>
<span class="t" style="left:2589.98px;top:771.98px;font-size:24px;line-height:24px;color:#111;transform:scaleX(0.9756);-webkit-text-stroke-width:0.2px;">Pitch Frequency</span>
<span class="t" style="left:2556.31px;top:807.33px;font-size:14.5px;line-height:14.5px;color:#111;font-weight:bold;transform:scaleX(0.9465);-webkit-text-stroke-width:0.1px;">Least</span>
<span class="t" style="left:2762.31px;top:807.33px;font-size:14.5px;line-height:14.5px;color:#111;font-weight:bold;transform:scaleX(0.9416);-webkit-text-stroke-width:0.1px;">Most</span>
<span class="t" style="left:2780.10px;top:1108.60px;font-size:13px;line-height:13px;color:#333;-webkit-text-stroke-width:0.1px;">© TRUMEDIA 2024</span>
<svg class="a" style="left:2466px;top:1196px" width="412" height="360" viewBox="0 0 412 360"><line x1="0" y1="335.9" x2="412" y2="335.9" stroke="#d2d2d2" stroke-width="1.2"/><polygon points="116.75,335.7 126.75,335.7 115.5,356.5 103,356.5" fill="#000"/><polygon points="292.5,335.7 301.75,335.7 315.5,356.5 304.25,356.5" fill="#000"/><path d="M156.75 345.6 L261.75 345.6 L261.75 348 Q209 356 156.75 348 Z" fill="#000"/><g><polygon points="0.1,60.1 0.1,71.5 29.3,80.4 62.7,91.1 67.5,86.4 37.7,75.6" fill="#c6c6c6" /><polygon points="31.7,75.3 66.3,88.7 62.7,91.1 35.3,79.2" fill="#efefef" /><ellipse cx="55.0" cy="84.0" rx="14.1" ry="17.9" fill="#b2b2b2"/><polygon points="42.4,75.6 46.0,67.9 55.0,65.3 63.9,67.9 68.7,75.6 69.3,82.2 66.3,85.8 63.3,84.0 61.5,76.8 54.4,72.1 47.2,72.6" fill="#3e3e3e" /><polygon points="31.7,75.3 66.3,88.7 62.7,91.1 35.3,79.2" fill="#efefef" /><polygon points="19.8,103.0 29.3,101.3 40.1,126.3 56.7,117.9 62.7,145.4 54.4,169.2 44.2,200.8 22.2,194.2 1.9,193.0 2.9,171.6 10.9,145.4 14.4,121.5" fill="#262626" stroke="#a0a0a0" stroke-width="1.6" stroke-linejoin="round"/><polygon points="40.1,126.3 56.7,117.9 59.7,151.3 52.0,169.2 37.7,157.3" fill="#101010" /><polygon points="17.4,123.9 40.1,132.2 38.9,140.6 19.8,142.4" fill="#3c3c3c" /><polygon points="37.7,157.3 46.0,160.8 43.6,193.0 40.1,181.1" fill="#3a3a3a" /><polygon points="21.0,103.6 31.7,101.8 61.5,94.7 70.5,95.3 69.3,101.8 56.7,109.6 25.8,121.5 16.2,119.7" fill="#1a1a1a" /><polygon points="25.8,121.5 56.7,109.6 62.7,112.6 31.1,130.1" fill="#b9b9b9" /><polygon points="29.3,112.6 56.7,103.0 61.5,107.8 31.7,118.5" fill="#575757" /><polygon points="16.8,119.7 19.8,103.6 30.5,102.4 24.6,116.7" fill="#050505" /><polygon points="56.2,117.7 77.6,132.2 76.4,137.6 67.5,133.4 62.1,148.9 59.1,151.3 49.6,133.4" fill="#0e0e0e" /><polygon points="59.7,135.8 68.7,133.4 68.9,148.0 62.1,145.4" fill="#6a6a6a" /><polygon points="75.2,91.7 85.9,91.5 89.2,121.5 91.9,145.4 87.7,151.5 71.0,148.0 69.6,135.8 78.4,123.9 76.8,114.4" fill="#8d8d8d" stroke="#b5b5b5" stroke-width="1.2" stroke-linejoin="round"/><polygon points="75.2,91.7 85.9,91.5 87.1,113.2 77.6,115.0" fill="#6d6d6d" /><polygon points="77.0,115.0 88.9,112.0 89.9,121.5 78.8,124.1" fill="#ebebeb" /><circle cx="68.4" cy="89.6" r="6.2" fill="#5c5c5c"/><polygon points="1.9,190.0 22.2,193.0 43.6,201.1 42.4,205.2 21.6,197.3 1.3,194.5" fill="#dcdcdc" /><polygon points="0.1,197.0 43.6,200.6 46.0,211.9 57.0,257.2 55.8,271.5 52.2,324.0 49.6,325.4 37.7,329.0 25.8,331.3 5.5,352.8 4.1,354.9 11.7,316.8 24.8,276.3 19.8,253.6 0.1,223.8" fill="url(#pg)" stroke="#a0a0a0" stroke-width="1.6" stroke-linejoin="round"/><polygon points="0.1,202.4 31.7,209.5 21.2,221.7 0.1,220.3" fill="#2c2c2c" /><polygon points="17.4,235.8 28.1,247.7 36.5,271.5 24.6,272.7 22.2,253.6" fill="#2e2e2e" /><polygon points="7.9,337.1 25.8,331.1 32.0,329.0 35.5,343.0 54.4,355.2 4.1,355.2" fill="#858585" /><polygon points="19.8,353.2 37.7,346.4 54.4,355.2" fill="#c0c0c0" /><polygon points="32.9,331.1 49.6,326.3 71.3,334.7 67.7,339.5 56.7,340.9 32.9,339.5" fill="#b3b3b3" stroke="#dadada" stroke-width="1.2" stroke-linejoin="round"/></g><g clip-path="url(#hclip)"><g filter="url(#heat)"><rect x="40" y="30" width="340" height="360" fill="#000"/><g filter="url(#preblur)"><polygon points="83.3,158.3 85.2,132.2 101.9,115.4 111.2,100.5 135.4,83.8 154.1,83.8 157.8,100.5 170.8,108.0 195.0,100.5 222.9,100.5 236.0,111.7 234.1,128.5 260.2,134.1 269.5,154.5 288.1,165.7 316.0,173.2 334.7,188.1 338.4,202.9 338.4,314.7 83.3,314.7" fill="#f00" stroke="#f00" stroke-width="1.5" stroke-linejoin="round"/><circle cx="146.6" cy="91.2" r="10.2" fill="#f00"/></g><circle cx="201.4" cy="170.0" r="6.0" fill="rgb(255,46,0)"/><circle cx="103.9" cy="211.8" r="8.9" fill="rgb(255,14,0)"/><circle cx="180.0" cy="246.2" r="7.9" fill="rgb(255,40,0)"/><circle cx="123.4" cy="138.7" r="5.9" fill="rgb(255,32,0)"/><circle cx="319.0" cy="220.1" r="9.8" fill="rgb(255,27,0)"/><circle cx="255.3" cy="251.3" r="7.7" fill="rgb(255,16,0)"/><circle cx="151.3" cy="132.2" r="6.9" fill="rgb(255,44,0)"/><circle cx="134.2" cy="288.4" r="10.5" fill="rgb(255,15,0)"/><circle cx="179.9" cy="197.3" r="5.4" fill="rgb(255,29,0)"/><circle cx="114.2" cy="217.4" r="10.5" fill="rgb(255,21,0)"/><circle cx="127.3" cy="224.4" r="10.9" fill="rgb(255,15,0)"/><circle cx="224.9" cy="223.8" r="6.1" fill="rgb(255,23,0)"/><circle cx="263.3" cy="303.3" r="6.6" fill="rgb(255,36,0)"/><circle cx="233.9" cy="262.6" r="5.7" fill="rgb(255,26,0)"/><circle cx="303.7" cy="218.6" r="7.9" fill="rgb(255,28,0)"/><circle cx="137.7" cy="186.3" r="7.1" fill="rgb(255,16,0)"/><circle cx="210.2" cy="247.6" r="6.7" fill="rgb(255,41,0)"/><circle cx="191.7" cy="137.1" r="11.0" fill="rgb(255,28,0)"/><circle cx="178.4" cy="282.3" r="7.4" fill="rgb(255,38,0)"/><circle cx="126.9" cy="278.5" r="6.8" fill="rgb(255,15,0)"/><circle cx="98.8" cy="131.9" r="7.5" fill="rgb(255,36,0)"/><circle cx="226.6" cy="115.5" r="5.7" fill="rgb(255,34,0)"/><circle cx="262.8" cy="260.2" r="7.5" fill="rgb(255,47,0)"/><circle cx="126.4" cy="249.0" r="9.8" fill="rgb(255,46,0)"/><circle cx="218.2" cy="123.8" r="9.0" fill="rgb(255,16,0)"/><circle cx="128.2" cy="189.2" r="8.5" fill="rgb(255,28,0)"/><circle cx="127.4" cy="195.1" r="10.9" fill="rgb(255,33,0)"/><circle cx="310.1" cy="209.5" r="8.3" fill="rgb(255,33,0)"/><circle cx="221.6" cy="153.1" r="9.5" fill="rgb(255,40,0)"/><circle cx="109.6" cy="245.3" r="7.9" fill="rgb(255,32,0)"/><polygon points="116.8,202.9 126.1,195.5 148.5,188.1 170.8,184.3 189.4,191.8 208.1,201.1 234.1,188.1 250.9,189.9 265.8,197.4 267.6,214.1 263.9,230.9 267.6,247.6 258.3,255.1 243.4,258.8 234.1,268.1 222.9,260.7 204.3,258.8 189.4,264.4 174.5,255.1 157.8,249.5 154.1,230.9 137.3,219.7 122.4,212.3" fill="rgb(255,64,0)" stroke="rgb(255,64,0)" stroke-linejoin="round" stroke-width="6"/><polygon points="155.9,214.1 178.3,202.9 204.3,210.4 228.5,217.8 249.0,227.2 243.4,245.8 215.5,253.2 182.0,249.5 159.6,238.3" fill="rgb(255,64,0)" stroke="rgb(255,64,0)" stroke-linejoin="round" stroke-width="6"/><circle cx="144.8" cy="111.7" r="10.2" fill="rgb(255,0,0)" stroke="rgb(255,0,0)" stroke-width="1.5"/><circle cx="120.5" cy="165.7" r="11.2" fill="rgb(255,26,0)" stroke="rgb(255,26,0)" stroke-width="1.5"/><circle cx="306.7" cy="221.6" r="13.0" fill="rgb(255,20,0)" stroke="rgb(255,20,0)" stroke-width="1.5"/><circle cx="288.1" cy="268.1" r="13.0" fill="rgb(255,31,0)" stroke="rgb(255,31,0)" stroke-width="1.5"/><circle cx="111.2" cy="258.8" r="11.2" fill="rgb(255,26,0)" stroke="rgb(255,26,0)" stroke-width="1.5"/><circle cx="101.9" cy="286.7" r="11.2" fill="rgb(255,0,0)" stroke="rgb(255,0,0)" stroke-width="1.5"/><circle cx="204.3" cy="165.7" r="37.2" fill="rgb(255,26,0)" stroke="rgb(255,26,0)" stroke-width="1.5"/><circle cx="167.1" cy="115.4" r="7.4" fill="rgb(255,0,0)" stroke="rgb(255,0,0)" stroke-width="1.5"/><polygon points="101.9,202.9 120.5,184.3 148.5,175.0 174.5,171.3 193.2,178.7 208.1,188.1 234.1,173.2 256.5,175.0 278.8,188.1 284.4,212.3 280.7,232.7 284.4,251.4 269.5,266.3 249.0,273.7 234.1,283.0 219.2,275.6 204.3,271.8 189.4,279.3 170.8,270.0 148.5,262.5 142.9,236.5 128.0,230.9 109.4,221.6" fill="rgb(255,69,0)" stroke="rgb(255,69,0)" stroke-linejoin="round" stroke-width="1.5"/><polygon points="116.8,202.9 126.1,195.5 148.5,188.1 170.8,184.3 189.4,191.8 208.1,201.1 234.1,188.1 250.9,189.9 265.8,197.4 267.6,214.1 263.9,230.9 267.6,247.6 258.3,255.1 243.4,258.8 234.1,268.1 222.9,260.7 204.3,258.8 189.4,264.4 174.5,255.1 157.8,249.5 154.1,230.9 137.3,219.7 122.4,212.3" fill="rgb(255,138,0)" stroke="rgb(255,138,0)" stroke-linejoin="round" stroke-width="1.5"/><polygon points="155.9,214.1 178.3,202.9 204.3,210.4 228.5,217.8 249.0,227.2 243.4,245.8 215.5,253.2 182.0,249.5 159.6,238.3" fill="rgb(255,184,0)" stroke="rgb(255,184,0)" stroke-linejoin="round" stroke-width="1.5"/><ellipse cx="193.2" cy="226.2" rx="20.5" ry="10.2" fill="rgb(255,235,0)" stroke="rgb(255,235,0)" transform="rotate(12 193.2 226.2)" stroke-width="1.5"/><ellipse cx="215.5" cy="233.7" rx="14.9" ry="7.8" fill="rgb(255,255,0)" stroke="rgb(255,255,0)" transform="rotate(12 215.5 233.7)" stroke-width="1.5"/></g></g><rect x="155.4" y="149.6" width="109.4" height="108.600" fill="none" stroke="#000" stroke-width="2.900" stroke-linejoin="round"/><line x1="155" y1="129.7" x2="265" y2="129.7" stroke="#000" stroke-width="1.7" stroke-dasharray="3.3 2.3"/><line x1="155" y1="277.7" x2="265" y2="277.7" stroke="#000" stroke-width="1.7" stroke-dasharray="3.3 2.3"/><line x1="136" y1="150" x2="136" y2="258.500" stroke="#000" stroke-width="1.7" stroke-dasharray="3.3 2.3"/><line x1="284" y1="150" x2="284" y2="258.500" stroke="#000" stroke-width="1.7" stroke-dasharray="3.3 2.3"/><rect x="85.8" y="1" width="248.2" height="66.6" fill="#fff" stroke="#000" stroke-width="1.800"/><rect x="90.4" y="56" width="240.600" height="8.200" fill="url(#lg)"/></svg>
<span class="t" style="left:2589.98px;top:1201.98px;font-size:24px;line-height:24px;color:#111;transform:scaleX(0.9756);-webkit-text-stroke-width:0.2px;">Pitch Frequency</span>
<span class="t" style="left:2556.31px;top:1237.33px;font-size:14.5px;line-height:14.5px;color:#111;font-weight:bold;transform:scaleX(0.9465);-webkit-text-stroke-width:0.1px;">Least</span>
<span class="t" style="left:2762.31px;top:1237.33px;font-size:14.5px;line-height:14.5px;color:#111;font-weight:bold;transform:scaleX(0.9416);-webkit-text-stroke-width:0.1px;">Most</span>
<div style="left:1002.5px;top:186px;width:1296.5px;height:700px;background:#fff;border-radius:17px;box-shadow:0 4px 5px -1.5px rgba(0,0,0,0.5),0 2px 14px 0 rgba(0,0,0,0.13);"></div>
<span class="t" style="left:1605.56px;top:209.64px;font-size:27px;line-height:27px;color:#3a5b8d;transform:scaleX(0.9356);">Settings</span>
<svg class="a" style="left:2244px;top:203px" width="38" height="38" viewBox="0 0 24 24"><path fill="#000" d="M19 6.410L17.590 5 12 10.590 6.410 5 5 6.410 10.590 12 5 17.590 6.410 19 12 13.410 17.590 19 19 17.590 13.410 12z"/></svg>
<div style="left:1006px;top:252px;width:1289.5px;height:1.2px;background:#ebedf0;"></div>
<div style="left:1217px;top:333.5px;width:1070.5px;height:1.3px;background:#d9dce0;"></div>
<div style="left:1014px;top:262px;width:204px;height:72.5px;border:1.3px solid #dadde1;border-bottom:none;border-radius:9px 9px 0 0;box-sizing:border-box;"></div>
<span class="t" style="left:1042.30px;top:287.29px;font-size:26px;line-height:26px;color:#555a60;transform:scaleX(0.9115);">Page Settings</span>
<span class="t" style="left:1249.97px;top:287.29px;font-size:26px;line-height:26px;color:#375a8a;transform:scaleX(0.9449);">Grid Sizing</span>
<span class="t" style="left:1020.69px;top:354.29px;font-size:26px;line-height:26px;color:#000;transform:scaleX(0.9651);">Player Description Format</span>
<span class="t" style="left:1450.93px;top:354.29px;font-size:26px;line-height:26px;color:#000;transform:scaleX(0.9704);">Player Description Alignment</span>
<span class="t" style="left:1880.74px;top:354.29px;font-size:26px;line-height:26px;color:#000;transform:scaleX(0.9440);">Player Description Font Size</span>
<div style="left:1021px;top:385px;width:400.5px;height:59px;background:#fff;border:1px solid #cfcfcf;box-sizing:border-box;"></div>
<div style="left:1373px;top:386px;width:1px;height:57px;background:#d6d6d6;"></div>
<span class="t" style="left:1029.19px;top:402.89px;font-size:26px;line-height:26px;color:#000;transform:scaleX(0.9642);">Medium Headshot</span>
<svg class="a" style="left:1377.45px;top:395.65px" width="35.5" height="35.5" viewBox="0 0 20 20"><path fill="#7d7d7d" d="M4.516 7.548c0.436-0.446 1.043-0.481 1.576 0l3.908 3.747 3.908-3.747c0.533-0.481 1.141-0.446 1.574 0 0.436 0.445 0.408 1.197 0 1.615-0.406 0.418-4.695 4.502-4.695 4.502-0.217 0.223-0.502 0.335-0.787 0.335s-0.570-0.112-0.789-0.335c0 0-4.287-4.084-4.695-4.502s-0.436-1.170 0-1.615z"/></svg>
<div style="left:1451px;top:385px;width:400.5px;height:59px;background:#fff;border:1px solid #cfcfcf;box-sizing:border-box;"></div>
<div style="left:1803px;top:386px;width:1px;height:57px;background:#d6d6d6;"></div>
<span class="t" style="left:1459.13px;top:402.89px;font-size:26px;line-height:26px;color:#000;transform:scaleX(0.9930);">Left</span>
<svg class="a" style="left:1807.45px;top:395.65px" width="35.5" height="35.5" viewBox="0 0 20 20"><path fill="#7d7d7d" d="M4.516 7.548c0.436-0.446 1.043-0.481 1.576 0l3.908 3.747 3.908-3.747c0.533-0.481 1.141-0.446 1.574 0 0.436 0.445 0.408 1.197 0 1.615-0.406 0.418-4.695 4.502-4.695 4.502-0.217 0.223-0.502 0.335-0.787 0.335s-0.570-0.112-0.789-0.335c0 0-4.287-4.084-4.695-4.502s-0.436-1.170 0-1.615z"/></svg>
<div style="left:1880px;top:385px;width:400.5px;height:59px;background:#fff;border:1px solid #cfcfcf;box-sizing:border-box;"></div>
<div style="left:2232px;top:386px;width:1px;height:57px;background:#d6d6d6;"></div>
<span class="t" style="left:1887.70px;top:402.89px;font-size:26px;line-height:26px;color:#000;letter-spacing:1.349px;">20</span>
<svg class="a" style="left:2236.45px;top:395.65px" width="35.5" height="35.5" viewBox="0 0 20 20"><path fill="#7d7d7d" d="M4.516 7.548c0.436-0.446 1.043-0.481 1.576 0l3.908 3.747 3.908-3.747c0.533-0.481 1.141-0.446 1.574 0 0.436 0.445 0.408 1.197 0 1.615-0.406 0.418-4.695 4.502-4.695 4.502-0.217 0.223-0.502 0.335-0.787 0.335s-0.570-0.112-0.789-0.335c0 0-4.287-4.084-4.695-4.502s-0.436-1.170 0-1.615z"/></svg>
<span class="t" style="left:1024.74px;top:485.29px;font-size:26px;line-height:26px;color:#000;transform:scaleX(0.9419);">Page Title</span>
<div style="left:1021px;top:516.5px;width:398px;height:58.5px;background:#fff;border:1px solid #cfcfcf;box-sizing:border-box;"></div>
<span class="t" style="left:1036.69px;top:533.49px;font-size:26px;line-height:26px;color:#495057;transform:scaleX(0.9687);">Pitcher Report</span>
<span class="t" style="left:1451.94px;top:490.79px;font-size:26px;line-height:26px;color:#000;transform:scaleX(0.9728);">Title Text Color</span>
<span class="t" style="left:1881.45px;top:490.79px;font-size:26px;line-height:26px;color:#000;transform:scaleX(0.9622);">Title Background Color</span>
<div style="left:1451px;top:521.0px;width:400.5px;height:59.5px;background:#fff;border:1px solid #cfcfcf;box-sizing:border-box;"></div>
<div style="left:1803px;top:522.0px;width:1px;height:57.5px;background:#d6d6d6;"></div>
<span class="t" style="left:1459.25px;top:538.99px;font-size:26px;line-height:26px;color:#000;transform:scaleX(0.9360);">Black</span>
<svg class="a" style="left:1807.45px;top:531.75px" width="35.5" height="35.5" viewBox="0 0 20 20"><path fill="#7d7d7d" d="M4.516 7.548c0.436-0.446 1.043-0.481 1.576 0l3.908 3.747 3.908-3.747c0.533-0.481 1.141-0.446 1.574 0 0.436 0.445 0.408 1.197 0 1.615-0.406 0.418-4.695 4.502-4.695 4.502-0.217 0.223-0.502 0.335-0.787 0.335s-0.570-0.112-0.789-0.335c0 0-4.287-4.084-4.695-4.502s-0.436-1.170 0-1.615z"/></svg>
<div style="left:1880px;top:521.0px;width:400.5px;height:59.5px;background:#fff;border:1px solid #cfcfcf;box-sizing:border-box;"></div>
<div style="left:2232px;top:522.0px;width:1px;height:57.5px;background:#d6d6d6;"></div>
<span class="t" style="left:1888.17px;top:538.99px;font-size:26px;line-height:26px;color:#000;transform:scaleX(0.9773);">None</span>
<svg class="a" style="left:2236.45px;top:531.75px" width="35.5" height="35.5" viewBox="0 0 20 20"><path fill="#7d7d7d" d="M4.516 7.548c0.436-0.446 1.043-0.481 1.576 0l3.908 3.747 3.908-3.747c0.533-0.481 1.141-0.446 1.574 0 0.436 0.445 0.408 1.197 0 1.615-0.406 0.418-4.695 4.502-4.695 4.502-0.217 0.223-0.502 0.335-0.787 0.335s-0.570-0.112-0.789-0.335c0 0-4.287-4.084-4.695-4.502s-0.436-1.170 0-1.615z"/></svg>
<span class="t" style="left:1021.96px;top:627.29px;font-size:26px;line-height:26px;color:#000;transform:scaleX(0.9358);">Title Font Size</span>
<span class="t" style="left:1451.94px;top:627.29px;font-size:26px;line-height:26px;color:#000;transform:scaleX(0.9877);">Title Horizontal Alignment</span>
<span class="t" style="left:1881.02px;top:627.29px;font-size:26px;line-height:26px;color:#000;transform:scaleX(0.9262);">Player Handedness Color (L)</span>
<div style="left:1021px;top:658px;width:400.5px;height:59px;background:#fff;border:1px solid #cfcfcf;box-sizing:border-box;"></div>
<div style="left:1373px;top:659px;width:1px;height:57px;background:#d6d6d6;"></div>
<span class="t" style="left:1028.70px;top:674.69px;font-size:26px;line-height:26px;color:#000;letter-spacing:0.719px;">24</span>
<svg class="a" style="left:1377.45px;top:667.45px" width="35.5" height="35.5" viewBox="0 0 20 20"><path fill="#7d7d7d" d="M4.516 7.548c0.436-0.446 1.043-0.481 1.576 0l3.908 3.747 3.908-3.747c0.533-0.481 1.141-0.446 1.574 0 0.436 0.445 0.408 1.197 0 1.615-0.406 0.418-4.695 4.502-4.695 4.502-0.217 0.223-0.502 0.335-0.787 0.335s-0.570-0.112-0.789-0.335c0 0-4.287-4.084-4.695-4.502s-0.436-1.170 0-1.615z"/></svg>
<div style="left:1451px;top:658px;width:400.5px;height:59px;background:#fff;border:1px solid #cfcfcf;box-sizing:border-box;"></div>
<div style="left:1803px;top:659px;width:1px;height:57px;background:#d6d6d6;"></div>
<span class="t" style="left:1459.92px;top:674.69px;font-size:26px;line-height:26px;color:#000;transform:scaleX(0.9867);">Center</span>
<svg class="a" style="left:1807.45px;top:667.45px" width="35.5" height="35.5" viewBox="0 0 20 20"><path fill="#7d7d7d" d="M4.516 7.548c0.436-0.446 1.043-0.481 1.576 0l3.908 3.747 3.908-3.747c0.533-0.481 1.141-0.446 1.574 0 0.436 0.445 0.408 1.197 0 1.615-0.406 0.418-4.695 4.502-4.695 4.502-0.217 0.223-0.502 0.335-0.787 0.335s-0.570-0.112-0.789-0.335c0 0-4.287-4.084-4.695-4.502s-0.436-1.170 0-1.615z"/></svg>
<div style="left:1880px;top:658px;width:400.5px;height:59px;background:#fff;border:1px solid #cfcfcf;box-sizing:border-box;"></div>
<div style="left:2232px;top:659px;width:1px;height:57px;background:#d6d6d6;"></div>
<span class="t" style="left:1888.25px;top:674.69px;font-size:26px;line-height:26px;color:#000;transform:scaleX(0.9360);">Black</span>
<svg class="a" style="left:2236.45px;top:667.45px" width="35.5" height="35.5" viewBox="0 0 20 20"><path fill="#7d7d7d" d="M4.516 7.548c0.436-0.446 1.043-0.481 1.576 0l3.908 3.747 3.908-3.747c0.533-0.481 1.141-0.446 1.574 0 0.436 0.445 0.408 1.197 0 1.615-0.406 0.418-4.695 4.502-4.695 4.502-0.217 0.223-0.502 0.335-0.787 0.335s-0.570-0.112-0.789-0.335c0 0-4.287-4.084-4.695-4.502s-0.436-1.170 0-1.615z"/></svg>
<span class="t" style="left:1021.47px;top:763.29px;font-size:26px;line-height:26px;color:#000;transform:scaleX(0.9264);">Player Handedness Color (R)</span>
<span class="t" style="left:1451.04px;top:763.29px;font-size:26px;line-height:26px;color:#000;transform:scaleX(0.9202);">Player Handedness Color (S)</span>
<div style="left:1021px;top:793.5px;width:400.5px;height:60.5px;background:#fff;border:1px solid #cfcfcf;box-sizing:border-box;"></div>
<div style="left:1373px;top:794.5px;width:1px;height:58.5px;background:#d6d6d6;"></div>
<span class="t" style="left:1029.25px;top:812.59px;font-size:26px;line-height:26px;color:#000;transform:scaleX(0.9360);">Black</span>
<svg class="a" style="left:1377.45px;top:805.35px" width="35.5" height="35.5" viewBox="0 0 20 20"><path fill="#7d7d7d" d="M4.516 7.548c0.436-0.446 1.043-0.481 1.576 0l3.908 3.747 3.908-3.747c0.533-0.481 1.141-0.446 1.574 0 0.436 0.445 0.408 1.197 0 1.615-0.406 0.418-4.695 4.502-4.695 4.502-0.217 0.223-0.502 0.335-0.787 0.335s-0.570-0.112-0.789-0.335c0 0-4.287-4.084-4.695-4.502s-0.436-1.170 0-1.615z"/></svg>
<div style="left:1451px;top:793.5px;width:400.5px;height:60.5px;background:#fff;border:1px solid #cfcfcf;box-sizing:border-box;"></div>
<div style="left:1803px;top:794.5px;width:1px;height:58.5px;background:#d6d6d6;"></div>
<span class="t" style="left:1459.25px;top:812.59px;font-size:26px;line-height:26px;color:#000;transform:scaleX(0.9360);">Black</span>
<svg class="a" style="left:1807.45px;top:805.35px" width="35.5" height="35.5" viewBox="0 0 20 20"><path fill="#7d7d7d" d="M4.516 7.548c0.436-0.446 1.043-0.481 1.576 0l3.908 3.747 3.908-3.747c0.533-0.481 1.141-0.446 1.574 0 0.436 0.445 0.408 1.197 0 1.615-0.406 0.418-4.695 4.502-4.695 4.502-0.217 0.223-0.502 0.335-0.787 0.335s-0.570-0.112-0.789-0.335c0 0-4.287-4.084-4.695-4.502s-0.436-1.170 0-1.615z"/></svg>
<span class="t" style="left:1880.87px;top:762.99px;font-size:26px;line-height:26px;color:#000;transform:scaleX(0.9989);">Print Filters</span>
<div style="left:1882px;top:816px;width:58px;height:25px;background:#9aacc6;border-radius:12.5px;"></div>
<div style="left:1911px;top:810px;width:36px;height:36px;background:#375a8a;border-radius:50%;box-shadow:0 1.5px 3px rgba(0,0,0,0.35);"></div>
<div style="left:1857px;top:739px;width:190.5px;height:127px;border:10.5px solid #6ff04c;border-radius:46px;box-sizing:border-box;"></div>
<div style="left:860px;top:1400px;width:1200px;height:100px;background:radial-gradient(ellipse 590px 78px at 585px 128px, rgba(0,0,0,0.22) 0%, rgba(0,0,0,0.17) 30%, rgba(0,0,0,0.09) 60%, rgba(0,0,0,0.03) 85%, rgba(0,0,0,0) 100%);"></div>
<div style="left:0px;top:1498px;width:86px;height:2px;background:#535b66;"></div>
<svg class="a" style="left:0;top:1470px" width="2878" height="30" viewBox="0 1470 2878 30"><path d="M0 1477 Q1.5 1497.500 25 1500 H0 Z" fill="#050805"/><path d="M1 1470 V1478 Q3 1496.500 25 1499" fill="none" stroke="#5a626d" stroke-width="2"/><path d="M2878 1488 Q2873 1499 2856 1500 H2878 Z" fill="#15120a"/></svg>
</div>
</body></html>
